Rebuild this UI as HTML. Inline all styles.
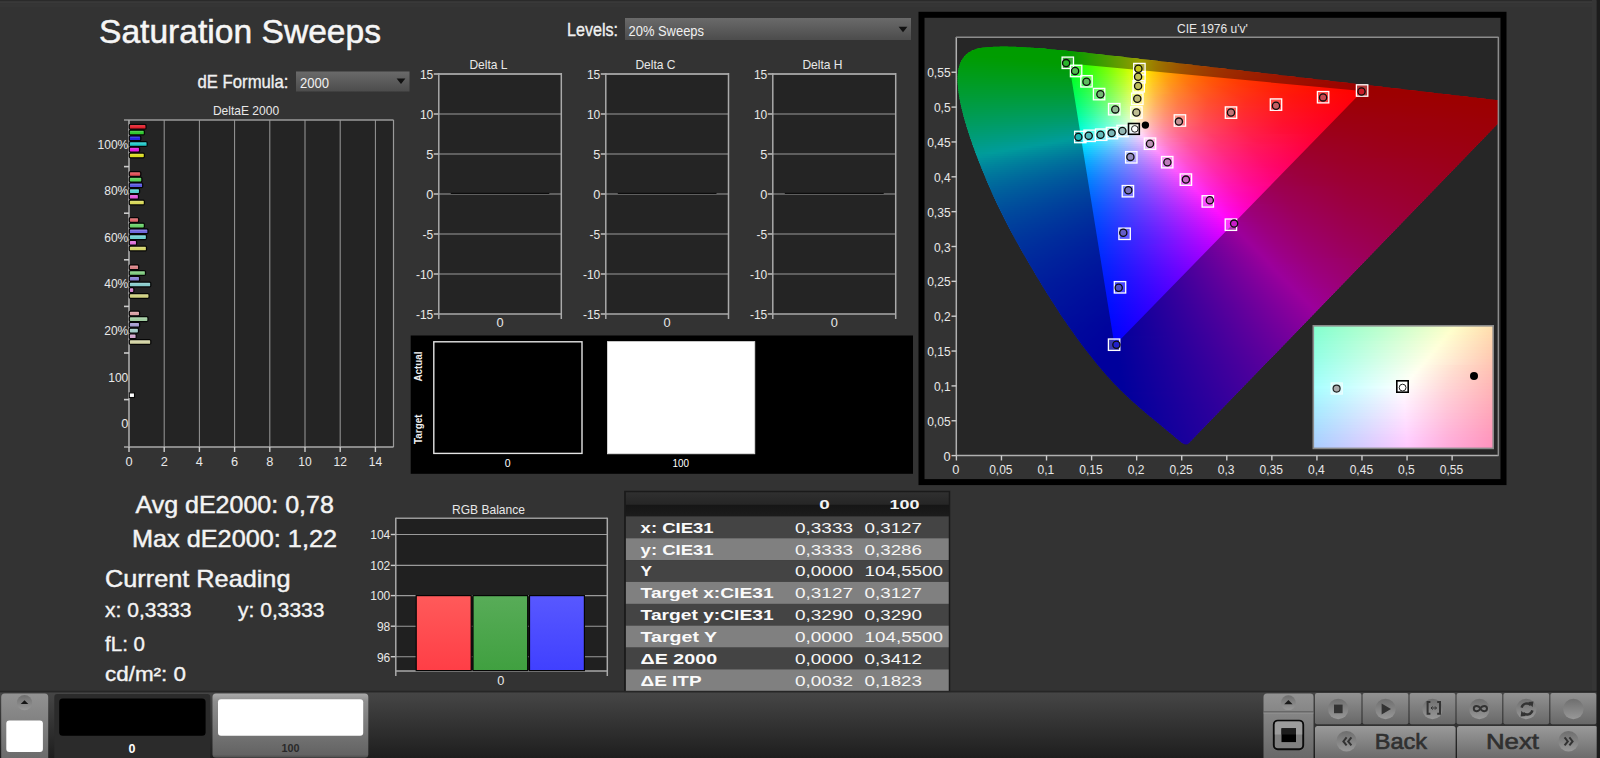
<!DOCTYPE html>
<html lang="en"><head><meta charset="utf-8"><title>Saturation Sweeps</title><style>html,body{margin:0;padding:0;background:#333;overflow:hidden}body{width:1600px;height:758px}</style></head><body>
<svg width="1600" height="758" viewBox="0 0 1600 758" font-family='"Liberation Sans", "DejaVu Sans", sans-serif' style="display:block"><defs><linearGradient id="dd" x1="0" y1="0" x2="0" y2="1"><stop offset="0" stop-color="#6a6a6a"/><stop offset="1" stop-color="#4c4c4c"/></linearGradient><linearGradient id="bb0" x1="0" y1="0" x2="0" y2="1"><stop offset="0" stop-color="#ff5a5a"/><stop offset="1" stop-color="#ff3e46"/></linearGradient><linearGradient id="bb1" x1="0" y1="0" x2="0" y2="1"><stop offset="0" stop-color="#58ac58"/><stop offset="1" stop-color="#40a040"/></linearGradient><linearGradient id="bb2" x1="0" y1="0" x2="0" y2="1"><stop offset="0" stop-color="#5858ff"/><stop offset="1" stop-color="#4040ff"/></linearGradient><linearGradient id="th" x1="0" y1="0" x2="0" y2="1"><stop offset="0" stop-color="#303030"/><stop offset=".5" stop-color="#262626"/><stop offset=".55" stop-color="#161616"/><stop offset="1" stop-color="#1c1c1c"/></linearGradient><linearGradient id="r0" gradientUnits="userSpaceOnUse" x1="0" x2="2000" y1="0" y2="0"><stop offset=".4930" stop-color="#00ff00"/><stop offset=".5115" stop-color="#00ff00"/></linearGradient><linearGradient id="r1" gradientUnits="userSpaceOnUse" x1="0" x2="2000" y1="0" y2="0"><stop offset=".4865" stop-color="#00ff00"/><stop offset=".5260" stop-color="#00ff00"/></linearGradient><linearGradient id="r2" gradientUnits="userSpaceOnUse" x1="0" x2="2000" y1="0" y2="0"><stop offset=".4840" stop-color="#00ff00"/><stop offset=".5335" stop-color="#00ff00"/><stop offset=".5360" stop-color="#0dff00"/></linearGradient><linearGradient id="r3" gradientUnits="userSpaceOnUse" x1="0" x2="2000" y1="0" y2="0"><stop offset=".4825" stop-color="#00ff00"/><stop offset=".5335" stop-color="#00ff00"/><stop offset=".5455" stop-color="#44ff00"/></linearGradient><linearGradient id="r4" gradientUnits="userSpaceOnUse" x1="0" x2="2000" y1="0" y2="0"><stop offset=".4810" stop-color="#00ff03"/><stop offset=".5340" stop-color="#01ff00"/><stop offset=".5445" stop-color="#3dff00"/><stop offset=".5545" stop-color="#7eff00"/></linearGradient><linearGradient id="r5" gradientUnits="userSpaceOnUse" x1="0" x2="2000" y1="0" y2="0"><stop offset=".4800" stop-color="#00ff07"/><stop offset=".5000" stop-color="#00ff00"/><stop offset=".5340" stop-color="#00ff00"/><stop offset=".5495" stop-color="#5cff00"/><stop offset=".5635" stop-color="#c2ff00"/></linearGradient><linearGradient id="r6" gradientUnits="userSpaceOnUse" x1="0" x2="2000" y1="0" y2="0"><stop offset=".4795" stop-color="#00ff0b"/><stop offset=".5105" stop-color="#00ff00"/><stop offset=".5340" stop-color="#00ff00"/><stop offset=".5430" stop-color="#33ff00"/><stop offset=".5530" stop-color="#74ff00"/><stop offset=".5620" stop-color="#b6ff00"/><stop offset=".5705" stop-color="#feff00"/><stop offset=".5725" stop-color="#ffef00"/></linearGradient><linearGradient id="r7" gradientUnits="userSpaceOnUse" x1="0" x2="2000" y1="0" y2="0"><stop offset=".4790" stop-color="#00ff0f"/><stop offset=".5210" stop-color="#00ff00"/><stop offset=".5345" stop-color="#01ff00"/><stop offset=".5445" stop-color="#3bff00"/><stop offset=".5535" stop-color="#77ff00"/><stop offset=".5625" stop-color="#baff00"/><stop offset=".5705" stop-color="#ffff00"/><stop offset=".5755" stop-color="#ffd700"/><stop offset=".5810" stop-color="#ffb500"/></linearGradient><linearGradient id="r8" gradientUnits="userSpaceOnUse" x1="0" x2="2000" y1="0" y2="0"><stop offset=".4785" stop-color="#00ff13"/><stop offset=".5345" stop-color="#00ff00"/><stop offset=".5445" stop-color="#3bff00"/><stop offset=".5535" stop-color="#77ff00"/><stop offset=".5620" stop-color="#b7ff00"/><stop offset=".5705" stop-color="#fffe00"/><stop offset=".5745" stop-color="#ffde00"/><stop offset=".5790" stop-color="#ffc000"/><stop offset=".5895" stop-color="#ff8d00"/></linearGradient><linearGradient id="r9" gradientUnits="userSpaceOnUse" x1="0" x2="2000" y1="0" y2="0"><stop offset=".4785" stop-color="#00ff17"/><stop offset=".5345" stop-color="#00ff04"/><stop offset=".5435" stop-color="#34ff00"/><stop offset=".5530" stop-color="#73ff00"/><stop offset=".5615" stop-color="#b3ff00"/><stop offset=".5705" stop-color="#fffe00"/><stop offset=".5760" stop-color="#ffd200"/><stop offset=".5825" stop-color="#ffac00"/><stop offset=".5900" stop-color="#ff8a00"/><stop offset=".5985" stop-color="#ff6e00"/></linearGradient><linearGradient id="r10" gradientUnits="userSpaceOnUse" x1="0" x2="2000" y1="0" y2="0"><stop offset=".4785" stop-color="#00ff1b"/><stop offset=".5350" stop-color="#01ff09"/><stop offset=".5445" stop-color="#3aff04"/><stop offset=".5535" stop-color="#76ff00"/><stop offset=".5620" stop-color="#b7ff00"/><stop offset=".5700" stop-color="#fdff00"/><stop offset=".5775" stop-color="#ffc700"/><stop offset=".5855" stop-color="#ff9c00"/><stop offset=".5955" stop-color="#ff7600"/><stop offset=".6070" stop-color="#ff5800"/></linearGradient><linearGradient id="r11" gradientUnits="userSpaceOnUse" x1="0" x2="2000" y1="0" y2="0"><stop offset=".4785" stop-color="#00ff1f"/><stop offset=".5350" stop-color="#00ff0e"/><stop offset=".5445" stop-color="#39ff0a"/><stop offset=".5535" stop-color="#76ff06"/><stop offset=".5620" stop-color="#b8ff01"/><stop offset=".5700" stop-color="#fdff00"/><stop offset=".5785" stop-color="#ffc000"/><stop offset=".5885" stop-color="#ff8e00"/><stop offset=".6005" stop-color="#ff6700"/><stop offset=".6155" stop-color="#ff4600"/></linearGradient><linearGradient id="r12" gradientUnits="userSpaceOnUse" x1="0" x2="2000" y1="0" y2="0"><stop offset=".4785" stop-color="#00ff23"/><stop offset=".5350" stop-color="#00ff13"/><stop offset=".5440" stop-color="#35ff10"/><stop offset=".5535" stop-color="#76ff0c"/><stop offset=".5620" stop-color="#b8ff07"/><stop offset=".5700" stop-color="#feff03"/><stop offset=".5745" stop-color="#ffda00"/><stop offset=".5795" stop-color="#ffb900"/><stop offset=".5850" stop-color="#ff9d00"/><stop offset=".5910" stop-color="#ff8400"/><stop offset=".6060" stop-color="#ff5800"/><stop offset=".6245" stop-color="#ff3700"/></linearGradient><linearGradient id="r13" gradientUnits="userSpaceOnUse" x1="0" x2="2000" y1="0" y2="0"><stop offset=".4785" stop-color="#00ff27"/><stop offset=".5355" stop-color="#01ff19"/><stop offset=".5450" stop-color="#3bff15"/><stop offset=".5540" stop-color="#79ff11"/><stop offset=".5620" stop-color="#b8ff0e"/><stop offset=".5700" stop-color="#ffff09"/><stop offset=".5745" stop-color="#ffd906"/><stop offset=".5800" stop-color="#ffb502"/><stop offset=".5865" stop-color="#ff9500"/><stop offset=".5935" stop-color="#ff7a00"/><stop offset=".6105" stop-color="#ff4e00"/><stop offset=".6330" stop-color="#ff2b00"/></linearGradient><linearGradient id="r14" gradientUnits="userSpaceOnUse" x1="0" x2="2000" y1="0" y2="0"><stop offset=".4785" stop-color="#00ff2b"/><stop offset=".5355" stop-color="#00ff1e"/><stop offset=".5450" stop-color="#3aff1b"/><stop offset=".5535" stop-color="#76ff18"/><stop offset=".5620" stop-color="#b8ff14"/><stop offset=".5695" stop-color="#fbff11"/><stop offset=".5700" stop-color="#fffe10"/><stop offset=".5760" stop-color="#ffcd0b"/><stop offset=".5815" stop-color="#ffac07"/><stop offset=".5885" stop-color="#ff8c03"/><stop offset=".5960" stop-color="#ff7100"/><stop offset=".6050" stop-color="#ff5900"/><stop offset=".6155" stop-color="#ff4400"/><stop offset=".6415" stop-color="#ff2100"/></linearGradient><linearGradient id="r15" gradientUnits="userSpaceOnUse" x1="0" x2="2000" y1="0" y2="0"><stop offset=".4785" stop-color="#00ff2f"/><stop offset=".5355" stop-color="#00ff24"/><stop offset=".5445" stop-color="#37ff21"/><stop offset=".5535" stop-color="#75ff1e"/><stop offset=".5620" stop-color="#b9ff1b"/><stop offset=".5695" stop-color="#fcff18"/><stop offset=".5760" stop-color="#ffcc11"/><stop offset=".5820" stop-color="#ffa90c"/><stop offset=".5895" stop-color="#ff8707"/><stop offset=".5985" stop-color="#ff6903"/><stop offset=".6085" stop-color="#ff5000"/><stop offset=".6205" stop-color="#ff3b00"/><stop offset=".6500" stop-color="#ff1900"/></linearGradient><linearGradient id="r16" gradientUnits="userSpaceOnUse" x1="0" x2="2000" y1="0" y2="0"><stop offset=".4785" stop-color="#00ff33"/><stop offset=".5360" stop-color="#01ff29"/><stop offset=".5450" stop-color="#39ff27"/><stop offset=".5535" stop-color="#75ff24"/><stop offset=".5605" stop-color="#acff22"/><stop offset=".5700" stop-color="#fffc1e"/><stop offset=".5760" stop-color="#ffcc16"/><stop offset=".5830" stop-color="#ffa210"/><stop offset=".5910" stop-color="#ff800a"/><stop offset=".6005" stop-color="#ff6306"/><stop offset=".6120" stop-color="#ff4901"/><stop offset=".6250" stop-color="#ff3300"/><stop offset=".6590" stop-color="#ff1100"/></linearGradient><linearGradient id="r17" gradientUnits="userSpaceOnUse" x1="0" x2="2000" y1="0" y2="0"><stop offset=".4785" stop-color="#00ff37"/><stop offset=".5360" stop-color="#00ff2f"/><stop offset=".5450" stop-color="#39ff2d"/><stop offset=".5530" stop-color="#71ff2b"/><stop offset=".5615" stop-color="#b5ff29"/><stop offset=".5695" stop-color="#feff26"/><stop offset=".5700" stop-color="#fffb25"/><stop offset=".5760" stop-color="#ffcb1c"/><stop offset=".5835" stop-color="#ff9f14"/><stop offset=".5925" stop-color="#ff7a0e"/><stop offset=".6030" stop-color="#ff5b08"/><stop offset=".6155" stop-color="#ff4103"/><stop offset=".6300" stop-color="#ff2c00"/><stop offset=".6675" stop-color="#ff0a00"/></linearGradient><linearGradient id="r18" gradientUnits="userSpaceOnUse" x1="0" x2="2000" y1="0" y2="0"><stop offset=".4785" stop-color="#00ff3b"/><stop offset=".5360" stop-color="#00ff35"/><stop offset=".5445" stop-color="#35ff33"/><stop offset=".5535" stop-color="#75ff31"/><stop offset=".5620" stop-color="#baff2f"/><stop offset=".5695" stop-color="#ffff2e"/><stop offset=".5760" stop-color="#ffca23"/><stop offset=".5840" stop-color="#ff9c19"/><stop offset=".5935" stop-color="#ff7611"/><stop offset=".6045" stop-color="#ff570b"/><stop offset=".6180" stop-color="#ff3c05"/><stop offset=".6340" stop-color="#ff2701"/><stop offset=".6760" stop-color="#ff0500"/></linearGradient><linearGradient id="r19" gradientUnits="userSpaceOnUse" x1="0" x2="2000" y1="0" y2="0"><stop offset=".4785" stop-color="#00ff40"/><stop offset=".5360" stop-color="#00ff3a"/><stop offset=".5440" stop-color="#31ff39"/><stop offset=".5530" stop-color="#71ff38"/><stop offset=".5610" stop-color="#b1ff37"/><stop offset=".5695" stop-color="#fffe35"/><stop offset=".5765" stop-color="#ffc528"/><stop offset=".5845" stop-color="#ff981e"/><stop offset=".5945" stop-color="#ff7115"/><stop offset=".6065" stop-color="#ff520d"/><stop offset=".6210" stop-color="#ff3707"/><stop offset=".6385" stop-color="#ff2102"/><stop offset=".6600" stop-color="#ff0e00"/><stop offset=".6850" stop-color="#ff0000"/></linearGradient><linearGradient id="r20" gradientUnits="userSpaceOnUse" x1="0" x2="2000" y1="0" y2="0"><stop offset=".4785" stop-color="#00ff44"/><stop offset=".5365" stop-color="#00ff40"/><stop offset=".5455" stop-color="#3aff40"/><stop offset=".5535" stop-color="#74ff3f"/><stop offset=".5610" stop-color="#b2ff3e"/><stop offset=".5695" stop-color="#fffd3c"/><stop offset=".5765" stop-color="#ffc42e"/><stop offset=".5855" stop-color="#ff9321"/><stop offset=".5960" stop-color="#ff6c18"/><stop offset=".6090" stop-color="#ff4b0f"/><stop offset=".6260" stop-color="#ff2f08"/><stop offset=".6465" stop-color="#ff1903"/><stop offset=".6800" stop-color="#ff0200"/><stop offset=".6935" stop-color="#ff0000"/></linearGradient><linearGradient id="r21" gradientUnits="userSpaceOnUse" x1="0" x2="2000" y1="0" y2="0"><stop offset=".4785" stop-color="#00ff48"/><stop offset=".5365" stop-color="#00ff46"/><stop offset=".5445" stop-color="#33ff46"/><stop offset=".5530" stop-color="#70ff46"/><stop offset=".5605" stop-color="#adff45"/><stop offset=".5695" stop-color="#fffc44"/><stop offset=".5730" stop-color="#ffdd3b"/><stop offset=".5770" stop-color="#ffc033"/><stop offset=".5860" stop-color="#ff8f26"/><stop offset=".5975" stop-color="#ff671a"/><stop offset=".6115" stop-color="#ff4611"/><stop offset=".6305" stop-color="#ff2909"/><stop offset=".6545" stop-color="#ff1103"/><stop offset=".6820" stop-color="#ff0000"/><stop offset=".7020" stop-color="#ff0000"/></linearGradient><linearGradient id="r22" gradientUnits="userSpaceOnUse" x1="0" x2="2000" y1="0" y2="0"><stop offset=".4785" stop-color="#00ff4d"/><stop offset=".5365" stop-color="#00ff4d"/><stop offset=".5440" stop-color="#2fff4c"/><stop offset=".5530" stop-color="#70ff4c"/><stop offset=".5615" stop-color="#b6ff4c"/><stop offset=".5690" stop-color="#feff4c"/><stop offset=".5695" stop-color="#fffb4b"/><stop offset=".5735" stop-color="#ffd841"/><stop offset=".5775" stop-color="#ffbc38"/><stop offset=".5870" stop-color="#ff8a29"/><stop offset=".5990" stop-color="#ff611d"/><stop offset=".6140" stop-color="#ff4013"/><stop offset=".6355" stop-color="#ff220a"/><stop offset=".6635" stop-color="#ff0a03"/><stop offset=".6815" stop-color="#ff0000"/><stop offset=".7110" stop-color="#ff0000"/></linearGradient><linearGradient id="r23" gradientUnits="userSpaceOnUse" x1="0" x2="2000" y1="0" y2="0"><stop offset=".4785" stop-color="#00ff51"/><stop offset=".5370" stop-color="#01ff53"/><stop offset=".5460" stop-color="#3cff53"/><stop offset=".5540" stop-color="#77ff54"/><stop offset=".5615" stop-color="#b7ff54"/><stop offset=".5690" stop-color="#ffff54"/><stop offset=".5730" stop-color="#ffdb49"/><stop offset=".5775" stop-color="#ffbb3e"/><stop offset=".5875" stop-color="#ff872e"/><stop offset=".6000" stop-color="#ff5e20"/><stop offset=".6160" stop-color="#ff3c15"/><stop offset=".6405" stop-color="#ff1c0b"/><stop offset=".6720" stop-color="#ff0503"/><stop offset=".6805" stop-color="#ff0002"/><stop offset=".7195" stop-color="#ff0000"/></linearGradient><linearGradient id="r24" gradientUnits="userSpaceOnUse" x1="0" x2="2000" y1="0" y2="0"><stop offset=".4785" stop-color="#00ff56"/><stop offset=".5370" stop-color="#00ff59"/><stop offset=".5455" stop-color="#38ff5a"/><stop offset=".5540" stop-color="#77ff5b"/><stop offset=".5615" stop-color="#b7ff5c"/><stop offset=".5690" stop-color="#fffe5c"/><stop offset=".5730" stop-color="#ffda50"/><stop offset=".5775" stop-color="#ffba44"/><stop offset=".5825" stop-color="#ff9d3a"/><stop offset=".5880" stop-color="#ff8432"/><stop offset=".6015" stop-color="#ff5923"/><stop offset=".6180" stop-color="#ff3817"/><stop offset=".6440" stop-color="#ff180c"/><stop offset=".6790" stop-color="#ff0004"/><stop offset=".7280" stop-color="#ff0000"/></linearGradient><linearGradient id="r25" gradientUnits="userSpaceOnUse" x1="0" x2="2000" y1="0" y2="0"><stop offset=".4785" stop-color="#00ff5a"/><stop offset=".5370" stop-color="#00ff5f"/><stop offset=".5445" stop-color="#30ff60"/><stop offset=".5535" stop-color="#73ff62"/><stop offset=".5610" stop-color="#b3ff63"/><stop offset=".5690" stop-color="#fffe64"/><stop offset=".5730" stop-color="#ffd957"/><stop offset=".5775" stop-color="#ffb84a"/><stop offset=".5825" stop-color="#ff9c40"/><stop offset=".5885" stop-color="#ff8136"/><stop offset=".6025" stop-color="#ff5625"/><stop offset=".6200" stop-color="#ff3419"/><stop offset=".6455" stop-color="#ff160e"/><stop offset=".6785" stop-color="#ff0005"/><stop offset=".7365" stop-color="#ff0000"/></linearGradient><linearGradient id="r26" gradientUnits="userSpaceOnUse" x1="0" x2="2000" y1="0" y2="0"><stop offset=".4785" stop-color="#00ff5f"/><stop offset=".5375" stop-color="#01ff66"/><stop offset=".5455" stop-color="#36ff68"/><stop offset=".5535" stop-color="#73ff69"/><stop offset=".5605" stop-color="#afff6b"/><stop offset=".5690" stop-color="#fffd6c"/><stop offset=".5730" stop-color="#ffd85e"/><stop offset=".5780" stop-color="#ffb44f"/><stop offset=".5835" stop-color="#ff9643"/><stop offset=".5895" stop-color="#ff7c39"/><stop offset=".6040" stop-color="#ff5128"/><stop offset=".6225" stop-color="#ff301a"/><stop offset=".6465" stop-color="#ff1510"/><stop offset=".6775" stop-color="#ff0007"/><stop offset=".7455" stop-color="#ff0000"/></linearGradient><linearGradient id="r27" gradientUnits="userSpaceOnUse" x1="0" x2="2000" y1="0" y2="0"><stop offset=".4785" stop-color="#00ff63"/><stop offset=".5375" stop-color="#00ff6d"/><stop offset=".5455" stop-color="#36ff6f"/><stop offset=".5535" stop-color="#73ff71"/><stop offset=".5610" stop-color="#b3ff73"/><stop offset=".5685" stop-color="#fdff76"/><stop offset=".5690" stop-color="#fffc74"/><stop offset=".5730" stop-color="#ffd765"/><stop offset=".5780" stop-color="#ffb356"/><stop offset=".5835" stop-color="#ff9549"/><stop offset=".5895" stop-color="#ff7b3e"/><stop offset=".6040" stop-color="#ff502b"/><stop offset=".6230" stop-color="#ff2e1d"/><stop offset=".6465" stop-color="#ff1412"/><stop offset=".6765" stop-color="#ff0009"/><stop offset=".7490" stop-color="#ff0000"/></linearGradient><linearGradient id="r28" gradientUnits="userSpaceOnUse" x1="0" x2="2000" y1="0" y2="0"><stop offset=".4785" stop-color="#00ff68"/><stop offset=".5375" stop-color="#00ff73"/><stop offset=".5445" stop-color="#2eff75"/><stop offset=".5530" stop-color="#6eff78"/><stop offset=".5610" stop-color="#b4ff7b"/><stop offset=".5685" stop-color="#feff7e"/><stop offset=".5690" stop-color="#fffb7c"/><stop offset=".5730" stop-color="#ffd66c"/><stop offset=".5780" stop-color="#ffb25c"/><stop offset=".5835" stop-color="#ff944e"/><stop offset=".5895" stop-color="#ff7a42"/><stop offset=".6040" stop-color="#ff4f2f"/><stop offset=".6230" stop-color="#ff2d20"/><stop offset=".6460" stop-color="#ff1414"/><stop offset=".6755" stop-color="#ff000b"/><stop offset=".7490" stop-color="#ff0000"/></linearGradient><linearGradient id="r29" gradientUnits="userSpaceOnUse" x1="0" x2="2000" y1="0" y2="0"><stop offset=".4785" stop-color="#00ff6d"/><stop offset=".5380" stop-color="#01ff7a"/><stop offset=".5460" stop-color="#38ff7d"/><stop offset=".5540" stop-color="#76ff80"/><stop offset=".5615" stop-color="#b9ff84"/><stop offset=".5685" stop-color="#ffff87"/><stop offset=".5725" stop-color="#ffd975"/><stop offset=".5775" stop-color="#ffb463"/><stop offset=".5830" stop-color="#ff9555"/><stop offset=".5890" stop-color="#ff7b48"/><stop offset=".6035" stop-color="#ff5033"/><stop offset=".6225" stop-color="#ff2d23"/><stop offset=".6455" stop-color="#ff1417"/><stop offset=".6745" stop-color="#ff000d"/><stop offset=".7490" stop-color="#ff0001"/></linearGradient><linearGradient id="r30" gradientUnits="userSpaceOnUse" x1="0" x2="2000" y1="0" y2="0"><stop offset=".4790" stop-color="#00ff71"/><stop offset=".5380" stop-color="#00ff81"/><stop offset=".5460" stop-color="#37ff84"/><stop offset=".5540" stop-color="#76ff88"/><stop offset=".5610" stop-color="#b4ff8c"/><stop offset=".5685" stop-color="#fffe90"/><stop offset=".5725" stop-color="#ffd87c"/><stop offset=".5775" stop-color="#ffb36a"/><stop offset=".5830" stop-color="#ff945a"/><stop offset=".5890" stop-color="#ff7a4d"/><stop offset=".6035" stop-color="#ff4f37"/><stop offset=".6225" stop-color="#ff2d26"/><stop offset=".6450" stop-color="#ff1419"/><stop offset=".6735" stop-color="#ff000f"/><stop offset=".7490" stop-color="#ff0002"/></linearGradient><linearGradient id="r31" gradientUnits="userSpaceOnUse" x1="0" x2="2000" y1="0" y2="0"><stop offset=".4790" stop-color="#00ff76"/><stop offset=".5380" stop-color="#00ff88"/><stop offset=".5455" stop-color="#33ff8c"/><stop offset=".5535" stop-color="#72ff90"/><stop offset=".5605" stop-color="#b0ff94"/><stop offset=".5685" stop-color="#fffd98"/><stop offset=".5725" stop-color="#ffd784"/><stop offset=".5770" stop-color="#ffb572"/><stop offset=".5825" stop-color="#ff9661"/><stop offset=".5885" stop-color="#ff7b53"/><stop offset=".6030" stop-color="#ff4f3b"/><stop offset=".6220" stop-color="#ff2c29"/><stop offset=".6445" stop-color="#ff131c"/><stop offset=".6725" stop-color="#ff0011"/><stop offset=".7490" stop-color="#ff0003"/></linearGradient><linearGradient id="r32" gradientUnits="userSpaceOnUse" x1="0" x2="2000" y1="0" y2="0"><stop offset=".4795" stop-color="#00ff7b"/><stop offset=".5385" stop-color="#01ff90"/><stop offset=".5460" stop-color="#36ff94"/><stop offset=".5535" stop-color="#71ff98"/><stop offset=".5600" stop-color="#abff9c"/><stop offset=".5680" stop-color="#fdffa3"/><stop offset=".5685" stop-color="#fffca1"/><stop offset=".5725" stop-color="#ffd68b"/><stop offset=".5770" stop-color="#ffb479"/><stop offset=".5825" stop-color="#ff9567"/><stop offset=".5885" stop-color="#ff7a58"/><stop offset=".6030" stop-color="#ff4e3f"/><stop offset=".6220" stop-color="#ff2c2c"/><stop offset=".6440" stop-color="#ff131e"/><stop offset=".6715" stop-color="#ff0013"/><stop offset=".7490" stop-color="#ff0004"/></linearGradient><linearGradient id="r33" gradientUnits="userSpaceOnUse" x1="0" x2="2000" y1="0" y2="0"><stop offset=".4795" stop-color="#00ff80"/><stop offset=".5385" stop-color="#00ff97"/><stop offset=".5460" stop-color="#35ff9b"/><stop offset=".5535" stop-color="#71ffa0"/><stop offset=".5610" stop-color="#b5ffa6"/><stop offset=".5680" stop-color="#feffac"/><stop offset=".5685" stop-color="#fffbaa"/><stop offset=".5725" stop-color="#ffd593"/><stop offset=".5770" stop-color="#ffb37f"/><stop offset=".5825" stop-color="#ff936d"/><stop offset=".5885" stop-color="#ff795d"/><stop offset=".6030" stop-color="#ff4d43"/><stop offset=".6220" stop-color="#ff2b2f"/><stop offset=".6435" stop-color="#ff1321"/><stop offset=".6705" stop-color="#ff0015"/><stop offset=".7490" stop-color="#ff0005"/></linearGradient><linearGradient id="r34" gradientUnits="userSpaceOnUse" x1="0" x2="2000" y1="0" y2="0"><stop offset=".4800" stop-color="#00ff85"/><stop offset=".5385" stop-color="#00ff9e"/><stop offset=".5460" stop-color="#34ffa3"/><stop offset=".5540" stop-color="#75ffa9"/><stop offset=".5610" stop-color="#b5ffaf"/><stop offset=".5680" stop-color="#ffffb6"/><stop offset=".5720" stop-color="#ffd89d"/><stop offset=".5765" stop-color="#ffb588"/><stop offset=".5820" stop-color="#ff9574"/><stop offset=".5880" stop-color="#ff7a63"/><stop offset=".6025" stop-color="#ff4d48"/><stop offset=".6215" stop-color="#ff2b32"/><stop offset=".6430" stop-color="#ff1323"/><stop offset=".6695" stop-color="#ff0018"/><stop offset=".7490" stop-color="#ff0006"/></linearGradient><linearGradient id="r35" gradientUnits="userSpaceOnUse" x1="0" x2="2000" y1="0" y2="0"><stop offset=".4800" stop-color="#00ff8a"/><stop offset=".5390" stop-color="#01ffa6"/><stop offset=".5465" stop-color="#37ffab"/><stop offset=".5540" stop-color="#75ffb2"/><stop offset=".5610" stop-color="#b6ffb8"/><stop offset=".5680" stop-color="#fffebf"/><stop offset=".5720" stop-color="#ffd7a5"/><stop offset=".5765" stop-color="#ffb48f"/><stop offset=".5820" stop-color="#ff947a"/><stop offset=".5880" stop-color="#ff7968"/><stop offset=".6025" stop-color="#ff4d4b"/><stop offset=".6215" stop-color="#ff2a35"/><stop offset=".6425" stop-color="#ff1326"/><stop offset=".6685" stop-color="#ff001a"/><stop offset=".7490" stop-color="#ff0007"/></linearGradient><linearGradient id="r36" gradientUnits="userSpaceOnUse" x1="0" x2="2000" y1="0" y2="0"><stop offset=".4805" stop-color="#00ff8f"/><stop offset=".5390" stop-color="#00ffae"/><stop offset=".5465" stop-color="#37ffb4"/><stop offset=".5540" stop-color="#75ffba"/><stop offset=".5605" stop-color="#b1ffc1"/><stop offset=".5680" stop-color="#fffdc8"/><stop offset=".5720" stop-color="#ffd5ad"/><stop offset=".5765" stop-color="#ffb396"/><stop offset=".5820" stop-color="#ff9380"/><stop offset=".5880" stop-color="#ff786d"/><stop offset=".6025" stop-color="#ff4c4f"/><stop offset=".6215" stop-color="#ff2938"/><stop offset=".6420" stop-color="#ff1228"/><stop offset=".6675" stop-color="#ff001c"/><stop offset=".7490" stop-color="#ff0009"/></linearGradient><linearGradient id="r37" gradientUnits="userSpaceOnUse" x1="0" x2="2000" y1="0" y2="0"><stop offset=".4805" stop-color="#00ff95"/><stop offset=".5125" stop-color="#00ffa3"/><stop offset=".5390" stop-color="#00ffb5"/><stop offset=".5460" stop-color="#32ffbb"/><stop offset=".5535" stop-color="#70ffc3"/><stop offset=".5600" stop-color="#acffca"/><stop offset=".5680" stop-color="#fffcd2"/><stop offset=".5720" stop-color="#ffd4b5"/><stop offset=".5765" stop-color="#ffb29d"/><stop offset=".5820" stop-color="#ff9286"/><stop offset=".5880" stop-color="#ff7773"/><stop offset=".6025" stop-color="#ff4b53"/><stop offset=".6215" stop-color="#ff283b"/><stop offset=".6415" stop-color="#ff122b"/><stop offset=".6665" stop-color="#ff001e"/><stop offset=".7490" stop-color="#ff000a"/></linearGradient><linearGradient id="r38" gradientUnits="userSpaceOnUse" x1="0" x2="2000" y1="0" y2="0"><stop offset=".4810" stop-color="#00ff9a"/><stop offset=".5130" stop-color="#00ffaa"/><stop offset=".5395" stop-color="#01ffbe"/><stop offset=".5470" stop-color="#39ffc5"/><stop offset=".5540" stop-color="#74ffcc"/><stop offset=".5610" stop-color="#b7ffd5"/><stop offset=".5675" stop-color="#fdffde"/><stop offset=".5680" stop-color="#fffbdb"/><stop offset=".5720" stop-color="#ffd3bd"/><stop offset=".5765" stop-color="#ffb1a4"/><stop offset=".5820" stop-color="#ff908c"/><stop offset=".5880" stop-color="#ff7678"/><stop offset=".6025" stop-color="#ff4a57"/><stop offset=".6215" stop-color="#ff283e"/><stop offset=".6415" stop-color="#ff112d"/><stop offset=".6660" stop-color="#ff0020"/><stop offset=".7490" stop-color="#ff000b"/></linearGradient><linearGradient id="r39" gradientUnits="userSpaceOnUse" x1="0" x2="2000" y1="0" y2="0"><stop offset=".4815" stop-color="#00ff9f"/><stop offset=".5130" stop-color="#00ffb1"/><stop offset=".5395" stop-color="#00ffc6"/><stop offset=".5465" stop-color="#34ffcd"/><stop offset=".5535" stop-color="#6fffd5"/><stop offset=".5605" stop-color="#b2ffde"/><stop offset=".5675" stop-color="#feffe8"/><stop offset=".5680" stop-color="#fffae4"/><stop offset=".5720" stop-color="#ffd2c6"/><stop offset=".5765" stop-color="#ffb0ab"/><stop offset=".5815" stop-color="#ff9294"/><stop offset=".5875" stop-color="#ff767f"/><stop offset=".6020" stop-color="#ff4a5c"/><stop offset=".6210" stop-color="#ff2841"/><stop offset=".6410" stop-color="#ff1130"/><stop offset=".6650" stop-color="#ff0023"/><stop offset=".7490" stop-color="#ff000c"/></linearGradient><linearGradient id="r40" gradientUnits="userSpaceOnUse" x1="0" x2="2000" y1="0" y2="0"><stop offset=".4815" stop-color="#00ffa5"/><stop offset=".5135" stop-color="#00ffb8"/><stop offset=".5395" stop-color="#00ffce"/><stop offset=".5465" stop-color="#34ffd5"/><stop offset=".5540" stop-color="#73ffdf"/><stop offset=".5610" stop-color="#b7ffe9"/><stop offset=".5675" stop-color="#fffff3"/><stop offset=".5715" stop-color="#ffd5d1"/><stop offset=".5760" stop-color="#ffb2b5"/><stop offset=".5810" stop-color="#ff939c"/><stop offset=".5870" stop-color="#ff7786"/><stop offset=".5940" stop-color="#ff5f72"/><stop offset=".6015" stop-color="#ff4a61"/><stop offset=".6205" stop-color="#ff2745"/><stop offset=".6400" stop-color="#ff1133"/><stop offset=".6640" stop-color="#ff0025"/><stop offset=".7010" stop-color="#ff0018"/><stop offset=".7490" stop-color="#ff000d"/></linearGradient><linearGradient id="r41" gradientUnits="userSpaceOnUse" x1="0" x2="2000" y1="0" y2="0"><stop offset=".4820" stop-color="#00ffaa"/><stop offset=".5140" stop-color="#00ffbf"/><stop offset=".5400" stop-color="#01ffd7"/><stop offset=".5475" stop-color="#3bffe0"/><stop offset=".5545" stop-color="#78ffe9"/><stop offset=".5605" stop-color="#b3fff2"/><stop offset=".5675" stop-color="#fffdfd"/><stop offset=".5715" stop-color="#ffd4da"/><stop offset=".5760" stop-color="#ffb1bc"/><stop offset=".5810" stop-color="#ff92a3"/><stop offset=".5870" stop-color="#ff768b"/><stop offset=".5940" stop-color="#ff5d76"/><stop offset=".6015" stop-color="#ff4965"/><stop offset=".6200" stop-color="#ff2749"/><stop offset=".6395" stop-color="#ff1136"/><stop offset=".6630" stop-color="#ff0028"/><stop offset=".7000" stop-color="#ff0019"/><stop offset=".7480" stop-color="#ff000e"/></linearGradient><linearGradient id="r42" gradientUnits="userSpaceOnUse" x1="0" x2="2000" y1="0" y2="0"><stop offset=".4825" stop-color="#00ffb0"/><stop offset=".5140" stop-color="#00ffc5"/><stop offset=".5400" stop-color="#00ffdf"/><stop offset=".5520" stop-color="#61ffef"/><stop offset=".5620" stop-color="#c3ffff"/><stop offset=".5685" stop-color="#fff1fd"/><stop offset=".5725" stop-color="#ffcadb"/><stop offset=".5770" stop-color="#ffa9be"/><stop offset=".5820" stop-color="#ff8ca4"/><stop offset=".5880" stop-color="#ff718d"/><stop offset=".6025" stop-color="#ff4667"/><stop offset=".6215" stop-color="#ff244a"/><stop offset=".6400" stop-color="#ff1038"/><stop offset=".6620" stop-color="#ff002a"/><stop offset=".6990" stop-color="#ff001b"/><stop offset=".7470" stop-color="#ff0010"/></linearGradient><linearGradient id="r43" gradientUnits="userSpaceOnUse" x1="0" x2="2000" y1="0" y2="0"><stop offset=".4825" stop-color="#00ffb6"/><stop offset=".5140" stop-color="#00ffcc"/><stop offset=".5400" stop-color="#00ffe8"/><stop offset=".5480" stop-color="#3efff3"/><stop offset=".5560" stop-color="#86ffff"/><stop offset=".5695" stop-color="#ffe5fd"/><stop offset=".5735" stop-color="#ffc1dc"/><stop offset=".5780" stop-color="#ffa1bf"/><stop offset=".5835" stop-color="#ff83a4"/><stop offset=".5895" stop-color="#ff6a8d"/><stop offset=".6040" stop-color="#ff4268"/><stop offset=".6230" stop-color="#ff224b"/><stop offset=".6405" stop-color="#ff0f3a"/><stop offset=".6610" stop-color="#ff002d"/><stop offset=".6980" stop-color="#ff001d"/><stop offset=".7460" stop-color="#ff0011"/></linearGradient><linearGradient id="r44" gradientUnits="userSpaceOnUse" x1="0" x2="2000" y1="0" y2="0"><stop offset=".4830" stop-color="#00ffbc"/><stop offset=".5145" stop-color="#00ffd4"/><stop offset=".5400" stop-color="#00fff0"/><stop offset=".5500" stop-color="#4effff"/><stop offset=".5705" stop-color="#ffdafd"/><stop offset=".5745" stop-color="#ffb8dd"/><stop offset=".5790" stop-color="#ff9ac0"/><stop offset=".5845" stop-color="#ff7ea6"/><stop offset=".5905" stop-color="#ff668f"/><stop offset=".6055" stop-color="#ff3d69"/><stop offset=".6245" stop-color="#ff1f4c"/><stop offset=".6600" stop-color="#ff002f"/><stop offset=".6970" stop-color="#ff001f"/><stop offset=".7450" stop-color="#ff0012"/></linearGradient><linearGradient id="r45" gradientUnits="userSpaceOnUse" x1="0" x2="2000" y1="0" y2="0"><stop offset=".4830" stop-color="#00ffc1"/><stop offset=".5145" stop-color="#00ffdb"/><stop offset=".5405" stop-color="#00fffa"/><stop offset=".5440" stop-color="#1bffff"/><stop offset=".5565" stop-color="#7febff"/><stop offset=".5715" stop-color="#ffcffd"/><stop offset=".5755" stop-color="#ffafde"/><stop offset=".5805" stop-color="#ff90bf"/><stop offset=".5860" stop-color="#ff76a5"/><stop offset=".5920" stop-color="#ff6090"/><stop offset=".6065" stop-color="#ff3a6b"/><stop offset=".6255" stop-color="#ff1d4e"/><stop offset=".6590" stop-color="#ff0032"/><stop offset=".6960" stop-color="#ff0021"/><stop offset=".7440" stop-color="#ff0014"/></linearGradient><linearGradient id="r46" gradientUnits="userSpaceOnUse" x1="0" x2="2000" y1="0" y2="0"><stop offset=".4835" stop-color="#00ffc7"/><stop offset=".5100" stop-color="#00ffdd"/><stop offset=".5375" stop-color="#00fffe"/><stop offset=".5405" stop-color="#00fbff"/><stop offset=".5545" stop-color="#6be5ff"/><stop offset=".5725" stop-color="#ffc5fd"/><stop offset=".5765" stop-color="#ffa7de"/><stop offset=".5815" stop-color="#ff8ac0"/><stop offset=".5930" stop-color="#ff5b91"/><stop offset=".6080" stop-color="#ff376c"/><stop offset=".6270" stop-color="#ff1a4f"/><stop offset=".6580" stop-color="#ff0035"/><stop offset=".6950" stop-color="#ff0023"/><stop offset=".7435" stop-color="#ff0015"/></linearGradient><linearGradient id="r47" gradientUnits="userSpaceOnUse" x1="0" x2="2000" y1="0" y2="0"><stop offset=".4840" stop-color="#00ffce"/><stop offset=".5095" stop-color="#00ffe4"/><stop offset=".5315" stop-color="#00fffe"/><stop offset=".5405" stop-color="#00f3ff"/><stop offset=".5545" stop-color="#67ddff"/><stop offset=".5735" stop-color="#ffbcfd"/><stop offset=".5775" stop-color="#ff9fdf"/><stop offset=".5825" stop-color="#ff83c2"/><stop offset=".5880" stop-color="#ff6ca9"/><stop offset=".5945" stop-color="#ff5691"/><stop offset=".6095" stop-color="#ff336d"/><stop offset=".6285" stop-color="#ff1850"/><stop offset=".6570" stop-color="#ff0037"/><stop offset=".6940" stop-color="#ff0025"/><stop offset=".7425" stop-color="#ff0016"/></linearGradient><linearGradient id="r48" gradientUnits="userSpaceOnUse" x1="0" x2="2000" y1="0" y2="0"><stop offset=".4845" stop-color="#00ffd4"/><stop offset=".5260" stop-color="#00ffff"/><stop offset=".5410" stop-color="#00eaff"/><stop offset=".5565" stop-color="#72d2ff"/><stop offset=".5745" stop-color="#ffb3fd"/><stop offset=".5785" stop-color="#ff98e0"/><stop offset=".5835" stop-color="#ff7dc3"/><stop offset=".5955" stop-color="#ff5293"/><stop offset=".6105" stop-color="#ff306f"/><stop offset=".6300" stop-color="#ff1652"/><stop offset=".6560" stop-color="#ff003a"/><stop offset=".6930" stop-color="#ff0027"/><stop offset=".7415" stop-color="#ff0018"/></linearGradient><linearGradient id="r49" gradientUnits="userSpaceOnUse" x1="0" x2="2000" y1="0" y2="0"><stop offset=".4845" stop-color="#00ffda"/><stop offset=".5200" stop-color="#00ffff"/><stop offset=".5410" stop-color="#00e2ff"/><stop offset=".5565" stop-color="#6ecbff"/><stop offset=".5755" stop-color="#ffaafd"/><stop offset=".5795" stop-color="#ff91e0"/><stop offset=".5840" stop-color="#ff7ac7"/><stop offset=".5945" stop-color="#ff539b"/><stop offset=".6075" stop-color="#ff3578"/><stop offset=".6240" stop-color="#ff1c5c"/><stop offset=".6550" stop-color="#ff003d"/><stop offset=".6920" stop-color="#ff0029"/><stop offset=".7405" stop-color="#ff0019"/></linearGradient><linearGradient id="r50" gradientUnits="userSpaceOnUse" x1="0" x2="2000" y1="0" y2="0"><stop offset=".4850" stop-color="#00ffe1"/><stop offset=".5140" stop-color="#00ffff"/><stop offset=".5410" stop-color="#00daff"/><stop offset=".5560" stop-color="#66c4ff"/><stop offset=".5765" stop-color="#ffa2fd"/><stop offset=".5850" stop-color="#ff74c8"/><stop offset=".5955" stop-color="#ff4f9d"/><stop offset=".6085" stop-color="#ff327a"/><stop offset=".6250" stop-color="#ff1a5e"/><stop offset=".6540" stop-color="#ff0040"/><stop offset=".6910" stop-color="#ff002b"/><stop offset=".7395" stop-color="#ff001b"/></linearGradient><linearGradient id="r51" gradientUnits="userSpaceOnUse" x1="0" x2="2000" y1="0" y2="0"><stop offset=".4855" stop-color="#00ffe7"/><stop offset=".5080" stop-color="#00ffff"/><stop offset=".5415" stop-color="#01d3ff"/><stop offset=".5585" stop-color="#74baff"/><stop offset=".5775" stop-color="#ff9afd"/><stop offset=".5860" stop-color="#ff6fc9"/><stop offset=".5965" stop-color="#ff4c9e"/><stop offset=".6095" stop-color="#ff2f7c"/><stop offset=".6255" stop-color="#ff1860"/><stop offset=".6530" stop-color="#ff0043"/><stop offset=".6895" stop-color="#ff002d"/><stop offset=".7385" stop-color="#ff001c"/></linearGradient><linearGradient id="r52" gradientUnits="userSpaceOnUse" x1="0" x2="2000" y1="0" y2="0"><stop offset=".4855" stop-color="#00ffed"/><stop offset=".5020" stop-color="#00ffff"/><stop offset=".5415" stop-color="#00ccff"/><stop offset=".5585" stop-color="#70b3ff"/><stop offset=".5785" stop-color="#ff93fd"/><stop offset=".5870" stop-color="#ff6aca"/><stop offset=".5975" stop-color="#ff48a0"/><stop offset=".6105" stop-color="#ff2c7d"/><stop offset=".6265" stop-color="#ff1662"/><stop offset=".6520" stop-color="#ff0046"/><stop offset=".6885" stop-color="#ff002f"/><stop offset=".7375" stop-color="#ff001e"/></linearGradient><linearGradient id="r53" gradientUnits="userSpaceOnUse" x1="0" x2="2000" y1="0" y2="0"><stop offset=".4860" stop-color="#00fff4"/><stop offset=".4960" stop-color="#00ffff"/><stop offset=".5415" stop-color="#00c6ff"/><stop offset=".5580" stop-color="#69aeff"/><stop offset=".5795" stop-color="#ff8cfd"/><stop offset=".5880" stop-color="#ff64cb"/><stop offset=".5985" stop-color="#ff44a1"/><stop offset=".6115" stop-color="#ff2a7f"/><stop offset=".6275" stop-color="#ff1463"/><stop offset=".6515" stop-color="#ff0049"/><stop offset=".6880" stop-color="#ff0031"/><stop offset=".7365" stop-color="#ff001f"/></linearGradient><linearGradient id="r54" gradientUnits="userSpaceOnUse" x1="0" x2="2000" y1="0" y2="0"><stop offset=".4865" stop-color="#00fffb"/><stop offset=".5000" stop-color="#00f4ff"/><stop offset=".5420" stop-color="#01bfff"/><stop offset=".5600" stop-color="#73a5ff"/><stop offset=".5805" stop-color="#ff85fd"/><stop offset=".5890" stop-color="#ff60cc"/><stop offset=".5995" stop-color="#ff41a2"/><stop offset=".6125" stop-color="#ff2780"/><stop offset=".6285" stop-color="#ff1265"/><stop offset=".6505" stop-color="#ff004c"/><stop offset=".6870" stop-color="#ff0033"/><stop offset=".7355" stop-color="#ff0021"/></linearGradient><linearGradient id="r55" gradientUnits="userSpaceOnUse" x1="0" x2="2000" y1="0" y2="0"><stop offset=".4870" stop-color="#00fcff"/><stop offset=".5420" stop-color="#00b9ff"/><stop offset=".5605" stop-color="#739fff"/><stop offset=".5815" stop-color="#ff7efd"/><stop offset=".5900" stop-color="#ff5bcd"/><stop offset=".6005" stop-color="#ff3da4"/><stop offset=".6135" stop-color="#ff2582"/><stop offset=".6290" stop-color="#ff1167"/><stop offset=".6495" stop-color="#ff004f"/><stop offset=".6860" stop-color="#ff0035"/><stop offset=".7345" stop-color="#ff0022"/></linearGradient><linearGradient id="r56" gradientUnits="userSpaceOnUse" x1="0" x2="2000" y1="0" y2="0"><stop offset=".4870" stop-color="#00f5ff"/><stop offset=".5420" stop-color="#00b3ff"/><stop offset=".5600" stop-color="#6c9bff"/><stop offset=".5825" stop-color="#ff78fd"/><stop offset=".5910" stop-color="#ff56cd"/><stop offset=".6015" stop-color="#ff3aa5"/><stop offset=".6145" stop-color="#ff2283"/><stop offset=".6300" stop-color="#ff0f68"/><stop offset=".6480" stop-color="#ff0053"/><stop offset=".6720" stop-color="#ff003f"/><stop offset=".7335" stop-color="#ff0024"/></linearGradient><linearGradient id="r57" gradientUnits="userSpaceOnUse" x1="0" x2="2000" y1="0" y2="0"><stop offset=".4875" stop-color="#00efff"/><stop offset=".5425" stop-color="#01adff"/><stop offset=".5620" stop-color="#7593ff"/><stop offset=".5835" stop-color="#ff72fd"/><stop offset=".5920" stop-color="#ff52ce"/><stop offset=".6025" stop-color="#ff37a6"/><stop offset=".6155" stop-color="#ff2085"/><stop offset=".6310" stop-color="#ff0d6a"/><stop offset=".6475" stop-color="#ff0056"/><stop offset=".6720" stop-color="#ff0041"/><stop offset=".7325" stop-color="#ff0025"/></linearGradient><linearGradient id="r58" gradientUnits="userSpaceOnUse" x1="0" x2="2000" y1="0" y2="0"><stop offset=".4880" stop-color="#00e8ff"/><stop offset=".5425" stop-color="#00a8ff"/><stop offset=".5620" stop-color="#728eff"/><stop offset=".5845" stop-color="#ff6cfe"/><stop offset=".5930" stop-color="#ff4ecf"/><stop offset=".6035" stop-color="#ff34a8"/><stop offset=".6160" stop-color="#ff1e87"/><stop offset=".6315" stop-color="#ff0c6c"/><stop offset=".6465" stop-color="#ff0059"/><stop offset=".6720" stop-color="#ff0043"/><stop offset=".7315" stop-color="#ff0027"/></linearGradient><linearGradient id="r59" gradientUnits="userSpaceOnUse" x1="0" x2="2000" y1="0" y2="0"><stop offset=".4885" stop-color="#00e2ff"/><stop offset=".5425" stop-color="#00a3ff"/><stop offset=".5620" stop-color="#6e89ff"/><stop offset=".5855" stop-color="#ff67fe"/><stop offset=".5940" stop-color="#ff4ad0"/><stop offset=".6045" stop-color="#ff31a9"/><stop offset=".6170" stop-color="#ff1c89"/><stop offset=".6325" stop-color="#ff0a6d"/><stop offset=".6455" stop-color="#ff005d"/><stop offset=".6725" stop-color="#ff0045"/><stop offset=".7305" stop-color="#ff0029"/></linearGradient><linearGradient id="r60" gradientUnits="userSpaceOnUse" x1="0" x2="2000" y1="0" y2="0"><stop offset=".4890" stop-color="#00dcff"/><stop offset=".5430" stop-color="#019eff"/><stop offset=".5640" stop-color="#7782ff"/><stop offset=".5865" stop-color="#ff62fe"/><stop offset=".5950" stop-color="#ff46d1"/><stop offset=".6055" stop-color="#ff2eaa"/><stop offset=".6180" stop-color="#ff1a8a"/><stop offset=".6330" stop-color="#ff096f"/><stop offset=".6445" stop-color="#ff0060"/><stop offset=".6725" stop-color="#ff0047"/><stop offset=".7295" stop-color="#ff002a"/></linearGradient><linearGradient id="r61" gradientUnits="userSpaceOnUse" x1="0" x2="2000" y1="0" y2="0"><stop offset=".4890" stop-color="#00d7ff"/><stop offset=".5430" stop-color="#009aff"/><stop offset=".5640" stop-color="#747eff"/><stop offset=".5875" stop-color="#ff5cfe"/><stop offset=".5960" stop-color="#ff42d1"/><stop offset=".6065" stop-color="#ff2bab"/><stop offset=".6190" stop-color="#ff188b"/><stop offset=".6340" stop-color="#ff0871"/><stop offset=".6435" stop-color="#ff0064"/><stop offset=".6730" stop-color="#ff0048"/><stop offset=".7285" stop-color="#ff002c"/></linearGradient><linearGradient id="r62" gradientUnits="userSpaceOnUse" x1="0" x2="2000" y1="0" y2="0"><stop offset=".4895" stop-color="#00d2ff"/><stop offset=".5430" stop-color="#0095ff"/><stop offset=".5635" stop-color="#6e7bff"/><stop offset=".5885" stop-color="#ff58fe"/><stop offset=".5970" stop-color="#ff3ed2"/><stop offset=".6075" stop-color="#ff28ac"/><stop offset=".6200" stop-color="#ff158d"/><stop offset=".6345" stop-color="#ff0673"/><stop offset=".6425" stop-color="#ff0068"/><stop offset=".6730" stop-color="#ff004a"/><stop offset=".7280" stop-color="#ff002d"/></linearGradient><linearGradient id="r63" gradientUnits="userSpaceOnUse" x1="0" x2="2000" y1="0" y2="0"><stop offset=".4900" stop-color="#00ccff"/><stop offset=".5435" stop-color="#0190ff"/><stop offset=".5655" stop-color="#7674ff"/><stop offset=".5895" stop-color="#ff53fe"/><stop offset=".5980" stop-color="#ff3ad3"/><stop offset=".6085" stop-color="#ff25ad"/><stop offset=".6210" stop-color="#ff138e"/><stop offset=".6355" stop-color="#ff0574"/><stop offset=".6415" stop-color="#ff006b"/><stop offset=".6735" stop-color="#ff004c"/><stop offset=".7270" stop-color="#ff002f"/></linearGradient><linearGradient id="r64" gradientUnits="userSpaceOnUse" x1="0" x2="2000" y1="0" y2="0"><stop offset=".4905" stop-color="#00c7ff"/><stop offset=".5435" stop-color="#008cff"/><stop offset=".5660" stop-color="#7570ff"/><stop offset=".5905" stop-color="#ff4efe"/><stop offset=".5990" stop-color="#ff37d3"/><stop offset=".6095" stop-color="#ff22ae"/><stop offset=".6215" stop-color="#ff1290"/><stop offset=".6360" stop-color="#ff0476"/><stop offset=".6530" stop-color="#ff0060"/><stop offset=".6735" stop-color="#ff004e"/><stop offset=".7260" stop-color="#ff0031"/></linearGradient><linearGradient id="r65" gradientUnits="userSpaceOnUse" x1="0" x2="2000" y1="0" y2="0"><stop offset=".4910" stop-color="#00c2ff"/><stop offset=".5435" stop-color="#0088ff"/><stop offset=".5655" stop-color="#706dff"/><stop offset=".5915" stop-color="#ff4afe"/><stop offset=".6000" stop-color="#ff34d4"/><stop offset=".6105" stop-color="#ff20af"/><stop offset=".6225" stop-color="#ff1091"/><stop offset=".6370" stop-color="#ff0277"/><stop offset=".6540" stop-color="#ff0061"/><stop offset=".6740" stop-color="#ff004f"/><stop offset=".7250" stop-color="#ff0033"/></linearGradient><linearGradient id="r66" gradientUnits="userSpaceOnUse" x1="0" x2="2000" y1="0" y2="0"><stop offset=".4915" stop-color="#00bdff"/><stop offset=".5440" stop-color="#0184ff"/><stop offset=".5675" stop-color="#7767ff"/><stop offset=".5925" stop-color="#ff46fe"/><stop offset=".6010" stop-color="#ff30d5"/><stop offset=".6115" stop-color="#ff1db0"/><stop offset=".6235" stop-color="#ff0e92"/><stop offset=".6375" stop-color="#ff0179"/><stop offset=".6540" stop-color="#ff0064"/><stop offset=".6735" stop-color="#ff0051"/><stop offset=".7240" stop-color="#ff0034"/></linearGradient><linearGradient id="r67" gradientUnits="userSpaceOnUse" x1="0" x2="2000" y1="0" y2="0"><stop offset=".4915" stop-color="#00b9ff"/><stop offset=".5440" stop-color="#0080ff"/><stop offset=".5680" stop-color="#7763ff"/><stop offset=".5935" stop-color="#ff41fe"/><stop offset=".6020" stop-color="#ff2dd5"/><stop offset=".6120" stop-color="#ff1cb3"/><stop offset=".6240" stop-color="#ff0c95"/><stop offset=".6380" stop-color="#ff007b"/><stop offset=".6545" stop-color="#ff0065"/><stop offset=".6735" stop-color="#ff0053"/><stop offset=".7230" stop-color="#ff0036"/></linearGradient><linearGradient id="r68" gradientUnits="userSpaceOnUse" x1="0" x2="2000" y1="0" y2="0"><stop offset=".4920" stop-color="#00b4ff"/><stop offset=".5440" stop-color="#007dff"/><stop offset=".5675" stop-color="#7161ff"/><stop offset=".5945" stop-color="#ff3dfe"/><stop offset=".6030" stop-color="#ff2ad6"/><stop offset=".6135" stop-color="#ff18b2"/><stop offset=".6255" stop-color="#ff0a95"/><stop offset=".6390" stop-color="#ff007c"/><stop offset=".6550" stop-color="#ff0067"/><stop offset=".6740" stop-color="#ff0055"/><stop offset=".7220" stop-color="#ff0038"/></linearGradient><linearGradient id="r69" gradientUnits="userSpaceOnUse" x1="0" x2="2000" y1="0" y2="0"><stop offset=".4925" stop-color="#00b0ff"/><stop offset=".5445" stop-color="#0179ff"/><stop offset=".5690" stop-color="#765cff"/><stop offset=".5955" stop-color="#ff3afe"/><stop offset=".6040" stop-color="#ff27d6"/><stop offset=".6140" stop-color="#ff17b5"/><stop offset=".6260" stop-color="#ff0997"/><stop offset=".6395" stop-color="#ff007e"/><stop offset=".6555" stop-color="#ff0069"/><stop offset=".6740" stop-color="#ff0057"/><stop offset=".7210" stop-color="#ff003a"/></linearGradient><linearGradient id="r70" gradientUnits="userSpaceOnUse" x1="0" x2="2000" y1="0" y2="0"><stop offset=".4930" stop-color="#00abff"/><stop offset=".5445" stop-color="#0076ff"/><stop offset=".5695" stop-color="#7658ff"/><stop offset=".5965" stop-color="#ff36fe"/><stop offset=".6050" stop-color="#ff24d7"/><stop offset=".6150" stop-color="#ff14b5"/><stop offset=".6345" stop-color="#ff0089"/><stop offset=".6400" stop-color="#ff0080"/><stop offset=".6740" stop-color="#ff0059"/><stop offset=".7200" stop-color="#ff003c"/></linearGradient><linearGradient id="r71" gradientUnits="userSpaceOnUse" x1="0" x2="2000" y1="0" y2="0"><stop offset=".4935" stop-color="#00a7ff"/><stop offset=".5445" stop-color="#0073ff"/><stop offset=".5695" stop-color="#7356ff"/><stop offset=".5975" stop-color="#ff32fe"/><stop offset=".6060" stop-color="#ff21d8"/><stop offset=".6160" stop-color="#ff12b6"/><stop offset=".6335" stop-color="#ff008e"/><stop offset=".6405" stop-color="#ff0082"/><stop offset=".6740" stop-color="#ff005b"/><stop offset=".7190" stop-color="#ff003d"/></linearGradient><linearGradient id="r72" gradientUnits="userSpaceOnUse" x1="0" x2="2000" y1="0" y2="0"><stop offset=".4940" stop-color="#00a3ff"/><stop offset=".5450" stop-color="#016fff"/><stop offset=".5710" stop-color="#7851ff"/><stop offset=".5985" stop-color="#ff2ffe"/><stop offset=".6070" stop-color="#ff1ed8"/><stop offset=".6165" stop-color="#ff11b9"/><stop offset=".6325" stop-color="#ff0093"/><stop offset=".6410" stop-color="#ff0084"/><stop offset=".6740" stop-color="#ff005d"/><stop offset=".7180" stop-color="#ff003f"/></linearGradient><linearGradient id="r73" gradientUnits="userSpaceOnUse" x1="0" x2="2000" y1="0" y2="0"><stop offset=".4945" stop-color="#009fff"/><stop offset=".5450" stop-color="#006cff"/><stop offset=".5715" stop-color="#774eff"/><stop offset=".5995" stop-color="#ff2bfe"/><stop offset=".6080" stop-color="#ff1cd9"/><stop offset=".6175" stop-color="#ff0eb9"/><stop offset=".6315" stop-color="#ff0098"/><stop offset=".6420" stop-color="#ff0085"/><stop offset=".6740" stop-color="#ff005e"/><stop offset=".7170" stop-color="#ff0041"/></linearGradient><linearGradient id="r74" gradientUnits="userSpaceOnUse" x1="0" x2="2000" y1="0" y2="0"><stop offset=".4950" stop-color="#009bff"/><stop offset=".5450" stop-color="#0069ff"/><stop offset=".5710" stop-color="#724cff"/><stop offset=".6005" stop-color="#ff28fe"/><stop offset=".6090" stop-color="#ff19d9"/><stop offset=".6185" stop-color="#ff0cba"/><stop offset=".6305" stop-color="#ff009d"/><stop offset=".6425" stop-color="#ff0087"/><stop offset=".6740" stop-color="#ff0060"/><stop offset=".7160" stop-color="#ff0043"/></linearGradient><linearGradient id="r75" gradientUnits="userSpaceOnUse" x1="0" x2="2000" y1="0" y2="0"><stop offset=".4950" stop-color="#0098ff"/><stop offset=".5455" stop-color="#0166ff"/><stop offset=".5725" stop-color="#7748ff"/><stop offset=".6015" stop-color="#ff25fe"/><stop offset=".6100" stop-color="#ff16da"/><stop offset=".6195" stop-color="#ff0abb"/><stop offset=".6295" stop-color="#ff00a2"/><stop offset=".6430" stop-color="#ff0089"/><stop offset=".6740" stop-color="#ff0062"/><stop offset=".7150" stop-color="#ff0045"/></linearGradient><linearGradient id="r76" gradientUnits="userSpaceOnUse" x1="0" x2="2000" y1="0" y2="0"><stop offset=".4955" stop-color="#0094ff"/><stop offset=".5455" stop-color="#0063ff"/><stop offset=".5730" stop-color="#7645ff"/><stop offset=".6025" stop-color="#ff22fe"/><stop offset=".6105" stop-color="#ff15dc"/><stop offset=".6200" stop-color="#ff09bd"/><stop offset=".6290" stop-color="#ff00a6"/><stop offset=".6435" stop-color="#ff008a"/><stop offset=".6740" stop-color="#ff0064"/><stop offset=".7140" stop-color="#ff0047"/></linearGradient><linearGradient id="r77" gradientUnits="userSpaceOnUse" x1="0" x2="2000" y1="0" y2="0"><stop offset=".4960" stop-color="#0091ff"/><stop offset=".5455" stop-color="#0061ff"/><stop offset=".5730" stop-color="#7443ff"/><stop offset=".6035" stop-color="#ff1ffe"/><stop offset=".6115" stop-color="#ff12dc"/><stop offset=".6210" stop-color="#ff07be"/><stop offset=".6280" stop-color="#ff00ac"/><stop offset=".6440" stop-color="#ff008c"/><stop offset=".6740" stop-color="#ff0066"/><stop offset=".7135" stop-color="#ff0049"/></linearGradient><linearGradient id="r78" gradientUnits="userSpaceOnUse" x1="0" x2="2000" y1="0" y2="0"><stop offset=".4965" stop-color="#008dff"/><stop offset=".5460" stop-color="#015dff"/><stop offset=".5745" stop-color="#783fff"/><stop offset=".6045" stop-color="#ff1cfe"/><stop offset=".6125" stop-color="#ff10dd"/><stop offset=".6220" stop-color="#ff05bf"/><stop offset=".6270" stop-color="#ff00b1"/><stop offset=".6445" stop-color="#ff008e"/><stop offset=".6740" stop-color="#ff0068"/><stop offset=".7125" stop-color="#ff004b"/></linearGradient><linearGradient id="r79" gradientUnits="userSpaceOnUse" x1="0" x2="2000" y1="0" y2="0"><stop offset=".4970" stop-color="#008aff"/><stop offset=".5460" stop-color="#005bff"/><stop offset=".5750" stop-color="#783cff"/><stop offset=".6055" stop-color="#ff19fe"/><stop offset=".6135" stop-color="#ff0ddd"/><stop offset=".6230" stop-color="#ff03bf"/><stop offset=".6450" stop-color="#ff0090"/><stop offset=".6740" stop-color="#ff006a"/><stop offset=".7115" stop-color="#ff004d"/></linearGradient><linearGradient id="r80" gradientUnits="userSpaceOnUse" x1="0" x2="2000" y1="0" y2="0"><stop offset=".4975" stop-color="#0086ff"/><stop offset=".5460" stop-color="#0059ff"/><stop offset=".5750" stop-color="#753aff"/><stop offset=".6065" stop-color="#ff16fe"/><stop offset=".6145" stop-color="#ff0bde"/><stop offset=".6235" stop-color="#ff01c1"/><stop offset=".6455" stop-color="#ff0092"/><stop offset=".6740" stop-color="#ff006c"/><stop offset=".7105" stop-color="#ff004f"/></linearGradient><linearGradient id="r81" gradientUnits="userSpaceOnUse" x1="0" x2="2000" y1="0" y2="0"><stop offset=".4980" stop-color="#0083ff"/><stop offset=".5465" stop-color="#0156ff"/><stop offset=".5760" stop-color="#7737ff"/><stop offset=".6075" stop-color="#ff14fe"/><stop offset=".6155" stop-color="#ff09de"/><stop offset=".6245" stop-color="#ff00c2"/><stop offset=".6460" stop-color="#ff0093"/><stop offset=".6740" stop-color="#ff006e"/><stop offset=".7095" stop-color="#ff0051"/></linearGradient><linearGradient id="r82" gradientUnits="userSpaceOnUse" x1="0" x2="2000" y1="0" y2="0"><stop offset=".4985" stop-color="#0080ff"/><stop offset=".5465" stop-color="#0054ff"/><stop offset=".5765" stop-color="#7735ff"/><stop offset=".6085" stop-color="#ff11fe"/><stop offset=".6165" stop-color="#ff07de"/><stop offset=".6250" stop-color="#ff00c4"/><stop offset=".6465" stop-color="#ff0095"/><stop offset=".6740" stop-color="#ff0070"/><stop offset=".7085" stop-color="#ff0054"/></linearGradient><linearGradient id="r83" gradientUnits="userSpaceOnUse" x1="0" x2="2000" y1="0" y2="0"><stop offset=".4990" stop-color="#007dff"/><stop offset=".5465" stop-color="#0051ff"/><stop offset=".5770" stop-color="#7632ff"/><stop offset=".6095" stop-color="#ff0efe"/><stop offset=".6215" stop-color="#ff00d2"/><stop offset=".6260" stop-color="#ff00c5"/><stop offset=".6470" stop-color="#ff0097"/><stop offset=".6735" stop-color="#ff0073"/><stop offset=".7075" stop-color="#ff0056"/></linearGradient><linearGradient id="r84" gradientUnits="userSpaceOnUse" x1="0" x2="2000" y1="0" y2="0"><stop offset=".4995" stop-color="#007aff"/><stop offset=".5470" stop-color="#014fff"/><stop offset=".5780" stop-color="#7830ff"/><stop offset=".6105" stop-color="#ff0cfe"/><stop offset=".6210" stop-color="#ff00d7"/><stop offset=".6270" stop-color="#ff00c5"/><stop offset=".6475" stop-color="#ff0099"/><stop offset=".6735" stop-color="#ff0075"/><stop offset=".7065" stop-color="#ff0058"/></linearGradient><linearGradient id="r85" gradientUnits="userSpaceOnUse" x1="0" x2="2000" y1="0" y2="0"><stop offset=".5000" stop-color="#0077ff"/><stop offset=".5470" stop-color="#004dff"/><stop offset=".5785" stop-color="#782dff"/><stop offset=".6115" stop-color="#ff0afe"/><stop offset=".6200" stop-color="#ff00de"/><stop offset=".6275" stop-color="#ff00c7"/><stop offset=".6480" stop-color="#ff009a"/><stop offset=".6735" stop-color="#ff0077"/><stop offset=".7055" stop-color="#ff005a"/></linearGradient><linearGradient id="r86" gradientUnits="userSpaceOnUse" x1="0" x2="2000" y1="0" y2="0"><stop offset=".5005" stop-color="#0074ff"/><stop offset=".5470" stop-color="#004bff"/><stop offset=".5785" stop-color="#762cff"/><stop offset=".6125" stop-color="#ff07fe"/><stop offset=".6190" stop-color="#ff00e5"/><stop offset=".6285" stop-color="#ff00c8"/><stop offset=".6485" stop-color="#ff009c"/><stop offset=".6735" stop-color="#ff0079"/><stop offset=".7045" stop-color="#ff005d"/></linearGradient><linearGradient id="r87" gradientUnits="userSpaceOnUse" x1="0" x2="2000" y1="0" y2="0"><stop offset=".5010" stop-color="#0072ff"/><stop offset=".5475" stop-color="#0148ff"/><stop offset=".5800" stop-color="#7929ff"/><stop offset=".6135" stop-color="#ff05fe"/><stop offset=".6180" stop-color="#ff00ed"/><stop offset=".6295" stop-color="#ff00c8"/><stop offset=".6490" stop-color="#ff009e"/><stop offset=".6735" stop-color="#ff007b"/><stop offset=".7035" stop-color="#ff005f"/></linearGradient><linearGradient id="r88" gradientUnits="userSpaceOnUse" x1="0" x2="2000" y1="0" y2="0"><stop offset=".5015" stop-color="#006fff"/><stop offset=".5475" stop-color="#0046ff"/><stop offset=".5805" stop-color="#7926ff"/><stop offset=".6145" stop-color="#ff03fe"/><stop offset=".6300" stop-color="#ff00ca"/><stop offset=".6495" stop-color="#ff009f"/><stop offset=".6730" stop-color="#ff007d"/><stop offset=".7025" stop-color="#ff0061"/></linearGradient><linearGradient id="r89" gradientUnits="userSpaceOnUse" x1="0" x2="2000" y1="0" y2="0"><stop offset=".5020" stop-color="#006cff"/><stop offset=".5475" stop-color="#0044ff"/><stop offset=".5805" stop-color="#7725ff"/><stop offset=".6155" stop-color="#ff01fe"/><stop offset=".6310" stop-color="#ff00cb"/><stop offset=".6500" stop-color="#ff00a1"/><stop offset=".6730" stop-color="#ff007f"/><stop offset=".7015" stop-color="#ff0064"/></linearGradient><linearGradient id="r90" gradientUnits="userSpaceOnUse" x1="0" x2="2000" y1="0" y2="0"><stop offset=".5025" stop-color="#006aff"/><stop offset=".5480" stop-color="#0142ff"/><stop offset=".5815" stop-color="#7822ff"/><stop offset=".6165" stop-color="#ff00fe"/><stop offset=".6315" stop-color="#ff00cd"/><stop offset=".6500" stop-color="#ff00a4"/><stop offset=".6725" stop-color="#ff0082"/><stop offset=".7005" stop-color="#ff0066"/></linearGradient><linearGradient id="r91" gradientUnits="userSpaceOnUse" x1="0" x2="2000" y1="0" y2="0"><stop offset=".5030" stop-color="#0067ff"/><stop offset=".5480" stop-color="#0040ff"/><stop offset=".5820" stop-color="#7821ff"/><stop offset=".6140" stop-color="#f200ff"/><stop offset=".6175" stop-color="#ff00fe"/><stop offset=".6325" stop-color="#ff00cd"/><stop offset=".6505" stop-color="#ff00a5"/><stop offset=".6725" stop-color="#ff0084"/><stop offset=".6995" stop-color="#ff0069"/></linearGradient><linearGradient id="r92" gradientUnits="userSpaceOnUse" x1="0" x2="2000" y1="0" y2="0"><stop offset=".5035" stop-color="#0065ff"/><stop offset=".5480" stop-color="#003fff"/><stop offset=".5825" stop-color="#781fff"/><stop offset=".6130" stop-color="#ea00ff"/><stop offset=".6185" stop-color="#ff00fe"/><stop offset=".6330" stop-color="#ff00cf"/><stop offset=".6510" stop-color="#ff00a7"/><stop offset=".6725" stop-color="#ff0086"/><stop offset=".6985" stop-color="#ff006b"/></linearGradient><linearGradient id="r93" gradientUnits="userSpaceOnUse" x1="0" x2="2000" y1="0" y2="0"><stop offset=".5040" stop-color="#0062ff"/><stop offset=".5485" stop-color="#013dff"/><stop offset=".5810" stop-color="#701fff"/><stop offset=".6120" stop-color="#e300ff"/><stop offset=".6195" stop-color="#ff00fe"/><stop offset=".6340" stop-color="#ff00cf"/><stop offset=".6515" stop-color="#ff00a9"/><stop offset=".6725" stop-color="#ff0088"/><stop offset=".6980" stop-color="#ff006d"/></linearGradient><linearGradient id="r94" gradientUnits="userSpaceOnUse" x1="0" x2="2000" y1="0" y2="0"><stop offset=".5045" stop-color="#0060ff"/><stop offset=".5485" stop-color="#003bff"/><stop offset=".5805" stop-color="#6d1eff"/><stop offset=".6110" stop-color="#dc00ff"/><stop offset=".6205" stop-color="#ff00fe"/><stop offset=".6350" stop-color="#ff00d0"/><stop offset=".6520" stop-color="#ff00aa"/><stop offset=".6725" stop-color="#ff008a"/><stop offset=".6970" stop-color="#ff0070"/></linearGradient><linearGradient id="r95" gradientUnits="userSpaceOnUse" x1="0" x2="2000" y1="0" y2="0"><stop offset=".5055" stop-color="#005dff"/><stop offset=".5485" stop-color="#0039ff"/><stop offset=".5795" stop-color="#671eff"/><stop offset=".6100" stop-color="#d500ff"/><stop offset=".6215" stop-color="#ff00fe"/><stop offset=".6355" stop-color="#ff00d2"/><stop offset=".6525" stop-color="#ff00ac"/><stop offset=".6725" stop-color="#ff008c"/><stop offset=".6960" stop-color="#ff0073"/></linearGradient><linearGradient id="r96" gradientUnits="userSpaceOnUse" x1="0" x2="2000" y1="0" y2="0"><stop offset=".5060" stop-color="#005bff"/><stop offset=".5490" stop-color="#0137ff"/><stop offset=".5795" stop-color="#661cff"/><stop offset=".6090" stop-color="#ce00ff"/><stop offset=".6225" stop-color="#ff00fe"/><stop offset=".6360" stop-color="#ff00d3"/><stop offset=".6525" stop-color="#ff00ae"/><stop offset=".6720" stop-color="#ff008f"/><stop offset=".6950" stop-color="#ff0075"/></linearGradient><linearGradient id="r97" gradientUnits="userSpaceOnUse" x1="0" x2="2000" y1="0" y2="0"><stop offset=".5065" stop-color="#0058ff"/><stop offset=".5490" stop-color="#0136ff"/><stop offset=".5790" stop-color="#621bff"/><stop offset=".6080" stop-color="#c700ff"/><stop offset=".6235" stop-color="#ff00fe"/><stop offset=".6370" stop-color="#ff00d4"/><stop offset=".6530" stop-color="#ff00b0"/><stop offset=".6720" stop-color="#ff0091"/><stop offset=".6940" stop-color="#ff0078"/></linearGradient><linearGradient id="r98" gradientUnits="userSpaceOnUse" x1="0" x2="2000" y1="0" y2="0"><stop offset=".5070" stop-color="#0056ff"/><stop offset=".5490" stop-color="#0034ff"/><stop offset=".5785" stop-color="#5f1bff"/><stop offset=".6070" stop-color="#c100ff"/><stop offset=".6245" stop-color="#ff00fe"/><stop offset=".6380" stop-color="#ff00d4"/><stop offset=".6535" stop-color="#ff00b2"/><stop offset=".6715" stop-color="#ff0094"/><stop offset=".6930" stop-color="#ff007b"/></linearGradient><linearGradient id="r99" gradientUnits="userSpaceOnUse" x1="0" x2="2000" y1="0" y2="0"><stop offset=".5075" stop-color="#0054ff"/><stop offset=".5495" stop-color="#0133ff"/><stop offset=".6060" stop-color="#ba00ff"/><stop offset=".6255" stop-color="#ff00fe"/><stop offset=".6385" stop-color="#ff00d6"/><stop offset=".6535" stop-color="#ff00b4"/><stop offset=".6710" stop-color="#ff0097"/><stop offset=".6920" stop-color="#ff007e"/></linearGradient><linearGradient id="r100" gradientUnits="userSpaceOnUse" x1="0" x2="2000" y1="0" y2="0"><stop offset=".5080" stop-color="#0052ff"/><stop offset=".5495" stop-color="#0131ff"/><stop offset=".6050" stop-color="#b400ff"/><stop offset=".6265" stop-color="#ff00fe"/><stop offset=".6390" stop-color="#ff00d8"/><stop offset=".6540" stop-color="#ff00b6"/><stop offset=".6710" stop-color="#ff0099"/><stop offset=".6910" stop-color="#ff0080"/></linearGradient><linearGradient id="r101" gradientUnits="userSpaceOnUse" x1="0" x2="2000" y1="0" y2="0"><stop offset=".5085" stop-color="#0050ff"/><stop offset=".5495" stop-color="#0030ff"/><stop offset=".6045" stop-color="#b000ff"/><stop offset=".6275" stop-color="#ff00fe"/><stop offset=".6400" stop-color="#ff00d8"/><stop offset=".6540" stop-color="#ff00b8"/><stop offset=".6705" stop-color="#ff009c"/><stop offset=".6900" stop-color="#ff0083"/></linearGradient><linearGradient id="r102" gradientUnits="userSpaceOnUse" x1="0" x2="2000" y1="0" y2="0"><stop offset=".5090" stop-color="#004eff"/><stop offset=".5495" stop-color="#002eff"/><stop offset=".6035" stop-color="#aa00ff"/><stop offset=".6285" stop-color="#ff00fe"/><stop offset=".6405" stop-color="#ff00da"/><stop offset=".6545" stop-color="#ff00ba"/><stop offset=".6705" stop-color="#ff009e"/><stop offset=".6890" stop-color="#ff0086"/></linearGradient><linearGradient id="r103" gradientUnits="userSpaceOnUse" x1="0" x2="2000" y1="0" y2="0"><stop offset=".5100" stop-color="#004cff"/><stop offset=".5500" stop-color="#012dff"/><stop offset=".6025" stop-color="#a400ff"/><stop offset=".6295" stop-color="#ff00fe"/><stop offset=".6415" stop-color="#ff00da"/><stop offset=".6550" stop-color="#ff00bb"/><stop offset=".6705" stop-color="#ff00a0"/><stop offset=".6880" stop-color="#ff0089"/></linearGradient><linearGradient id="r104" gradientUnits="userSpaceOnUse" x1="0" x2="2000" y1="0" y2="0"><stop offset=".5105" stop-color="#004aff"/><stop offset=".5500" stop-color="#002bff"/><stop offset=".6015" stop-color="#9f00ff"/><stop offset=".6305" stop-color="#ff00fe"/><stop offset=".6420" stop-color="#ff00dc"/><stop offset=".6550" stop-color="#ff00be"/><stop offset=".6700" stop-color="#ff00a3"/><stop offset=".6870" stop-color="#ff008c"/></linearGradient><linearGradient id="r105" gradientUnits="userSpaceOnUse" x1="0" x2="2000" y1="0" y2="0"><stop offset=".5110" stop-color="#0048ff"/><stop offset=".5500" stop-color="#002aff"/><stop offset=".6005" stop-color="#9900ff"/><stop offset=".6315" stop-color="#ff00fe"/><stop offset=".6425" stop-color="#ff00dd"/><stop offset=".6555" stop-color="#ff00bf"/><stop offset=".6700" stop-color="#ff00a5"/><stop offset=".6860" stop-color="#ff008f"/></linearGradient><linearGradient id="r106" gradientUnits="userSpaceOnUse" x1="0" x2="2000" y1="0" y2="0"><stop offset=".5115" stop-color="#0046ff"/><stop offset=".5505" stop-color="#0128ff"/><stop offset=".5995" stop-color="#9400ff"/><stop offset=".6325" stop-color="#ff00fe"/><stop offset=".6435" stop-color="#ff00de"/><stop offset=".6555" stop-color="#ff00c2"/><stop offset=".6850" stop-color="#ff0093"/></linearGradient><linearGradient id="r107" gradientUnits="userSpaceOnUse" x1="0" x2="2000" y1="0" y2="0"><stop offset=".5120" stop-color="#0044ff"/><stop offset=".5505" stop-color="#0027ff"/><stop offset=".5985" stop-color="#8f00ff"/><stop offset=".6335" stop-color="#ff00fe"/><stop offset=".6440" stop-color="#ff00df"/><stop offset=".6560" stop-color="#ff00c3"/><stop offset=".6840" stop-color="#ff0096"/></linearGradient><linearGradient id="r108" gradientUnits="userSpaceOnUse" x1="0" x2="2000" y1="0" y2="0"><stop offset=".5125" stop-color="#0042ff"/><stop offset=".5505" stop-color="#0026ff"/><stop offset=".5975" stop-color="#8a00ff"/><stop offset=".6345" stop-color="#ff00fe"/><stop offset=".6445" stop-color="#ff00e1"/><stop offset=".6560" stop-color="#ff00c6"/><stop offset=".6835" stop-color="#ff0098"/></linearGradient><linearGradient id="r109" gradientUnits="userSpaceOnUse" x1="0" x2="2000" y1="0" y2="0"><stop offset=".5130" stop-color="#0041ff"/><stop offset=".5510" stop-color="#0124ff"/><stop offset=".5965" stop-color="#8500ff"/><stop offset=".6350" stop-color="#fe00ff"/><stop offset=".6565" stop-color="#ff00c7"/><stop offset=".6825" stop-color="#ff009c"/></linearGradient><linearGradient id="r110" gradientUnits="userSpaceOnUse" x1="0" x2="2000" y1="0" y2="0"><stop offset=".5140" stop-color="#003fff"/><stop offset=".5510" stop-color="#0023ff"/><stop offset=".5955" stop-color="#8000ff"/><stop offset=".6360" stop-color="#fe00ff"/><stop offset=".6570" stop-color="#ff00c9"/><stop offset=".6815" stop-color="#ff009f"/></linearGradient><linearGradient id="r111" gradientUnits="userSpaceOnUse" x1="0" x2="2000" y1="0" y2="0"><stop offset=".5145" stop-color="#003dff"/><stop offset=".5510" stop-color="#0022ff"/><stop offset=".5945" stop-color="#7b00ff"/><stop offset=".6370" stop-color="#fe00ff"/><stop offset=".6570" stop-color="#ff00cb"/><stop offset=".6805" stop-color="#ff00a2"/></linearGradient><linearGradient id="r112" gradientUnits="userSpaceOnUse" x1="0" x2="2000" y1="0" y2="0"><stop offset=".5150" stop-color="#003bff"/><stop offset=".5515" stop-color="#0121ff"/><stop offset=".5935" stop-color="#7600ff"/><stop offset=".6380" stop-color="#fe00ff"/><stop offset=".6575" stop-color="#ff00cd"/><stop offset=".6795" stop-color="#ff00a6"/></linearGradient><linearGradient id="r113" gradientUnits="userSpaceOnUse" x1="0" x2="2000" y1="0" y2="0"><stop offset=".5155" stop-color="#003aff"/><stop offset=".5515" stop-color="#0020ff"/><stop offset=".5925" stop-color="#7200ff"/><stop offset=".6390" stop-color="#fe00ff"/><stop offset=".6575" stop-color="#ff00cf"/><stop offset=".6785" stop-color="#ff00a9"/></linearGradient><linearGradient id="r114" gradientUnits="userSpaceOnUse" x1="0" x2="2000" y1="0" y2="0"><stop offset=".5160" stop-color="#0038ff"/><stop offset=".5515" stop-color="#001fff"/><stop offset=".5915" stop-color="#6e00ff"/><stop offset=".6400" stop-color="#fe00ff"/><stop offset=".6575" stop-color="#ff00d2"/><stop offset=".6775" stop-color="#ff00ad"/></linearGradient><linearGradient id="r115" gradientUnits="userSpaceOnUse" x1="0" x2="2000" y1="0" y2="0"><stop offset=".5170" stop-color="#0036ff"/><stop offset=".5520" stop-color="#011dff"/><stop offset=".5905" stop-color="#6900ff"/><stop offset=".6410" stop-color="#fe00ff"/><stop offset=".6580" stop-color="#ff00d3"/><stop offset=".6765" stop-color="#ff00b1"/></linearGradient><linearGradient id="r116" gradientUnits="userSpaceOnUse" x1="0" x2="2000" y1="0" y2="0"><stop offset=".5175" stop-color="#0034ff"/><stop offset=".5520" stop-color="#001cff"/><stop offset=".5900" stop-color="#6600ff"/><stop offset=".6420" stop-color="#fe00ff"/><stop offset=".6580" stop-color="#ff00d6"/><stop offset=".6755" stop-color="#ff00b5"/></linearGradient><linearGradient id="r117" gradientUnits="userSpaceOnUse" x1="0" x2="2000" y1="0" y2="0"><stop offset=".5180" stop-color="#0033ff"/><stop offset=".5520" stop-color="#001bff"/><stop offset=".5890" stop-color="#6200ff"/><stop offset=".6430" stop-color="#fe00ff"/><stop offset=".6580" stop-color="#ff00d9"/><stop offset=".6745" stop-color="#ff00b8"/></linearGradient><linearGradient id="r118" gradientUnits="userSpaceOnUse" x1="0" x2="2000" y1="0" y2="0"><stop offset=".5185" stop-color="#0031ff"/><stop offset=".5525" stop-color="#011aff"/><stop offset=".5880" stop-color="#5e00ff"/><stop offset=".6440" stop-color="#fe00ff"/><stop offset=".6585" stop-color="#ff00da"/><stop offset=".6735" stop-color="#ff00bc"/></linearGradient><linearGradient id="r119" gradientUnits="userSpaceOnUse" x1="0" x2="2000" y1="0" y2="0"><stop offset=".5190" stop-color="#0030ff"/><stop offset=".5525" stop-color="#0019ff"/><stop offset=".5870" stop-color="#5a00ff"/><stop offset=".6450" stop-color="#fe00ff"/><stop offset=".6585" stop-color="#ff00dd"/><stop offset=".6725" stop-color="#ff00c0"/></linearGradient><linearGradient id="r120" gradientUnits="userSpaceOnUse" x1="0" x2="2000" y1="0" y2="0"><stop offset=".5200" stop-color="#002eff"/><stop offset=".5525" stop-color="#0018ff"/><stop offset=".5860" stop-color="#5600ff"/><stop offset=".6460" stop-color="#fe00ff"/><stop offset=".6590" stop-color="#ff00de"/><stop offset=".6715" stop-color="#ff00c4"/></linearGradient><linearGradient id="r121" gradientUnits="userSpaceOnUse" x1="0" x2="2000" y1="0" y2="0"><stop offset=".5205" stop-color="#002dff"/><stop offset=".5530" stop-color="#0117ff"/><stop offset=".5850" stop-color="#5200ff"/><stop offset=".6470" stop-color="#fe00ff"/><stop offset=".6705" stop-color="#ff00c8"/></linearGradient><linearGradient id="r122" gradientUnits="userSpaceOnUse" x1="0" x2="2000" y1="0" y2="0"><stop offset=".5210" stop-color="#002bff"/><stop offset=".5530" stop-color="#0016ff"/><stop offset=".5840" stop-color="#4f00ff"/><stop offset=".6480" stop-color="#fe00ff"/><stop offset=".6695" stop-color="#ff00cd"/></linearGradient><linearGradient id="r123" gradientUnits="userSpaceOnUse" x1="0" x2="2000" y1="0" y2="0"><stop offset=".5215" stop-color="#002aff"/><stop offset=".5530" stop-color="#0015ff"/><stop offset=".5830" stop-color="#4b00ff"/><stop offset=".6490" stop-color="#fe00ff"/><stop offset=".6690" stop-color="#ff00d0"/></linearGradient><linearGradient id="r124" gradientUnits="userSpaceOnUse" x1="0" x2="2000" y1="0" y2="0"><stop offset=".5225" stop-color="#0028ff"/><stop offset=".5535" stop-color="#0114ff"/><stop offset=".5820" stop-color="#4700ff"/><stop offset=".6500" stop-color="#fe00ff"/><stop offset=".6680" stop-color="#ff00d4"/></linearGradient><linearGradient id="r125" gradientUnits="userSpaceOnUse" x1="0" x2="2000" y1="0" y2="0"><stop offset=".5230" stop-color="#0027ff"/><stop offset=".5535" stop-color="#0013ff"/><stop offset=".5810" stop-color="#4400ff"/><stop offset=".6510" stop-color="#fe00ff"/><stop offset=".6670" stop-color="#ff00d9"/></linearGradient><linearGradient id="r126" gradientUnits="userSpaceOnUse" x1="0" x2="2000" y1="0" y2="0"><stop offset=".5235" stop-color="#0026ff"/><stop offset=".5535" stop-color="#0012ff"/><stop offset=".5800" stop-color="#4000ff"/><stop offset=".6520" stop-color="#fe00ff"/><stop offset=".6660" stop-color="#ff00dd"/></linearGradient><linearGradient id="r127" gradientUnits="userSpaceOnUse" x1="0" x2="2000" y1="0" y2="0"><stop offset=".5240" stop-color="#0024ff"/><stop offset=".5540" stop-color="#0111ff"/><stop offset=".5790" stop-color="#3d00ff"/><stop offset=".6165" stop-color="#9c00ff"/><stop offset=".6530" stop-color="#fe00ff"/><stop offset=".6650" stop-color="#ff00e2"/></linearGradient><linearGradient id="r128" gradientUnits="userSpaceOnUse" x1="0" x2="2000" y1="0" y2="0"><stop offset=".5250" stop-color="#0023ff"/><stop offset=".5540" stop-color="#0010ff"/><stop offset=".5780" stop-color="#3a00ff"/><stop offset=".6165" stop-color="#9a00ff"/><stop offset=".6540" stop-color="#fe00ff"/><stop offset=".6640" stop-color="#ff00e7"/></linearGradient><linearGradient id="r129" gradientUnits="userSpaceOnUse" x1="0" x2="2000" y1="0" y2="0"><stop offset=".5255" stop-color="#0022ff"/><stop offset=".5540" stop-color="#000fff"/><stop offset=".5770" stop-color="#3600ff"/><stop offset=".6165" stop-color="#9800ff"/><stop offset=".6550" stop-color="#fe00ff"/><stop offset=".6630" stop-color="#ff00eb"/></linearGradient><linearGradient id="r130" gradientUnits="userSpaceOnUse" x1="0" x2="2000" y1="0" y2="0"><stop offset=".5260" stop-color="#0020ff"/><stop offset=".5545" stop-color="#010eff"/><stop offset=".5760" stop-color="#3300ff"/><stop offset=".6165" stop-color="#9700ff"/><stop offset=".6560" stop-color="#fe00ff"/><stop offset=".6620" stop-color="#ff00f0"/></linearGradient><linearGradient id="r131" gradientUnits="userSpaceOnUse" x1="0" x2="2000" y1="0" y2="0"><stop offset=".5270" stop-color="#001fff"/><stop offset=".5545" stop-color="#000eff"/><stop offset=".5750" stop-color="#3000ff"/><stop offset=".6165" stop-color="#9500ff"/><stop offset=".6570" stop-color="#fe00ff"/><stop offset=".6610" stop-color="#ff00f5"/></linearGradient><linearGradient id="r132" gradientUnits="userSpaceOnUse" x1="0" x2="2000" y1="0" y2="0"><stop offset=".5275" stop-color="#001eff"/><stop offset=".5545" stop-color="#000dff"/><stop offset=".5745" stop-color="#2e00ff"/><stop offset=".6170" stop-color="#9400ff"/><stop offset=".6580" stop-color="#fe00ff"/><stop offset=".6600" stop-color="#ff00fb"/></linearGradient><linearGradient id="r133" gradientUnits="userSpaceOnUse" x1="0" x2="2000" y1="0" y2="0"><stop offset=".5280" stop-color="#001dff"/><stop offset=".5550" stop-color="#010cff"/><stop offset=".5735" stop-color="#2b00ff"/><stop offset=".6170" stop-color="#9300ff"/><stop offset=".6590" stop-color="#fe00ff"/></linearGradient><linearGradient id="r134" gradientUnits="userSpaceOnUse" x1="0" x2="2000" y1="0" y2="0"><stop offset=".5290" stop-color="#001bff"/><stop offset=".5550" stop-color="#000bff"/><stop offset=".5725" stop-color="#2800ff"/><stop offset=".6160" stop-color="#8f00ff"/><stop offset=".6580" stop-color="#f900ff"/></linearGradient><linearGradient id="r135" gradientUnits="userSpaceOnUse" x1="0" x2="2000" y1="0" y2="0"><stop offset=".5295" stop-color="#001aff"/><stop offset=".5550" stop-color="#000aff"/><stop offset=".5715" stop-color="#2500ff"/><stop offset=".6150" stop-color="#8b00ff"/><stop offset=".6570" stop-color="#f400ff"/></linearGradient><linearGradient id="r136" gradientUnits="userSpaceOnUse" x1="0" x2="2000" y1="0" y2="0"><stop offset=".5300" stop-color="#0019ff"/><stop offset=".5555" stop-color="#0109ff"/><stop offset=".5705" stop-color="#2200ff"/><stop offset=".6140" stop-color="#8700ff"/><stop offset=".6560" stop-color="#ef00ff"/></linearGradient><linearGradient id="r137" gradientUnits="userSpaceOnUse" x1="0" x2="2000" y1="0" y2="0"><stop offset=".5310" stop-color="#0018ff"/><stop offset=".5555" stop-color="#0009ff"/><stop offset=".5695" stop-color="#1f00ff"/><stop offset=".6130" stop-color="#8300ff"/><stop offset=".6550" stop-color="#ea00ff"/></linearGradient><linearGradient id="r138" gradientUnits="userSpaceOnUse" x1="0" x2="2000" y1="0" y2="0"><stop offset=".5315" stop-color="#0016ff"/><stop offset=".5555" stop-color="#0008ff"/><stop offset=".5685" stop-color="#1c00ff"/><stop offset=".6120" stop-color="#7f00ff"/><stop offset=".6540" stop-color="#e500ff"/></linearGradient><linearGradient id="r139" gradientUnits="userSpaceOnUse" x1="0" x2="2000" y1="0" y2="0"><stop offset=".5320" stop-color="#0015ff"/><stop offset=".5560" stop-color="#0107ff"/><stop offset=".5675" stop-color="#1a00ff"/><stop offset=".6110" stop-color="#7b00ff"/><stop offset=".6535" stop-color="#e100ff"/></linearGradient><linearGradient id="r140" gradientUnits="userSpaceOnUse" x1="0" x2="2000" y1="0" y2="0"><stop offset=".5330" stop-color="#0014ff"/><stop offset=".5560" stop-color="#0006ff"/><stop offset=".5665" stop-color="#1700ff"/><stop offset=".6100" stop-color="#7800ff"/><stop offset=".6525" stop-color="#dd00ff"/></linearGradient><linearGradient id="r141" gradientUnits="userSpaceOnUse" x1="0" x2="2000" y1="0" y2="0"><stop offset=".5335" stop-color="#0013ff"/><stop offset=".5560" stop-color="#0006ff"/><stop offset=".5655" stop-color="#1400ff"/><stop offset=".6090" stop-color="#7400ff"/><stop offset=".6515" stop-color="#d800ff"/></linearGradient><linearGradient id="r142" gradientUnits="userSpaceOnUse" x1="0" x2="2000" y1="0" y2="0"><stop offset=".5340" stop-color="#0012ff"/><stop offset=".5565" stop-color="#0105ff"/><stop offset=".5645" stop-color="#1200ff"/><stop offset=".6080" stop-color="#7100ff"/><stop offset=".6505" stop-color="#d400ff"/></linearGradient><linearGradient id="r143" gradientUnits="userSpaceOnUse" x1="0" x2="2000" y1="0" y2="0"><stop offset=".5350" stop-color="#0011ff"/><stop offset=".5565" stop-color="#0104ff"/><stop offset=".5635" stop-color="#0f00ff"/><stop offset=".6070" stop-color="#6d00ff"/><stop offset=".6495" stop-color="#cf00ff"/></linearGradient><linearGradient id="r144" gradientUnits="userSpaceOnUse" x1="0" x2="2000" y1="0" y2="0"><stop offset=".5355" stop-color="#0010ff"/><stop offset=".5565" stop-color="#0004ff"/><stop offset=".5625" stop-color="#0d00ff"/><stop offset=".6035" stop-color="#6400ff"/><stop offset=".6485" stop-color="#cb00ff"/></linearGradient><linearGradient id="r145" gradientUnits="userSpaceOnUse" x1="0" x2="2000" y1="0" y2="0"><stop offset=".5365" stop-color="#000fff"/><stop offset=".5570" stop-color="#0103ff"/><stop offset=".6030" stop-color="#6200ff"/><stop offset=".6475" stop-color="#c700ff"/></linearGradient><linearGradient id="r146" gradientUnits="userSpaceOnUse" x1="0" x2="2000" y1="0" y2="0"><stop offset=".5370" stop-color="#000eff"/><stop offset=".5570" stop-color="#0102ff"/><stop offset=".6025" stop-color="#6000ff"/><stop offset=".6465" stop-color="#c200ff"/></linearGradient><linearGradient id="r147" gradientUnits="userSpaceOnUse" x1="0" x2="2000" y1="0" y2="0"><stop offset=".5380" stop-color="#000cff"/><stop offset=".5570" stop-color="#0001ff"/><stop offset=".6455" stop-color="#be00ff"/></linearGradient><linearGradient id="r148" gradientUnits="userSpaceOnUse" x1="0" x2="2000" y1="0" y2="0"><stop offset=".5385" stop-color="#000bff"/><stop offset=".5570" stop-color="#0001ff"/><stop offset=".6445" stop-color="#ba00ff"/></linearGradient><linearGradient id="r149" gradientUnits="userSpaceOnUse" x1="0" x2="2000" y1="0" y2="0"><stop offset=".5395" stop-color="#000aff"/><stop offset=".5575" stop-color="#0100ff"/><stop offset=".6435" stop-color="#b600ff"/></linearGradient><linearGradient id="r150" gradientUnits="userSpaceOnUse" x1="0" x2="2000" y1="0" y2="0"><stop offset=".5400" stop-color="#0009ff"/><stop offset=".5575" stop-color="#0000ff"/><stop offset=".6425" stop-color="#b200ff"/></linearGradient><linearGradient id="r151" gradientUnits="userSpaceOnUse" x1="0" x2="2000" y1="0" y2="0"><stop offset=".5410" stop-color="#0008ff"/><stop offset=".5575" stop-color="#0000ff"/><stop offset=".6415" stop-color="#ae00ff"/></linearGradient><linearGradient id="r152" gradientUnits="userSpaceOnUse" x1="0" x2="2000" y1="0" y2="0"><stop offset=".5415" stop-color="#0007ff"/><stop offset=".5580" stop-color="#0100ff"/><stop offset=".6405" stop-color="#aa00ff"/></linearGradient><linearGradient id="r153" gradientUnits="userSpaceOnUse" x1="0" x2="2000" y1="0" y2="0"><stop offset=".5425" stop-color="#0006ff"/><stop offset=".5580" stop-color="#0000ff"/><stop offset=".6395" stop-color="#a700ff"/></linearGradient><linearGradient id="r154" gradientUnits="userSpaceOnUse" x1="0" x2="2000" y1="0" y2="0"><stop offset=".5430" stop-color="#0005ff"/><stop offset=".5580" stop-color="#0000ff"/><stop offset=".6390" stop-color="#a400ff"/></linearGradient><linearGradient id="r155" gradientUnits="userSpaceOnUse" x1="0" x2="2000" y1="0" y2="0"><stop offset=".5440" stop-color="#0004ff"/><stop offset=".5585" stop-color="#0100ff"/><stop offset=".6380" stop-color="#a000ff"/></linearGradient><linearGradient id="r156" gradientUnits="userSpaceOnUse" x1="0" x2="2000" y1="0" y2="0"><stop offset=".5450" stop-color="#0003ff"/><stop offset=".5585" stop-color="#0000ff"/><stop offset=".6370" stop-color="#9d00ff"/></linearGradient><linearGradient id="r157" gradientUnits="userSpaceOnUse" x1="0" x2="2000" y1="0" y2="0"><stop offset=".5455" stop-color="#0002ff"/><stop offset=".5585" stop-color="#0000ff"/><stop offset=".6360" stop-color="#9900ff"/></linearGradient><linearGradient id="r158" gradientUnits="userSpaceOnUse" x1="0" x2="2000" y1="0" y2="0"><stop offset=".5465" stop-color="#0001ff"/><stop offset=".5590" stop-color="#0100ff"/><stop offset=".6350" stop-color="#9600ff"/></linearGradient><linearGradient id="r159" gradientUnits="userSpaceOnUse" x1="0" x2="2000" y1="0" y2="0"><stop offset=".5470" stop-color="#0000ff"/><stop offset=".5590" stop-color="#0000ff"/><stop offset=".6340" stop-color="#9200ff"/></linearGradient><linearGradient id="r160" gradientUnits="userSpaceOnUse" x1="0" x2="2000" y1="0" y2="0"><stop offset=".5480" stop-color="#0000ff"/><stop offset=".5590" stop-color="#0000ff"/><stop offset=".6330" stop-color="#8f00ff"/></linearGradient><linearGradient id="r161" gradientUnits="userSpaceOnUse" x1="0" x2="2000" y1="0" y2="0"><stop offset=".5490" stop-color="#0000ff"/><stop offset=".5595" stop-color="#0100ff"/><stop offset=".6320" stop-color="#8c00ff"/></linearGradient><linearGradient id="r162" gradientUnits="userSpaceOnUse" x1="0" x2="2000" y1="0" y2="0"><stop offset=".5495" stop-color="#0000ff"/><stop offset=".5595" stop-color="#0000ff"/><stop offset=".6310" stop-color="#8800ff"/></linearGradient><linearGradient id="r163" gradientUnits="userSpaceOnUse" x1="0" x2="2000" y1="0" y2="0"><stop offset=".5505" stop-color="#0000ff"/><stop offset=".5595" stop-color="#0000ff"/><stop offset=".6300" stop-color="#8500ff"/></linearGradient><linearGradient id="r164" gradientUnits="userSpaceOnUse" x1="0" x2="2000" y1="0" y2="0"><stop offset=".5515" stop-color="#0000ff"/><stop offset=".5600" stop-color="#0100ff"/><stop offset=".6290" stop-color="#8200ff"/></linearGradient><linearGradient id="r165" gradientUnits="userSpaceOnUse" x1="0" x2="2000" y1="0" y2="0"><stop offset=".5525" stop-color="#0000ff"/><stop offset=".5600" stop-color="#0000ff"/><stop offset=".6280" stop-color="#7f00ff"/></linearGradient><linearGradient id="r166" gradientUnits="userSpaceOnUse" x1="0" x2="2000" y1="0" y2="0"><stop offset=".5530" stop-color="#0000ff"/><stop offset=".5600" stop-color="#0000ff"/><stop offset=".6270" stop-color="#7c00ff"/></linearGradient><linearGradient id="r167" gradientUnits="userSpaceOnUse" x1="0" x2="2000" y1="0" y2="0"><stop offset=".5540" stop-color="#0000ff"/><stop offset=".5605" stop-color="#0100ff"/><stop offset=".6260" stop-color="#7900ff"/></linearGradient><linearGradient id="r168" gradientUnits="userSpaceOnUse" x1="0" x2="2000" y1="0" y2="0"><stop offset=".5550" stop-color="#0000ff"/><stop offset=".5605" stop-color="#0000ff"/><stop offset=".6250" stop-color="#7600ff"/></linearGradient><linearGradient id="r169" gradientUnits="userSpaceOnUse" x1="0" x2="2000" y1="0" y2="0"><stop offset=".5560" stop-color="#0000ff"/><stop offset=".5605" stop-color="#0000ff"/><stop offset=".6240" stop-color="#7300ff"/></linearGradient><linearGradient id="r170" gradientUnits="userSpaceOnUse" x1="0" x2="2000" y1="0" y2="0"><stop offset=".5570" stop-color="#0000ff"/><stop offset=".5610" stop-color="#0100ff"/><stop offset=".6235" stop-color="#7100ff"/></linearGradient><linearGradient id="r171" gradientUnits="userSpaceOnUse" x1="0" x2="2000" y1="0" y2="0"><stop offset=".5580" stop-color="#0000ff"/><stop offset=".5610" stop-color="#0000ff"/><stop offset=".6225" stop-color="#6e00ff"/></linearGradient><linearGradient id="r172" gradientUnits="userSpaceOnUse" x1="0" x2="2000" y1="0" y2="0"><stop offset=".5590" stop-color="#0000ff"/><stop offset=".5650" stop-color="#0700ff"/><stop offset=".6215" stop-color="#6b00ff"/></linearGradient><linearGradient id="r173" gradientUnits="userSpaceOnUse" x1="0" x2="2000" y1="0" y2="0"><stop offset=".5600" stop-color="#0000ff"/><stop offset=".6205" stop-color="#6800ff"/></linearGradient><linearGradient id="r174" gradientUnits="userSpaceOnUse" x1="0" x2="2000" y1="0" y2="0"><stop offset=".5610" stop-color="#0000ff"/><stop offset=".6195" stop-color="#6600ff"/></linearGradient><linearGradient id="r175" gradientUnits="userSpaceOnUse" x1="0" x2="2000" y1="0" y2="0"><stop offset=".5620" stop-color="#0100ff"/><stop offset=".6185" stop-color="#6300ff"/></linearGradient><linearGradient id="r176" gradientUnits="userSpaceOnUse" x1="0" x2="2000" y1="0" y2="0"><stop offset=".5635" stop-color="#0300ff"/><stop offset=".6175" stop-color="#6000ff"/></linearGradient><linearGradient id="r177" gradientUnits="userSpaceOnUse" x1="0" x2="2000" y1="0" y2="0"><stop offset=".5645" stop-color="#0500ff"/><stop offset=".6165" stop-color="#5e00ff"/></linearGradient><linearGradient id="r178" gradientUnits="userSpaceOnUse" x1="0" x2="2000" y1="0" y2="0"><stop offset=".5655" stop-color="#0600ff"/><stop offset=".6155" stop-color="#5b00ff"/></linearGradient><linearGradient id="r179" gradientUnits="userSpaceOnUse" x1="0" x2="2000" y1="0" y2="0"><stop offset=".5665" stop-color="#0700ff"/><stop offset=".6145" stop-color="#5800ff"/></linearGradient><linearGradient id="r180" gradientUnits="userSpaceOnUse" x1="0" x2="2000" y1="0" y2="0"><stop offset=".5675" stop-color="#0900ff"/><stop offset=".6135" stop-color="#5600ff"/></linearGradient><linearGradient id="r181" gradientUnits="userSpaceOnUse" x1="0" x2="2000" y1="0" y2="0"><stop offset=".5690" stop-color="#0b00ff"/><stop offset=".6125" stop-color="#5300ff"/></linearGradient><linearGradient id="r182" gradientUnits="userSpaceOnUse" x1="0" x2="2000" y1="0" y2="0"><stop offset=".5700" stop-color="#0c00ff"/><stop offset=".6115" stop-color="#5100ff"/></linearGradient><linearGradient id="r183" gradientUnits="userSpaceOnUse" x1="0" x2="2000" y1="0" y2="0"><stop offset=".5710" stop-color="#0d00ff"/><stop offset=".6105" stop-color="#4f00ff"/></linearGradient><linearGradient id="r184" gradientUnits="userSpaceOnUse" x1="0" x2="2000" y1="0" y2="0"><stop offset=".5725" stop-color="#0f00ff"/><stop offset=".6095" stop-color="#4c00ff"/></linearGradient><linearGradient id="r185" gradientUnits="userSpaceOnUse" x1="0" x2="2000" y1="0" y2="0"><stop offset=".5735" stop-color="#1100ff"/><stop offset=".6090" stop-color="#4b00ff"/></linearGradient><linearGradient id="r186" gradientUnits="userSpaceOnUse" x1="0" x2="2000" y1="0" y2="0"><stop offset=".5750" stop-color="#1300ff"/><stop offset=".6080" stop-color="#4800ff"/></linearGradient><linearGradient id="r187" gradientUnits="userSpaceOnUse" x1="0" x2="2000" y1="0" y2="0"><stop offset=".5760" stop-color="#1400ff"/><stop offset=".6070" stop-color="#4600ff"/></linearGradient><linearGradient id="r188" gradientUnits="userSpaceOnUse" x1="0" x2="2000" y1="0" y2="0"><stop offset=".5775" stop-color="#1600ff"/><stop offset=".6060" stop-color="#4400ff"/></linearGradient><linearGradient id="r189" gradientUnits="userSpaceOnUse" x1="0" x2="2000" y1="0" y2="0"><stop offset=".5785" stop-color="#1700ff"/><stop offset=".6050" stop-color="#4100ff"/></linearGradient><linearGradient id="r190" gradientUnits="userSpaceOnUse" x1="0" x2="2000" y1="0" y2="0"><stop offset=".5795" stop-color="#1800ff"/><stop offset=".6040" stop-color="#3f00ff"/></linearGradient><linearGradient id="r191" gradientUnits="userSpaceOnUse" x1="0" x2="2000" y1="0" y2="0"><stop offset=".5810" stop-color="#1a00ff"/><stop offset=".6030" stop-color="#3d00ff"/></linearGradient><linearGradient id="r192" gradientUnits="userSpaceOnUse" x1="0" x2="2000" y1="0" y2="0"><stop offset=".5820" stop-color="#1b00ff"/><stop offset=".6020" stop-color="#3b00ff"/></linearGradient><linearGradient id="r193" gradientUnits="userSpaceOnUse" x1="0" x2="2000" y1="0" y2="0"><stop offset=".5835" stop-color="#1d00ff"/><stop offset=".6010" stop-color="#3900ff"/></linearGradient><linearGradient id="r194" gradientUnits="userSpaceOnUse" x1="0" x2="2000" y1="0" y2="0"><stop offset=".5845" stop-color="#1e00ff"/><stop offset=".6000" stop-color="#3600ff"/></linearGradient><linearGradient id="r195" gradientUnits="userSpaceOnUse" x1="0" x2="2000" y1="0" y2="0"><stop offset=".5855" stop-color="#2000ff"/><stop offset=".5990" stop-color="#3400ff"/></linearGradient><linearGradient id="r196" gradientUnits="userSpaceOnUse" x1="0" x2="2000" y1="0" y2="0"><stop offset=".5870" stop-color="#2100ff"/><stop offset=".5980" stop-color="#3200ff"/></linearGradient><linearGradient id="r197" gradientUnits="userSpaceOnUse" x1="0" x2="2000" y1="0" y2="0"><stop offset=".5880" stop-color="#2300ff"/><stop offset=".5970" stop-color="#3000ff"/></linearGradient><linearGradient id="r198" gradientUnits="userSpaceOnUse" x1="0" x2="2000" y1="0" y2="0"><stop offset=".5895" stop-color="#2400ff"/><stop offset=".5960" stop-color="#2e00ff"/></linearGradient><clipPath id="lc"><path d="M1187.9,444.0 1187.8,444.0 1187.8,444.0 1187.8,444.1 1187.8,444.1 1187.8,444.1 1187.8,444.1 1187.8,444.1 1187.7,444.1 1187.7,444.1 1187.7,444.1 1187.7,444.1 1187.7,444.2 1187.6,444.2 1187.6,444.2 1187.6,444.2 1187.6,444.2 1187.6,444.2 1187.5,444.3 1187.5,444.3 1187.5,444.3 1187.4,444.3 1187.4,444.3 1187.4,444.3 1187.4,444.3 1187.3,444.4 1187.3,444.4 1187.3,444.4 1187.2,444.4 1187.2,444.4 1187.2,444.4 1187.1,444.4 1187.1,444.4 1187.0,444.5 1187.0,444.5 1187.0,444.5 1186.9,444.5 1186.9,444.5 1186.8,444.5 1186.8,444.5 1186.7,444.5 1186.7,444.5 1186.6,444.5 1186.6,444.5 1186.5,444.5 1186.5,444.5 1186.4,444.5 1186.4,444.5 1186.3,444.5 1186.3,444.5 1186.2,444.5 1186.1,444.5 1186.1,444.5 1186.0,444.5 1186.0,444.5 1185.9,444.5 1185.8,444.5 1185.8,444.5 1185.7,444.5 1185.6,444.5 1185.5,444.5 1185.5,444.5 1185.4,444.5 1185.3,444.5 1185.2,444.4 1185.1,444.4 1185.0,444.4 1184.9,444.4 1184.8,444.3 1184.6,444.3 1184.5,444.2 1184.4,444.2 1184.2,444.1 1184.0,444.0 1183.9,443.9 1183.7,443.8 1183.5,443.7 1183.3,443.6 1183.1,443.5 1182.9,443.3 1182.6,443.2 1182.4,443.0 1182.1,442.8 1181.9,442.6 1181.6,442.4 1181.3,442.2 1181.0,442.0 1180.7,441.7 1180.3,441.5 1180.0,441.2 1179.6,440.9 1179.2,440.7 1178.9,440.3 1178.5,440.0 1178.1,439.7 1177.6,439.3 1177.2,439.0 1176.7,438.6 1176.3,438.2 1175.8,437.8 1175.3,437.4 1174.8,437.0 1174.3,436.5 1173.7,436.1 1173.2,435.6 1172.6,435.1 1172.0,434.6 1171.4,434.1 1170.8,433.6 1170.2,433.1 1169.5,432.5 1168.8,432.0 1168.1,431.4 1167.4,430.8 1166.7,430.2 1166.0,429.6 1165.2,428.9 1164.4,428.3 1163.6,427.6 1162.8,426.9 1162.0,426.3 1161.1,425.5 1160.2,424.8 1159.3,424.1 1158.4,423.3 1157.4,422.5 1156.4,421.7 1155.4,420.9 1154.4,420.0 1153.4,419.1 1152.3,418.2 1151.2,417.3 1150.0,416.4 1148.9,415.4 1147.7,414.4 1146.5,413.4 1145.2,412.4 1144.0,411.3 1142.7,410.2 1141.4,409.1 1140.0,407.9 1138.7,406.7 1137.3,405.5 1135.9,404.3 1134.4,403.0 1132.9,401.7 1131.4,400.3 1129.9,398.9 1128.4,397.5 1126.8,396.0 1125.2,394.5 1123.6,392.9 1121.9,391.3 1120.2,389.7 1118.5,387.9 1116.7,386.1 1114.8,384.2 1112.9,382.2 1111.0,380.1 1108.9,377.8 1106.8,375.5 1104.6,372.9 1102.3,370.3 1100.0,367.6 1097.6,364.7 1095.2,361.7 1092.7,358.6 1090.1,355.3 1087.5,352.0 1084.8,348.5 1082.1,345.0 1079.4,341.3 1076.6,337.5 1073.8,333.6 1071.0,329.6 1068.1,325.5 1065.2,321.2 1062.2,316.9 1059.3,312.4 1056.3,307.8 1053.2,303.1 1050.2,298.3 1047.1,293.4 1044.0,288.4 1040.9,283.3 1037.8,278.2 1034.7,273.0 1031.6,267.8 1028.5,262.5 1025.4,257.2 1022.4,251.9 1019.3,246.6 1016.3,241.2 1013.4,235.8 1010.5,230.4 1007.6,225.0 1004.9,219.7 1002.2,214.3 999.6,209.0 997.0,203.7 994.6,198.5 992.2,193.3 989.9,188.1 987.7,183.0 985.6,178.0 983.6,173.1 981.6,168.2 979.7,163.4 977.9,158.8 976.1,154.2 974.5,149.7 972.9,145.4 971.4,141.1 970.0,137.0 968.7,133.0 967.4,129.1 966.3,125.4 965.2,121.7 964.2,118.2 963.3,114.9 962.5,111.6 961.7,108.4 961.0,105.4 960.4,102.5 959.8,99.7 959.4,97.0 958.9,94.4 958.6,91.9 958.3,89.5 958.0,87.2 957.9,85.0 957.7,82.9 957.7,80.8 957.7,78.9 957.7,77.0 957.8,75.2 957.9,73.4 958.1,71.7 958.4,70.1 958.7,68.6 959.1,67.1 959.5,65.7 959.9,64.3 960.4,63.0 960.9,61.8 961.5,60.6 962.2,59.5 962.9,58.4 963.6,57.4 964.3,56.5 965.1,55.6 966.0,54.8 966.8,54.0 967.7,53.2 968.7,52.6 969.6,51.9 970.6,51.4 971.7,50.8 972.7,50.3 973.8,49.9 974.9,49.5 976.0,49.1 977.2,48.8 978.3,48.5 979.5,48.2 980.7,48.0 981.9,47.8 983.2,47.6 984.4,47.5 985.7,47.3 987.0,47.2 988.3,47.1 989.6,47.0 990.9,46.9 992.3,46.9 993.6,46.8 995.0,46.8 996.3,46.7 997.7,46.7 999.1,46.7 1000.4,46.6 1001.8,46.6 1003.2,46.6 1004.6,46.6 1005.9,46.6 1007.3,46.6 1008.7,46.7 1010.0,46.7 1011.4,46.7 1012.8,46.7 1014.2,46.8 1015.6,46.8 1017.0,46.9 1018.4,46.9 1019.8,47.0 1021.2,47.1 1022.7,47.1 1024.1,47.2 1025.6,47.3 1027.1,47.4 1028.5,47.5 1030.0,47.6 1031.6,47.7 1033.1,47.8 1034.6,47.9 1036.2,48.0 1037.7,48.1 1039.3,48.2 1040.9,48.4 1042.5,48.5 1044.1,48.6 1045.7,48.8 1047.4,48.9 1049.0,49.1 1050.7,49.2 1052.4,49.4 1054.1,49.5 1055.8,49.7 1057.6,49.9 1059.4,50.0 1061.1,50.2 1062.9,50.4 1064.8,50.6 1066.6,50.8 1068.4,50.9 1070.3,51.1 1072.2,51.3 1074.1,51.5 1076.1,51.7 1078.0,51.9 1080.0,52.2 1082.0,52.4 1084.1,52.6 1086.1,52.8 1088.2,53.0 1090.3,53.3 1092.4,53.5 1094.5,53.7 1096.7,54.0 1098.9,54.2 1101.1,54.5 1103.3,54.7 1105.6,55.0 1107.9,55.2 1110.2,55.5 1112.5,55.7 1114.9,56.0 1117.3,56.3 1119.7,56.5 1122.1,56.8 1124.6,57.1 1127.1,57.4 1129.6,57.7 1132.1,58.0 1134.7,58.3 1137.3,58.6 1139.9,58.9 1142.5,59.2 1145.2,59.5 1147.9,59.8 1150.6,60.1 1153.4,60.4 1156.2,60.7 1159.0,61.1 1161.8,61.4 1164.7,61.7 1167.6,62.0 1170.5,62.4 1173.4,62.7 1176.4,63.1 1179.4,63.4 1182.4,63.8 1185.5,64.1 1188.6,64.5 1191.7,64.8 1194.8,65.2 1198.0,65.6 1201.2,65.9 1204.4,66.3 1207.6,66.7 1210.9,67.1 1214.2,67.4 1217.5,67.8 1220.8,68.2 1224.1,68.6 1227.5,69.0 1230.9,69.4 1234.3,69.8 1237.7,70.1 1241.1,70.5 1244.5,70.9 1248.0,71.3 1251.4,71.7 1254.9,72.1 1258.3,72.5 1261.8,72.9 1265.3,73.3 1268.8,73.7 1272.3,74.1 1275.8,74.6 1279.3,75.0 1282.7,75.4 1286.2,75.8 1289.7,76.2 1293.2,76.6 1296.7,77.0 1300.1,77.4 1303.6,77.8 1307.0,78.2 1310.5,78.6 1313.9,79.0 1317.3,79.4 1320.7,79.8 1324.1,80.1 1327.4,80.5 1330.8,80.9 1334.1,81.3 1337.4,81.7 1340.7,82.1 1343.9,82.4 1347.2,82.8 1350.4,83.2 1353.5,83.5 1356.7,83.9 1359.8,84.3 1362.9,84.6 1365.9,85.0 1368.9,85.3 1371.9,85.6 1374.8,86.0 1377.7,86.3 1380.6,86.6 1383.4,87.0 1386.2,87.3 1388.9,87.6 1391.6,87.9 1394.2,88.2 1396.8,88.5 1399.4,88.8 1401.9,89.1 1404.4,89.4 1406.8,89.7 1409.2,90.0 1411.6,90.2 1413.9,90.5 1416.1,90.8 1418.4,91.0 1420.5,91.3 1422.7,91.5 1424.8,91.8 1426.8,92.0 1428.9,92.3 1430.8,92.5 1432.8,92.7 1434.7,92.9 1436.6,93.1 1438.4,93.4 1440.2,93.6 1441.9,93.8 1443.7,94.0 1445.4,94.2 1447.1,94.3 1448.7,94.5 1450.3,94.7 1451.9,94.9 1453.5,95.1 1455.0,95.3 1456.5,95.4 1458.0,95.6 1459.5,95.8 1461.0,96.0 1462.4,96.1 1463.8,96.3 1465.2,96.4 1466.6,96.6 1467.9,96.8 1469.2,96.9 1470.5,97.1 1471.8,97.2 1473.1,97.4 1474.3,97.5 1475.5,97.6 1476.7,97.8 1477.8,97.9 1479.0,98.0 1480.1,98.2 1481.2,98.3 1482.2,98.4 1483.3,98.5 1484.3,98.7 1485.2,98.8 1486.2,98.9 1487.1,99.0 1488.1,99.1 1488.9,99.2 1489.8,99.3 1490.7,99.4 1491.5,99.5 1492.3,99.6 1493.1,99.7 1493.8,99.7 1494.6,99.8 1495.3,99.9 1496.0,100.0 1496.7,100.1 1497.4,100.2 1498.0,100.2 1498.6,100.3 1499.3,100.4 1499.9,100.4 1500.5,100.5 1501.0,100.6 1501.6,100.6 1502.1,100.7 1502.6,100.8 1503.1,100.8 1503.6,100.9 1504.1,100.9 1504.5,101.0 1505.0,101.0 1505.4,101.1 1505.8,101.1 1506.2,101.2 1506.6,101.2 1506.9,101.3 1507.3,101.3 1507.6,101.3 1507.9,101.4 1508.2,101.4 1508.5,101.4 1508.8,101.5 1509.1,101.5 1509.4,101.5 1509.6,101.6 1509.9,101.6 1510.1,101.6 1510.3,101.7 1510.5,101.7 1510.8,101.7 1511.0,101.7 1511.2,101.8 1511.4,101.8 1511.6,101.8 1511.8,101.8 1512.0,101.8 1512.2,101.9 1512.4,101.9 1512.6,101.9 1512.7,101.9 1512.9,102.0 1513.1,102.0 1513.3,102.0 1513.5,102.0 1513.7,102.0 1513.8,102.1 1514.0,102.1 1514.2,102.1 1514.4,102.1 1514.5,102.1 1514.7,102.2 1514.9,102.2 1515.0,102.2 1515.2,102.2 1515.3,102.2 1515.5,102.3 1515.6,102.3 1515.8,102.3 1515.9,102.3 1516.1,102.3 1516.2,102.3 1516.4,102.4 1516.5,102.4 1516.6,102.4 1516.7,102.4 1516.9,102.4 1517.0,102.4 1517.1,102.4 1517.2,102.5 1517.3,102.5 1517.4,102.5 1517.5,102.5 1517.6,102.5 1517.7,102.5 1517.8,102.5 1517.8,102.5 1517.9,102.5 1518.0,102.5 1518.0,102.5 1518.1,102.6 1518.1,102.6 1518.2,102.6 1518.2,102.6 1518.2,102.6 1518.3,102.6 1518.3,102.6 1518.3,102.6 1518.3,102.6 1518.3,102.6 1518.3,102.6 1518.3,102.6Z"/></clipPath><clipPath id="pc"><rect x="957.0" y="38.0" width="541.0" height="417.0"/></clipPath><linearGradient id="i0" gradientUnits="userSpaceOnUse" x1="0" x2="2000" y1="0" y2="0"><stop offset=".6565" stop-color="#83ffcf"/><stop offset=".6925" stop-color="#bfffcc"/><stop offset=".7270" stop-color="#ffffc9"/><stop offset=".7470" stop-color="#ffdcad"/></linearGradient><linearGradient id="i1" gradientUnits="userSpaceOnUse" x1="0" x2="2000" y1="0" y2="0"><stop offset=".6565" stop-color="#85ffd1"/><stop offset=".6920" stop-color="#c0ffce"/><stop offset=".7255" stop-color="#feffcc"/><stop offset=".7470" stop-color="#ffdaad"/></linearGradient><linearGradient id="i2" gradientUnits="userSpaceOnUse" x1="0" x2="2000" y1="0" y2="0"><stop offset=".6565" stop-color="#86ffd3"/><stop offset=".6915" stop-color="#c1ffd1"/><stop offset=".7245" stop-color="#ffffce"/><stop offset=".7470" stop-color="#ffd8ad"/></linearGradient><linearGradient id="i3" gradientUnits="userSpaceOnUse" x1="0" x2="2000" y1="0" y2="0"><stop offset=".6565" stop-color="#88ffd5"/><stop offset=".6905" stop-color="#c1ffd3"/><stop offset=".7230" stop-color="#feffd1"/><stop offset=".7470" stop-color="#ffd6ae"/></linearGradient><linearGradient id="i4" gradientUnits="userSpaceOnUse" x1="0" x2="2000" y1="0" y2="0"><stop offset=".6565" stop-color="#89ffd8"/><stop offset=".6900" stop-color="#c3ffd6"/><stop offset=".7220" stop-color="#ffffd3"/><stop offset=".7470" stop-color="#ffd4ae"/></linearGradient><linearGradient id="i5" gradientUnits="userSpaceOnUse" x1="0" x2="2000" y1="0" y2="0"><stop offset=".6565" stop-color="#8bffda"/><stop offset=".7205" stop-color="#ffffd6"/><stop offset=".7470" stop-color="#ffd2af"/></linearGradient><linearGradient id="i6" gradientUnits="userSpaceOnUse" x1="0" x2="2000" y1="0" y2="0"><stop offset=".6565" stop-color="#8dffdc"/><stop offset=".7195" stop-color="#ffffd9"/><stop offset=".7470" stop-color="#ffd0af"/></linearGradient><linearGradient id="i7" gradientUnits="userSpaceOnUse" x1="0" x2="2000" y1="0" y2="0"><stop offset=".6565" stop-color="#8effde"/><stop offset=".7180" stop-color="#ffffdb"/><stop offset=".7470" stop-color="#ffceaf"/></linearGradient><linearGradient id="i8" gradientUnits="userSpaceOnUse" x1="0" x2="2000" y1="0" y2="0"><stop offset=".6565" stop-color="#90ffe1"/><stop offset=".7170" stop-color="#ffffde"/><stop offset=".7470" stop-color="#ffccb0"/></linearGradient><linearGradient id="i9" gradientUnits="userSpaceOnUse" x1="0" x2="2000" y1="0" y2="0"><stop offset=".6565" stop-color="#92ffe3"/><stop offset=".7155" stop-color="#ffffe1"/><stop offset=".7470" stop-color="#ffcab0"/></linearGradient><linearGradient id="i10" gradientUnits="userSpaceOnUse" x1="0" x2="2000" y1="0" y2="0"><stop offset=".6565" stop-color="#93ffe5"/><stop offset=".7145" stop-color="#ffffe3"/><stop offset=".7470" stop-color="#ffc8b1"/></linearGradient><linearGradient id="i11" gradientUnits="userSpaceOnUse" x1="0" x2="2000" y1="0" y2="0"><stop offset=".6565" stop-color="#95ffe8"/><stop offset=".7130" stop-color="#ffffe6"/><stop offset=".7470" stop-color="#ffc6b1"/></linearGradient><linearGradient id="i12" gradientUnits="userSpaceOnUse" x1="0" x2="2000" y1="0" y2="0"><stop offset=".6565" stop-color="#97ffea"/><stop offset=".7120" stop-color="#ffffe8"/><stop offset=".7470" stop-color="#ffc4b2"/></linearGradient><linearGradient id="i13" gradientUnits="userSpaceOnUse" x1="0" x2="2000" y1="0" y2="0"><stop offset=".6565" stop-color="#99ffed"/><stop offset=".7105" stop-color="#ffffeb"/><stop offset=".7280" stop-color="#ffdecd"/><stop offset=".7470" stop-color="#ffc2b2"/></linearGradient><linearGradient id="i14" gradientUnits="userSpaceOnUse" x1="0" x2="2000" y1="0" y2="0"><stop offset=".6565" stop-color="#9bffef"/><stop offset=".7090" stop-color="#ffffee"/><stop offset=".7275" stop-color="#ffddce"/><stop offset=".7470" stop-color="#ffc0b2"/></linearGradient><linearGradient id="i15" gradientUnits="userSpaceOnUse" x1="0" x2="2000" y1="0" y2="0"><stop offset=".6565" stop-color="#9cfff2"/><stop offset=".7080" stop-color="#fffff1"/><stop offset=".7265" stop-color="#ffdcd0"/><stop offset=".7470" stop-color="#ffbeb3"/></linearGradient><linearGradient id="i16" gradientUnits="userSpaceOnUse" x1="0" x2="2000" y1="0" y2="0"><stop offset=".6565" stop-color="#9efff4"/><stop offset=".7065" stop-color="#fffff4"/><stop offset=".7260" stop-color="#ffdbd1"/><stop offset=".7470" stop-color="#ffbcb3"/></linearGradient><linearGradient id="i17" gradientUnits="userSpaceOnUse" x1="0" x2="2000" y1="0" y2="0"><stop offset=".6565" stop-color="#a0fff7"/><stop offset=".7055" stop-color="#fffff6"/><stop offset=".7250" stop-color="#ffdad3"/><stop offset=".7470" stop-color="#ffbab4"/></linearGradient><linearGradient id="i18" gradientUnits="userSpaceOnUse" x1="0" x2="2000" y1="0" y2="0"><stop offset=".6565" stop-color="#a2fffa"/><stop offset=".7040" stop-color="#fffff9"/><stop offset=".7245" stop-color="#ffd9d4"/><stop offset=".7470" stop-color="#ffb8b4"/></linearGradient><linearGradient id="i19" gradientUnits="userSpaceOnUse" x1="0" x2="2000" y1="0" y2="0"><stop offset=".6565" stop-color="#a4fffc"/><stop offset=".7030" stop-color="#fffffc"/><stop offset=".7235" stop-color="#ffd8d6"/><stop offset=".7470" stop-color="#ffb6b4"/></linearGradient><linearGradient id="i20" gradientUnits="userSpaceOnUse" x1="0" x2="2000" y1="0" y2="0"><stop offset=".6565" stop-color="#a6ffff"/><stop offset=".7015" stop-color="#ffffff"/><stop offset=".7230" stop-color="#ffd7d7"/><stop offset=".7470" stop-color="#ffb4b5"/></linearGradient><linearGradient id="i21" gradientUnits="userSpaceOnUse" x1="0" x2="2000" y1="0" y2="0"><stop offset=".6565" stop-color="#a6fcff"/><stop offset=".7020" stop-color="#fffbff"/><stop offset=".7230" stop-color="#ffd5d8"/><stop offset=".7470" stop-color="#ffb2b5"/></linearGradient><linearGradient id="i22" gradientUnits="userSpaceOnUse" x1="0" x2="2000" y1="0" y2="0"><stop offset=".6565" stop-color="#a6faff"/><stop offset=".7020" stop-color="#fff9ff"/><stop offset=".7230" stop-color="#ffd2d8"/><stop offset=".7470" stop-color="#ffb1b5"/></linearGradient><linearGradient id="i23" gradientUnits="userSpaceOnUse" x1="0" x2="2000" y1="0" y2="0"><stop offset=".6565" stop-color="#a6f7ff"/><stop offset=".7020" stop-color="#fff6ff"/><stop offset=".7230" stop-color="#ffd0d8"/><stop offset=".7470" stop-color="#ffafb6"/></linearGradient><linearGradient id="i24" gradientUnits="userSpaceOnUse" x1="0" x2="2000" y1="0" y2="0"><stop offset=".6565" stop-color="#a7f4ff"/><stop offset=".7020" stop-color="#fff3ff"/><stop offset=".7235" stop-color="#ffcdd8"/><stop offset=".7470" stop-color="#ffadb6"/></linearGradient><linearGradient id="i25" gradientUnits="userSpaceOnUse" x1="0" x2="2000" y1="0" y2="0"><stop offset=".6565" stop-color="#a7f2ff"/><stop offset=".7020" stop-color="#fff0ff"/><stop offset=".7235" stop-color="#ffcbd8"/><stop offset=".7470" stop-color="#ffabb7"/></linearGradient><linearGradient id="i26" gradientUnits="userSpaceOnUse" x1="0" x2="2000" y1="0" y2="0"><stop offset=".6565" stop-color="#a7efff"/><stop offset=".7025" stop-color="#ffedff"/><stop offset=".7235" stop-color="#ffc9d8"/><stop offset=".7470" stop-color="#ffa9b7"/></linearGradient><linearGradient id="i27" gradientUnits="userSpaceOnUse" x1="0" x2="2000" y1="0" y2="0"><stop offset=".6565" stop-color="#a7ecff"/><stop offset=".7025" stop-color="#ffebff"/><stop offset=".7235" stop-color="#ffc7d9"/><stop offset=".7470" stop-color="#ffa7b7"/></linearGradient><linearGradient id="i28" gradientUnits="userSpaceOnUse" x1="0" x2="2000" y1="0" y2="0"><stop offset=".6565" stop-color="#a7eaff"/><stop offset=".7025" stop-color="#ffe8ff"/><stop offset=".7235" stop-color="#ffc5d9"/><stop offset=".7470" stop-color="#ffa6b8"/></linearGradient><linearGradient id="i29" gradientUnits="userSpaceOnUse" x1="0" x2="2000" y1="0" y2="0"><stop offset=".6565" stop-color="#a8e7ff"/><stop offset=".7025" stop-color="#ffe5ff"/><stop offset=".7235" stop-color="#ffc2d9"/><stop offset=".7470" stop-color="#ffa4b8"/></linearGradient><linearGradient id="i30" gradientUnits="userSpaceOnUse" x1="0" x2="2000" y1="0" y2="0"><stop offset=".6565" stop-color="#a8e5ff"/><stop offset=".7025" stop-color="#ffe3ff"/><stop offset=".7240" stop-color="#ffc0d9"/><stop offset=".7470" stop-color="#ffa2b8"/></linearGradient><linearGradient id="i31" gradientUnits="userSpaceOnUse" x1="0" x2="2000" y1="0" y2="0"><stop offset=".6565" stop-color="#a8e2ff"/><stop offset=".7030" stop-color="#ffe0ff"/><stop offset=".7235" stop-color="#ffbeda"/><stop offset=".7470" stop-color="#ffa0b9"/></linearGradient><linearGradient id="i32" gradientUnits="userSpaceOnUse" x1="0" x2="2000" y1="0" y2="0"><stop offset=".6565" stop-color="#a8e0ff"/><stop offset=".7030" stop-color="#ffddff"/><stop offset=".7235" stop-color="#ffbcda"/><stop offset=".7470" stop-color="#ff9fb9"/></linearGradient><linearGradient id="i33" gradientUnits="userSpaceOnUse" x1="0" x2="2000" y1="0" y2="0"><stop offset=".6565" stop-color="#a8ddff"/><stop offset=".7030" stop-color="#ffdbff"/><stop offset=".7235" stop-color="#ffbada"/><stop offset=".7470" stop-color="#ff9db9"/></linearGradient><linearGradient id="i34" gradientUnits="userSpaceOnUse" x1="0" x2="2000" y1="0" y2="0"><stop offset=".6565" stop-color="#a8dbff"/><stop offset=".7030" stop-color="#ffd8ff"/><stop offset=".7240" stop-color="#ffb7da"/><stop offset=".7470" stop-color="#ff9bba"/></linearGradient><linearGradient id="i35" gradientUnits="userSpaceOnUse" x1="0" x2="2000" y1="0" y2="0"><stop offset=".6565" stop-color="#a9d9ff"/><stop offset=".7030" stop-color="#ffd6ff"/><stop offset=".7240" stop-color="#ffb5da"/><stop offset=".7470" stop-color="#ff99ba"/></linearGradient><linearGradient id="i36" gradientUnits="userSpaceOnUse" x1="0" x2="2000" y1="0" y2="0"><stop offset=".6565" stop-color="#a9d6ff"/><stop offset=".7035" stop-color="#ffd3ff"/><stop offset=".7240" stop-color="#ffb3da"/><stop offset=".7470" stop-color="#ff98bb"/></linearGradient><linearGradient id="i37" gradientUnits="userSpaceOnUse" x1="0" x2="2000" y1="0" y2="0"><stop offset=".6565" stop-color="#a9d4ff"/><stop offset=".7035" stop-color="#ffd0ff"/><stop offset=".7240" stop-color="#ffb1db"/><stop offset=".7470" stop-color="#ff96bb"/></linearGradient><linearGradient id="i38" gradientUnits="userSpaceOnUse" x1="0" x2="2000" y1="0" y2="0"><stop offset=".6565" stop-color="#a9d2ff"/><stop offset=".7035" stop-color="#ffceff"/><stop offset=".7240" stop-color="#ffafdb"/><stop offset=".7470" stop-color="#ff94bb"/></linearGradient><linearGradient id="i39" gradientUnits="userSpaceOnUse" x1="0" x2="2000" y1="0" y2="0"><stop offset=".6565" stop-color="#a9cfff"/><stop offset=".7035" stop-color="#ffcbff"/><stop offset=".7240" stop-color="#ffaddb"/><stop offset=".7470" stop-color="#ff93bc"/></linearGradient><linearGradient id="i40" gradientUnits="userSpaceOnUse" x1="0" x2="2000" y1="0" y2="0"><stop offset=".6565" stop-color="#a9cdff"/><stop offset=".7035" stop-color="#ffc9ff"/><stop offset=".7245" stop-color="#ffabdb"/><stop offset=".7470" stop-color="#ff91bc"/></linearGradient><linearGradient id="bar" x1="0" y1="0" x2="0" y2="1"><stop offset="0" stop-color="#464646"/><stop offset="1" stop-color="#1e1e1e"/></linearGradient><linearGradient id="bt" x1="0" y1="0" x2="0" y2="1"><stop offset="0" stop-color="#929292"/><stop offset="1" stop-color="#686868"/></linearGradient><linearGradient id="bt2" x1="0" y1="0" x2="0" y2="1"><stop offset="0" stop-color="#9a9a9a"/><stop offset="1" stop-color="#666"/></linearGradient><linearGradient id="ci" x1="0" y1="0" x2="0" y2="1"><stop offset="0" stop-color="#6e6e6e"/><stop offset="1" stop-color="#989898"/></linearGradient><linearGradient id="sel" x1="0" y1="0" x2="0" y2="1"><stop offset="0" stop-color="#aaa"/><stop offset=".12" stop-color="#8e8e8e"/><stop offset=".95" stop-color="#636363"/><stop offset="1" stop-color="#4c4c4c"/></linearGradient></defs>
<rect x="0" y="0" width="1600" height="758" fill="#333333"/>
<rect x="0" y="0" width="1600" height="1.2" fill="#2a2a2a"/>
<rect x="0" y="1.2" width="1600" height="2.3" fill="#393939"/>
<rect x="0" y="3.5" width="1600" height="3.5" fill="#353535"/>
<rect x="1592" y="0" width="4.7" height="691" fill="#363636"/>
<text x="99" y="42.5" font-size="32.6" fill="#f6f6f6" textLength="282" lengthAdjust="spacingAndGlyphs" stroke="#f6f6f6" stroke-width="0.5">Saturation Sweeps</text>
<text x="197.5" y="87.5" font-size="18.5" fill="#f0f0f0" textLength="91" lengthAdjust="spacingAndGlyphs" stroke="#f0f0f0" stroke-width="0.35">dE Formula:</text>
<rect x="296" y="71.5" width="113.5" height="20" fill="url(#dd)"/>
<text x="300" y="88" font-size="14.5" fill="#f0f0f0" textLength="29" lengthAdjust="spacingAndGlyphs">2000</text>
<path d="M396.6,78.6 h8.8 l-4.4,5.4z" fill="#111"/>
<text x="567" y="36.2" font-size="18.4" fill="#f0f0f0" textLength="51" lengthAdjust="spacingAndGlyphs" stroke="#f0f0f0" stroke-width="0.35">Levels:</text>
<rect x="625" y="18" width="286" height="22" fill="url(#dd)"/>
<text x="628.5" y="35.7" font-size="14.5" fill="#f0f0f0" textLength="75.5" lengthAdjust="spacingAndGlyphs">20% Sweeps</text>
<path d="M898.6,26.8 h8.8 l-4.4,5.4z" fill="#111"/>
<text x="246" y="115" font-size="12.8" text-anchor="middle" fill="#e8e8e8" textLength="66.2" lengthAdjust="spacingAndGlyphs">DeltaE 2000</text>
<rect x="129" y="120" width="264.5" height="327" fill="#242424"/>
<line x1="164.2" y1="120" x2="164.2" y2="447" stroke="#9a9a9a" stroke-width="1"/>
<line x1="199.4" y1="120" x2="199.4" y2="447" stroke="#9a9a9a" stroke-width="1"/>
<line x1="234.6" y1="120" x2="234.6" y2="447" stroke="#9a9a9a" stroke-width="1"/>
<line x1="269.8" y1="120" x2="269.8" y2="447" stroke="#9a9a9a" stroke-width="1"/>
<line x1="305" y1="120" x2="305" y2="447" stroke="#9a9a9a" stroke-width="1"/>
<line x1="340.2" y1="120" x2="340.2" y2="447" stroke="#9a9a9a" stroke-width="1"/>
<line x1="375.4" y1="120" x2="375.4" y2="447" stroke="#9a9a9a" stroke-width="1"/>
<line x1="124" y1="120" x2="393.5" y2="120" stroke="#9a9a9a" stroke-width="1.6"/>
<line x1="393.5" y1="120" x2="393.5" y2="447" stroke="#9a9a9a" stroke-width="1.2"/>
<line x1="129" y1="120" x2="129" y2="447" stroke="#aaa" stroke-width="1.6"/>
<line x1="124" y1="447" x2="393.5" y2="447" stroke="#aaa" stroke-width="1.6"/>
<line x1="129" y1="447" x2="129" y2="452" stroke="#ccc" stroke-width="1.4"/>
<text x="129" y="465.5" font-size="12.8" text-anchor="middle" fill="#e8e8e8">0</text>
<line x1="164.2" y1="447" x2="164.2" y2="452" stroke="#ccc" stroke-width="1.4"/>
<text x="164.2" y="465.5" font-size="12.8" text-anchor="middle" fill="#e8e8e8">2</text>
<line x1="199.4" y1="447" x2="199.4" y2="452" stroke="#ccc" stroke-width="1.4"/>
<text x="199.4" y="465.5" font-size="12.8" text-anchor="middle" fill="#e8e8e8">4</text>
<line x1="234.6" y1="447" x2="234.6" y2="452" stroke="#ccc" stroke-width="1.4"/>
<text x="234.6" y="465.5" font-size="12.8" text-anchor="middle" fill="#e8e8e8">6</text>
<line x1="269.8" y1="447" x2="269.8" y2="452" stroke="#ccc" stroke-width="1.4"/>
<text x="269.8" y="465.5" font-size="12.8" text-anchor="middle" fill="#e8e8e8">8</text>
<line x1="305" y1="447" x2="305" y2="452" stroke="#ccc" stroke-width="1.4"/>
<text x="305" y="465.5" font-size="12.8" text-anchor="middle" fill="#e8e8e8" textLength="13.4" lengthAdjust="spacingAndGlyphs">10</text>
<line x1="340.2" y1="447" x2="340.2" y2="452" stroke="#ccc" stroke-width="1.4"/>
<text x="340.2" y="465.5" font-size="12.8" text-anchor="middle" fill="#e8e8e8" textLength="13.4" lengthAdjust="spacingAndGlyphs">12</text>
<line x1="375.4" y1="447" x2="375.4" y2="452" stroke="#ccc" stroke-width="1.4"/>
<text x="375.4" y="465.5" font-size="12.8" text-anchor="middle" fill="#e8e8e8" textLength="13.4" lengthAdjust="spacingAndGlyphs">14</text>
<line x1="124" y1="166.6" x2="129" y2="166.6" stroke="#ccc" stroke-width="1.6"/>
<line x1="124" y1="213.2" x2="129" y2="213.2" stroke="#ccc" stroke-width="1.6"/>
<line x1="124" y1="259.8" x2="129" y2="259.8" stroke="#ccc" stroke-width="1.6"/>
<line x1="124" y1="306.4" x2="129" y2="306.4" stroke="#ccc" stroke-width="1.6"/>
<line x1="124" y1="353" x2="129" y2="353" stroke="#ccc" stroke-width="1.6"/>
<line x1="124" y1="399.6" x2="129" y2="399.6" stroke="#ccc" stroke-width="1.6"/>
<text x="128.3" y="148.5" font-size="12.8" text-anchor="end" fill="#e8e8e8" textLength="30.8" lengthAdjust="spacingAndGlyphs">100%</text>
<text x="128.3" y="195.1" font-size="12.8" text-anchor="end" fill="#e8e8e8" textLength="24.1" lengthAdjust="spacingAndGlyphs">80%</text>
<text x="128.3" y="241.7" font-size="12.8" text-anchor="end" fill="#e8e8e8" textLength="24.1" lengthAdjust="spacingAndGlyphs">60%</text>
<text x="128.3" y="288.3" font-size="12.8" text-anchor="end" fill="#e8e8e8" textLength="24.1" lengthAdjust="spacingAndGlyphs">40%</text>
<text x="128.3" y="334.9" font-size="12.8" text-anchor="end" fill="#e8e8e8" textLength="24.1" lengthAdjust="spacingAndGlyphs">20%</text>
<text x="128.3" y="381.5" font-size="12.8" text-anchor="end" fill="#e8e8e8" textLength="20.1" lengthAdjust="spacingAndGlyphs">100</text>
<text x="128.3" y="428.1" font-size="12.8" text-anchor="end" fill="#e8e8e8">0</text>
<rect x="129.3" y="124.4" width="16.8" height="4.8" rx="1.2" fill="#e2202c" stroke="#060606" stroke-width="1.25"/>
<rect x="130.2" y="125.3" width="14.8" height="1.2" fill="#fff" opacity=".16"/>
<rect x="129.3" y="130.1" width="15.1" height="4.8" rx="1.2" fill="#2fc92f" stroke="#060606" stroke-width="1.25"/>
<rect x="130.2" y="131" width="13.1" height="1.2" fill="#fff" opacity=".16"/>
<rect x="129.3" y="135.8" width="11.5" height="4.8" rx="1.2" fill="#2424e0" stroke="#060606" stroke-width="1.25"/>
<rect x="130.2" y="136.7" width="9.5" height="1.2" fill="#fff" opacity=".16"/>
<rect x="129.3" y="141.6" width="17.9" height="4.8" rx="1.2" fill="#23c8c8" stroke="#060606" stroke-width="1.25"/>
<rect x="130.2" y="142.5" width="15.9" height="1.2" fill="#fff" opacity=".16"/>
<rect x="129.3" y="147.2" width="10.3" height="4.8" rx="1.2" fill="#e020e0" stroke="#060606" stroke-width="1.25"/>
<rect x="130.2" y="148.1" width="8.3" height="1.2" fill="#fff" opacity=".16"/>
<rect x="129.3" y="153" width="15.1" height="4.8" rx="1.2" fill="#dcdc20" stroke="#060606" stroke-width="1.25"/>
<rect x="130.2" y="153.9" width="13.1" height="1.2" fill="#fff" opacity=".16"/>
<rect x="129.3" y="171.5" width="11.5" height="4.8" rx="1.2" fill="#e05058" stroke="#060606" stroke-width="1.25"/>
<rect x="130.2" y="172.4" width="9.5" height="1.2" fill="#fff" opacity=".16"/>
<rect x="129.3" y="177.2" width="12.6" height="4.8" rx="1.2" fill="#58d058" stroke="#060606" stroke-width="1.25"/>
<rect x="130.2" y="178.1" width="10.6" height="1.2" fill="#fff" opacity=".16"/>
<rect x="129.3" y="182.9" width="13.4" height="4.8" rx="1.2" fill="#5858e0" stroke="#060606" stroke-width="1.25"/>
<rect x="130.2" y="183.8" width="11.4" height="1.2" fill="#fff" opacity=".16"/>
<rect x="129.3" y="188.7" width="10.3" height="4.8" rx="1.2" fill="#58d0d0" stroke="#060606" stroke-width="1.25"/>
<rect x="130.2" y="189.6" width="8.3" height="1.2" fill="#fff" opacity=".16"/>
<rect x="129.3" y="194.3" width="9.2" height="4.8" rx="1.2" fill="#e058d8" stroke="#060606" stroke-width="1.25"/>
<rect x="130.2" y="195.2" width="7.2" height="1.2" fill="#fff" opacity=".16"/>
<rect x="129.3" y="200.1" width="15.1" height="4.8" rx="1.2" fill="#d8d858" stroke="#060606" stroke-width="1.25"/>
<rect x="130.2" y="201" width="13.1" height="1.2" fill="#fff" opacity=".16"/>
<rect x="129.3" y="217.5" width="9.4" height="4.8" rx="1.2" fill="#dc686c" stroke="#060606" stroke-width="1.25"/>
<rect x="130.2" y="218.4" width="7.4" height="1.2" fill="#fff" opacity=".16"/>
<rect x="129.3" y="223.2" width="15.1" height="4.8" rx="1.2" fill="#68d068" stroke="#060606" stroke-width="1.25"/>
<rect x="130.2" y="224.1" width="13.1" height="1.2" fill="#fff" opacity=".16"/>
<rect x="129.3" y="228.9" width="18.7" height="4.8" rx="1.2" fill="#7068dc" stroke="#060606" stroke-width="1.25"/>
<rect x="130.2" y="229.8" width="16.7" height="1.2" fill="#fff" opacity=".16"/>
<rect x="129.3" y="234.7" width="17.2" height="4.8" rx="1.2" fill="#70d0d0" stroke="#060606" stroke-width="1.25"/>
<rect x="130.2" y="235.6" width="15.2" height="1.2" fill="#fff" opacity=".16"/>
<rect x="129.3" y="240.3" width="7.3" height="4.8" rx="1.2" fill="#dc70d8" stroke="#060606" stroke-width="1.25"/>
<rect x="130.2" y="241.2" width="5.3" height="1.2" fill="#fff" opacity=".16"/>
<rect x="129.3" y="246.1" width="17.2" height="4.8" rx="1.2" fill="#d4d468" stroke="#060606" stroke-width="1.25"/>
<rect x="130.2" y="247" width="15.2" height="1.2" fill="#fff" opacity=".16"/>
<rect x="129.3" y="264.9" width="9.4" height="4.8" rx="1.2" fill="#d88084" stroke="#060606" stroke-width="1.25"/>
<rect x="130.2" y="265.8" width="7.4" height="1.2" fill="#fff" opacity=".16"/>
<rect x="129.3" y="270.6" width="16.2" height="4.8" rx="1.2" fill="#80cc80" stroke="#060606" stroke-width="1.25"/>
<rect x="130.2" y="271.5" width="14.2" height="1.2" fill="#fff" opacity=".16"/>
<rect x="129.3" y="276.3" width="10.3" height="4.8" rx="1.2" fill="#8880d4" stroke="#060606" stroke-width="1.25"/>
<rect x="130.2" y="277.2" width="8.3" height="1.2" fill="#fff" opacity=".16"/>
<rect x="129.3" y="282.1" width="21.5" height="4.8" rx="1.2" fill="#88cccc" stroke="#060606" stroke-width="1.25"/>
<rect x="130.2" y="283" width="19.5" height="1.2" fill="#fff" opacity=".16"/>
<rect x="129.3" y="287.7" width="4.6" height="4.8" rx="1.2" fill="#d488d0" stroke="#060606" stroke-width="1.25"/>
<rect x="130.2" y="288.6" width="2.6" height="1.2" fill="#fff" opacity=".16"/>
<rect x="129.3" y="293.5" width="19.8" height="4.8" rx="1.2" fill="#d0d080" stroke="#060606" stroke-width="1.25"/>
<rect x="130.2" y="294.4" width="17.8" height="1.2" fill="#fff" opacity=".16"/>
<rect x="129.3" y="311" width="10.3" height="4.8" rx="1.2" fill="#d8a0a4" stroke="#060606" stroke-width="1.25"/>
<rect x="130.2" y="311.9" width="8.3" height="1.2" fill="#fff" opacity=".16"/>
<rect x="129.3" y="316.7" width="18.7" height="4.8" rx="1.2" fill="#a0cca0" stroke="#060606" stroke-width="1.25"/>
<rect x="130.2" y="317.6" width="16.7" height="1.2" fill="#fff" opacity=".16"/>
<rect x="129.3" y="322.4" width="10.3" height="4.8" rx="1.2" fill="#a49cd0" stroke="#060606" stroke-width="1.25"/>
<rect x="130.2" y="323.3" width="8.3" height="1.2" fill="#fff" opacity=".16"/>
<rect x="129.3" y="328.2" width="9.2" height="4.8" rx="1.2" fill="#a4ccc8" stroke="#060606" stroke-width="1.25"/>
<rect x="130.2" y="329.1" width="7.2" height="1.2" fill="#fff" opacity=".16"/>
<rect x="129.3" y="333.8" width="6.9" height="4.8" rx="1.2" fill="#d0a4cc" stroke="#060606" stroke-width="1.25"/>
<rect x="130.2" y="334.7" width="4.9" height="1.2" fill="#fff" opacity=".16"/>
<rect x="129.3" y="339.6" width="21.5" height="4.8" rx="1.2" fill="#d4d4a4" stroke="#060606" stroke-width="1.25"/>
<rect x="130.2" y="340.5" width="19.5" height="1.2" fill="#fff" opacity=".16"/>
<rect x="129.3" y="392.9" width="5.2" height="4.6" fill="#fff" stroke="#0a0a0a" stroke-width="1.1"/>
<text x="488.5" y="69.3" font-size="12.8" text-anchor="middle" fill="#e8e8e8" textLength="38.1" lengthAdjust="spacingAndGlyphs">Delta L</text>
<rect x="438.8" y="74" width="122.5" height="240" fill="#242424"/>
<line x1="433.8" y1="74" x2="438.8" y2="74" stroke="#ccc" stroke-width="1.4"/>
<text x="433.3" y="79" font-size="12.8" text-anchor="end" fill="#e8e8e8" textLength="13.4" lengthAdjust="spacingAndGlyphs">15</text>
<line x1="438.8" y1="114" x2="561.3" y2="114" stroke="#9a9a9a" stroke-width="1.1"/>
<line x1="433.8" y1="114" x2="438.8" y2="114" stroke="#ccc" stroke-width="1.4"/>
<text x="433.3" y="119" font-size="12.8" text-anchor="end" fill="#e8e8e8" textLength="13.4" lengthAdjust="spacingAndGlyphs">10</text>
<line x1="438.8" y1="154" x2="561.3" y2="154" stroke="#9a9a9a" stroke-width="1.1"/>
<line x1="433.8" y1="154" x2="438.8" y2="154" stroke="#ccc" stroke-width="1.4"/>
<text x="433.3" y="159" font-size="12.8" text-anchor="end" fill="#e8e8e8">5</text>
<line x1="438.8" y1="194" x2="561.3" y2="194" stroke="#9a9a9a" stroke-width="1.1"/>
<line x1="433.8" y1="194" x2="438.8" y2="194" stroke="#ccc" stroke-width="1.4"/>
<text x="433.3" y="199" font-size="12.8" text-anchor="end" fill="#e8e8e8">0</text>
<line x1="438.8" y1="234" x2="561.3" y2="234" stroke="#9a9a9a" stroke-width="1.1"/>
<line x1="433.8" y1="234" x2="438.8" y2="234" stroke="#ccc" stroke-width="1.4"/>
<text x="433.3" y="239" font-size="12.8" text-anchor="end" fill="#e8e8e8" textLength="10.7" lengthAdjust="spacingAndGlyphs">-5</text>
<line x1="438.8" y1="274" x2="561.3" y2="274" stroke="#9a9a9a" stroke-width="1.1"/>
<line x1="433.8" y1="274" x2="438.8" y2="274" stroke="#ccc" stroke-width="1.4"/>
<text x="433.3" y="279" font-size="12.8" text-anchor="end" fill="#e8e8e8" textLength="17.4" lengthAdjust="spacingAndGlyphs">-10</text>
<line x1="433.8" y1="314" x2="438.8" y2="314" stroke="#ccc" stroke-width="1.4"/>
<text x="433.3" y="319" font-size="12.8" text-anchor="end" fill="#e8e8e8" textLength="17.4" lengthAdjust="spacingAndGlyphs">-15</text>
<line x1="438.8" y1="74" x2="561.3" y2="74" stroke="#9a9a9a" stroke-width="2"/>
<line x1="438.8" y1="73" x2="438.8" y2="319" stroke="#aaa" stroke-width="1.5"/>
<line x1="561.3" y1="73" x2="561.3" y2="319" stroke="#aaa" stroke-width="1.5"/>
<line x1="438.8" y1="314" x2="561.3" y2="314" stroke="#aaa" stroke-width="1.5"/>
<line x1="450.8" y1="193.3" x2="549.3" y2="193.3" stroke="#0c0c0c" stroke-width="1.2"/>
<text x="500.05" y="327" font-size="12.8" text-anchor="middle" fill="#e8e8e8">0</text>
<text x="655.5" y="69.3" font-size="12.8" text-anchor="middle" fill="#e8e8e8" textLength="40.1" lengthAdjust="spacingAndGlyphs">Delta C</text>
<rect x="605.8" y="74" width="122.7" height="240" fill="#242424"/>
<line x1="600.8" y1="74" x2="605.8" y2="74" stroke="#ccc" stroke-width="1.4"/>
<text x="600.3" y="79" font-size="12.8" text-anchor="end" fill="#e8e8e8" textLength="13.4" lengthAdjust="spacingAndGlyphs">15</text>
<line x1="605.8" y1="114" x2="728.5" y2="114" stroke="#9a9a9a" stroke-width="1.1"/>
<line x1="600.8" y1="114" x2="605.8" y2="114" stroke="#ccc" stroke-width="1.4"/>
<text x="600.3" y="119" font-size="12.8" text-anchor="end" fill="#e8e8e8" textLength="13.4" lengthAdjust="spacingAndGlyphs">10</text>
<line x1="605.8" y1="154" x2="728.5" y2="154" stroke="#9a9a9a" stroke-width="1.1"/>
<line x1="600.8" y1="154" x2="605.8" y2="154" stroke="#ccc" stroke-width="1.4"/>
<text x="600.3" y="159" font-size="12.8" text-anchor="end" fill="#e8e8e8">5</text>
<line x1="605.8" y1="194" x2="728.5" y2="194" stroke="#9a9a9a" stroke-width="1.1"/>
<line x1="600.8" y1="194" x2="605.8" y2="194" stroke="#ccc" stroke-width="1.4"/>
<text x="600.3" y="199" font-size="12.8" text-anchor="end" fill="#e8e8e8">0</text>
<line x1="605.8" y1="234" x2="728.5" y2="234" stroke="#9a9a9a" stroke-width="1.1"/>
<line x1="600.8" y1="234" x2="605.8" y2="234" stroke="#ccc" stroke-width="1.4"/>
<text x="600.3" y="239" font-size="12.8" text-anchor="end" fill="#e8e8e8" textLength="10.7" lengthAdjust="spacingAndGlyphs">-5</text>
<line x1="605.8" y1="274" x2="728.5" y2="274" stroke="#9a9a9a" stroke-width="1.1"/>
<line x1="600.8" y1="274" x2="605.8" y2="274" stroke="#ccc" stroke-width="1.4"/>
<text x="600.3" y="279" font-size="12.8" text-anchor="end" fill="#e8e8e8" textLength="17.4" lengthAdjust="spacingAndGlyphs">-10</text>
<line x1="600.8" y1="314" x2="605.8" y2="314" stroke="#ccc" stroke-width="1.4"/>
<text x="600.3" y="319" font-size="12.8" text-anchor="end" fill="#e8e8e8" textLength="17.4" lengthAdjust="spacingAndGlyphs">-15</text>
<line x1="605.8" y1="74" x2="728.5" y2="74" stroke="#9a9a9a" stroke-width="2"/>
<line x1="605.8" y1="73" x2="605.8" y2="319" stroke="#aaa" stroke-width="1.5"/>
<line x1="728.5" y1="73" x2="728.5" y2="319" stroke="#aaa" stroke-width="1.5"/>
<line x1="605.8" y1="314" x2="728.5" y2="314" stroke="#aaa" stroke-width="1.5"/>
<line x1="617.8" y1="193.3" x2="716.5" y2="193.3" stroke="#0c0c0c" stroke-width="1.2"/>
<text x="667.15" y="327" font-size="12.8" text-anchor="middle" fill="#e8e8e8">0</text>
<text x="822.5" y="69.3" font-size="12.8" text-anchor="middle" fill="#e8e8e8" textLength="40.1" lengthAdjust="spacingAndGlyphs">Delta H</text>
<rect x="772.8" y="74" width="122.9" height="240" fill="#242424"/>
<line x1="767.8" y1="74" x2="772.8" y2="74" stroke="#ccc" stroke-width="1.4"/>
<text x="767.3" y="79" font-size="12.8" text-anchor="end" fill="#e8e8e8" textLength="13.4" lengthAdjust="spacingAndGlyphs">15</text>
<line x1="772.8" y1="114" x2="895.7" y2="114" stroke="#9a9a9a" stroke-width="1.1"/>
<line x1="767.8" y1="114" x2="772.8" y2="114" stroke="#ccc" stroke-width="1.4"/>
<text x="767.3" y="119" font-size="12.8" text-anchor="end" fill="#e8e8e8" textLength="13.4" lengthAdjust="spacingAndGlyphs">10</text>
<line x1="772.8" y1="154" x2="895.7" y2="154" stroke="#9a9a9a" stroke-width="1.1"/>
<line x1="767.8" y1="154" x2="772.8" y2="154" stroke="#ccc" stroke-width="1.4"/>
<text x="767.3" y="159" font-size="12.8" text-anchor="end" fill="#e8e8e8">5</text>
<line x1="772.8" y1="194" x2="895.7" y2="194" stroke="#9a9a9a" stroke-width="1.1"/>
<line x1="767.8" y1="194" x2="772.8" y2="194" stroke="#ccc" stroke-width="1.4"/>
<text x="767.3" y="199" font-size="12.8" text-anchor="end" fill="#e8e8e8">0</text>
<line x1="772.8" y1="234" x2="895.7" y2="234" stroke="#9a9a9a" stroke-width="1.1"/>
<line x1="767.8" y1="234" x2="772.8" y2="234" stroke="#ccc" stroke-width="1.4"/>
<text x="767.3" y="239" font-size="12.8" text-anchor="end" fill="#e8e8e8" textLength="10.7" lengthAdjust="spacingAndGlyphs">-5</text>
<line x1="772.8" y1="274" x2="895.7" y2="274" stroke="#9a9a9a" stroke-width="1.1"/>
<line x1="767.8" y1="274" x2="772.8" y2="274" stroke="#ccc" stroke-width="1.4"/>
<text x="767.3" y="279" font-size="12.8" text-anchor="end" fill="#e8e8e8" textLength="17.4" lengthAdjust="spacingAndGlyphs">-10</text>
<line x1="767.8" y1="314" x2="772.8" y2="314" stroke="#ccc" stroke-width="1.4"/>
<text x="767.3" y="319" font-size="12.8" text-anchor="end" fill="#e8e8e8" textLength="17.4" lengthAdjust="spacingAndGlyphs">-15</text>
<line x1="772.8" y1="74" x2="895.7" y2="74" stroke="#9a9a9a" stroke-width="2"/>
<line x1="772.8" y1="73" x2="772.8" y2="319" stroke="#aaa" stroke-width="1.5"/>
<line x1="895.7" y1="73" x2="895.7" y2="319" stroke="#aaa" stroke-width="1.5"/>
<line x1="772.8" y1="314" x2="895.7" y2="314" stroke="#aaa" stroke-width="1.5"/>
<line x1="784.8" y1="193.3" x2="883.7" y2="193.3" stroke="#0c0c0c" stroke-width="1.2"/>
<text x="834.25" y="327" font-size="12.8" text-anchor="middle" fill="#e8e8e8">0</text>
<rect x="410.7" y="335.5" width="502.3" height="138.3" fill="#000"/>
<rect x="433.8" y="341.8" width="148.2" height="111.6" fill="#000" stroke="#e4e4e4" stroke-width="1.4"/>
<rect x="607.4" y="341.6" width="147.4" height="112.2" fill="#fff" stroke="#ddd" stroke-width=".8"/>
<text x="507.6" y="467.3" font-size="10.5" text-anchor="middle" fill="#fff">0</text>
<text x="680.8" y="467.3" font-size="10.5" text-anchor="middle" fill="#fff" textLength="16.5" lengthAdjust="spacingAndGlyphs">100</text>
<text transform="translate(422.3,381.5) rotate(-90)" font-size="10.8" font-weight="bold" fill="#f0f0f0" textLength="30" lengthAdjust="spacingAndGlyphs">Actual</text>
<text transform="translate(422.3,444) rotate(-90)" font-size="10.8" font-weight="bold" fill="#f0f0f0" textLength="29.5" lengthAdjust="spacingAndGlyphs">Target</text>
<text x="135.4" y="512.5" font-size="24" fill="#f4f4f4" textLength="198.5" lengthAdjust="spacingAndGlyphs" stroke="#f4f4f4" stroke-width="0.45">Avg dE2000: 0,78</text>
<text x="132" y="547.2" font-size="24" fill="#f4f4f4" textLength="205" lengthAdjust="spacingAndGlyphs" stroke="#f4f4f4" stroke-width="0.45">Max dE2000: 1,22</text>
<text x="105" y="587.2" font-size="24" fill="#f4f4f4" textLength="185.5" lengthAdjust="spacingAndGlyphs" stroke="#f4f4f4" stroke-width="0.45">Current Reading</text>
<text x="105" y="617.4" font-size="19.6" fill="#f4f4f4" textLength="86.5" lengthAdjust="spacingAndGlyphs" stroke="#f4f4f4" stroke-width="0.35">x: 0,3333</text>
<text x="238" y="617.4" font-size="19.6" fill="#f4f4f4" textLength="86.5" lengthAdjust="spacingAndGlyphs" stroke="#f4f4f4" stroke-width="0.35">y: 0,3333</text>
<text x="105" y="651.4" font-size="19.6" fill="#f4f4f4" textLength="40" lengthAdjust="spacingAndGlyphs" stroke="#f4f4f4" stroke-width="0.35">fL: 0</text>
<text x="105" y="680.6" font-size="19.6" fill="#f4f4f4" textLength="81" lengthAdjust="spacingAndGlyphs" stroke="#f4f4f4" stroke-width="0.35">cd/m²: 0</text>
<text x="488.5" y="513.6" font-size="12.8" text-anchor="middle" fill="#e8e8e8" textLength="72.9" lengthAdjust="spacingAndGlyphs">RGB Balance</text>
<rect x="395.8" y="518.2" width="211.5" height="152.8" fill="#202020"/>
<line x1="395.8" y1="534.5" x2="607.3" y2="534.5" stroke="#9a9a9a" stroke-width="1.1"/>
<line x1="390.8" y1="534.5" x2="395.8" y2="534.5" stroke="#ccc" stroke-width="1.4"/>
<text x="390.3" y="539.3" font-size="12.8" text-anchor="end" fill="#e8e8e8" textLength="20.1" lengthAdjust="spacingAndGlyphs">104</text>
<line x1="395.8" y1="565.4" x2="607.3" y2="565.4" stroke="#9a9a9a" stroke-width="1.1"/>
<line x1="390.8" y1="565.4" x2="395.8" y2="565.4" stroke="#ccc" stroke-width="1.4"/>
<text x="390.3" y="570.2" font-size="12.8" text-anchor="end" fill="#e8e8e8" textLength="20.1" lengthAdjust="spacingAndGlyphs">102</text>
<line x1="395.8" y1="595.6" x2="607.3" y2="595.6" stroke="#9a9a9a" stroke-width="1.1"/>
<line x1="390.8" y1="595.6" x2="395.8" y2="595.6" stroke="#ccc" stroke-width="1.4"/>
<text x="390.3" y="600.4" font-size="12.8" text-anchor="end" fill="#e8e8e8" textLength="20.1" lengthAdjust="spacingAndGlyphs">100</text>
<line x1="395.8" y1="626.2" x2="607.3" y2="626.2" stroke="#9a9a9a" stroke-width="1.1"/>
<line x1="390.8" y1="626.2" x2="395.8" y2="626.2" stroke="#ccc" stroke-width="1.4"/>
<text x="390.3" y="631" font-size="12.8" text-anchor="end" fill="#e8e8e8" textLength="13.4" lengthAdjust="spacingAndGlyphs">98</text>
<line x1="395.8" y1="656.7" x2="607.3" y2="656.7" stroke="#9a9a9a" stroke-width="1.1"/>
<line x1="390.8" y1="656.7" x2="395.8" y2="656.7" stroke="#ccc" stroke-width="1.4"/>
<text x="390.3" y="661.5" font-size="12.8" text-anchor="end" fill="#e8e8e8" textLength="13.4" lengthAdjust="spacingAndGlyphs">96</text>
<line x1="395.8" y1="518.2" x2="607.3" y2="518.2" stroke="#9a9a9a" stroke-width="1.6"/>
<line x1="395.8" y1="517.7" x2="395.8" y2="676" stroke="#aaa" stroke-width="1.5"/>
<line x1="607.3" y1="517.7" x2="607.3" y2="676" stroke="#aaa" stroke-width="1.5"/>
<line x1="395.8" y1="671" x2="607.3" y2="671" stroke="#aaa" stroke-width="1.5"/>
<rect x="416.2" y="595.6" width="55" height="75" fill="url(#bb0)" stroke="#050505" stroke-width="1.2"/>
<rect x="473" y="595.6" width="54.7" height="75" fill="url(#bb1)" stroke="#050505" stroke-width="1.2"/>
<rect x="529.5" y="595.6" width="54.9" height="75" fill="url(#bb2)" stroke="#050505" stroke-width="1.2"/>
<text x="500.8" y="685.3" font-size="12.8" text-anchor="middle" fill="#e8e8e8">0</text>
<rect x="624.5" y="491" width="325.5" height="201" fill="#1c1c1c"/>
<rect x="625.5" y="492" width="323.5" height="24.4" fill="url(#th)"/>
<text x="824.5" y="509.2" font-size="12.8" text-anchor="middle" font-weight="bold" fill="#f4f4f4" textLength="10.5" lengthAdjust="spacingAndGlyphs">0</text>
<text x="889.5" y="509.2" font-size="13.5" font-weight="bold" fill="#f4f4f4" textLength="30" lengthAdjust="spacingAndGlyphs">100</text>
<rect x="625.5" y="516.4" width="323.5" height="22.05" fill="#444444"/>
<text x="640.6" y="532.7" font-size="14.5" font-weight="bold" fill="#fafafa" textLength="73" lengthAdjust="spacingAndGlyphs">x: CIE31</text>
<text x="795" y="532.7" font-size="14.5" fill="#f4f4f4" textLength="58" lengthAdjust="spacingAndGlyphs">0,3333</text>
<text x="864.5" y="532.7" font-size="14.5" fill="#f4f4f4" textLength="57.5" lengthAdjust="spacingAndGlyphs">0,3127</text>
<rect x="625.5" y="538.25" width="323.5" height="22.05" fill="#808080"/>
<text x="640.6" y="554.55" font-size="14.5" font-weight="bold" fill="#fafafa" textLength="73" lengthAdjust="spacingAndGlyphs">y: CIE31</text>
<text x="795" y="554.55" font-size="14.5" fill="#f4f4f4" textLength="58" lengthAdjust="spacingAndGlyphs">0,3333</text>
<text x="864.5" y="554.55" font-size="14.5" fill="#f4f4f4" textLength="57.5" lengthAdjust="spacingAndGlyphs">0,3286</text>
<rect x="625.5" y="560.1" width="323.5" height="22.05" fill="#444444"/>
<text x="640.6" y="576.4" font-size="14.5" font-weight="bold" fill="#fafafa" textLength="11.5" lengthAdjust="spacingAndGlyphs">Y</text>
<text x="795" y="576.4" font-size="14.5" fill="#f4f4f4" textLength="58" lengthAdjust="spacingAndGlyphs">0,0000</text>
<text x="864.5" y="576.4" font-size="14.5" fill="#f4f4f4" textLength="78.5" lengthAdjust="spacingAndGlyphs">104,5500</text>
<rect x="625.5" y="581.95" width="323.5" height="22.05" fill="#808080"/>
<text x="640.6" y="598.25" font-size="14.5" font-weight="bold" fill="#fafafa" textLength="133" lengthAdjust="spacingAndGlyphs">Target x:CIE31</text>
<text x="795" y="598.25" font-size="14.5" fill="#f4f4f4" textLength="58" lengthAdjust="spacingAndGlyphs">0,3127</text>
<text x="864.5" y="598.25" font-size="14.5" fill="#f4f4f4" textLength="57.5" lengthAdjust="spacingAndGlyphs">0,3127</text>
<rect x="625.5" y="603.8" width="323.5" height="22.05" fill="#444444"/>
<text x="640.6" y="620.1" font-size="14.5" font-weight="bold" fill="#fafafa" textLength="133" lengthAdjust="spacingAndGlyphs">Target y:CIE31</text>
<text x="795" y="620.1" font-size="14.5" fill="#f4f4f4" textLength="58" lengthAdjust="spacingAndGlyphs">0,3290</text>
<text x="864.5" y="620.1" font-size="14.5" fill="#f4f4f4" textLength="57.5" lengthAdjust="spacingAndGlyphs">0,3290</text>
<rect x="625.5" y="625.65" width="323.5" height="22.05" fill="#808080"/>
<text x="640.6" y="641.95" font-size="14.5" font-weight="bold" fill="#fafafa" textLength="76.5" lengthAdjust="spacingAndGlyphs">Target Y</text>
<text x="795" y="641.95" font-size="14.5" fill="#f4f4f4" textLength="58" lengthAdjust="spacingAndGlyphs">0,0000</text>
<text x="864.5" y="641.95" font-size="14.5" fill="#f4f4f4" textLength="78.5" lengthAdjust="spacingAndGlyphs">104,5500</text>
<rect x="625.5" y="647.5" width="323.5" height="22.05" fill="#444444"/>
<text x="640.6" y="663.8" font-size="14.5" font-weight="bold" fill="#fafafa" textLength="76.5" lengthAdjust="spacingAndGlyphs">ΔE 2000</text>
<text x="795" y="663.8" font-size="14.5" fill="#f4f4f4" textLength="58" lengthAdjust="spacingAndGlyphs">0,0000</text>
<text x="864.5" y="663.8" font-size="14.5" fill="#f4f4f4" textLength="57.5" lengthAdjust="spacingAndGlyphs">0,3412</text>
<rect x="625.5" y="669.35" width="323.5" height="22.05" fill="#808080"/>
<text x="640.6" y="685.65" font-size="14.5" font-weight="bold" fill="#fafafa" textLength="61" lengthAdjust="spacingAndGlyphs">ΔE ITP</text>
<text x="795" y="685.65" font-size="14.5" fill="#f4f4f4" textLength="58" lengthAdjust="spacingAndGlyphs">0,0032</text>
<text x="864.5" y="685.65" font-size="14.5" fill="#f4f4f4" textLength="57.5" lengthAdjust="spacingAndGlyphs">0,1823</text>
<rect x="625" y="491.5" width="324.5" height="200.5" fill="none" stroke="#1a1a1a" stroke-width="1.5"/>
<rect x="921.5" y="14.8" width="582" height="467.3" fill="none" stroke="#000" stroke-width="6"/>
<text x="1212.5" y="33.3" font-size="12.8" text-anchor="middle" fill="#e8e8e8" textLength="70.8" lengthAdjust="spacingAndGlyphs">CIE 1976 u'v'</text>
<rect x="956.5" y="37.5" width="541.5" height="417.5" fill="#262626"/>
<g clip-path="url(#pc)"><g clip-path="url(#lc)">
<rect x="957" y="46" width="541" height="2.6" fill="url(#r0)"/>
<rect x="957" y="48" width="541" height="2.6" fill="url(#r1)"/>
<rect x="957" y="50" width="541" height="2.6" fill="url(#r2)"/>
<rect x="957" y="52" width="541" height="2.6" fill="url(#r3)"/>
<rect x="957" y="54" width="541" height="2.6" fill="url(#r4)"/>
<rect x="957" y="56" width="541" height="2.6" fill="url(#r5)"/>
<rect x="957" y="58" width="541" height="2.6" fill="url(#r6)"/>
<rect x="957" y="60" width="541" height="2.6" fill="url(#r7)"/>
<rect x="957" y="62" width="541" height="2.6" fill="url(#r8)"/>
<rect x="957" y="64" width="541" height="2.6" fill="url(#r9)"/>
<rect x="957" y="66" width="541" height="2.6" fill="url(#r10)"/>
<rect x="957" y="68" width="541" height="2.6" fill="url(#r11)"/>
<rect x="957" y="70" width="541" height="2.6" fill="url(#r12)"/>
<rect x="957" y="72" width="541" height="2.6" fill="url(#r13)"/>
<rect x="957" y="74" width="541" height="2.6" fill="url(#r14)"/>
<rect x="957" y="76" width="541" height="2.6" fill="url(#r15)"/>
<rect x="957" y="78" width="541" height="2.6" fill="url(#r16)"/>
<rect x="957" y="80" width="541" height="2.6" fill="url(#r17)"/>
<rect x="957" y="82" width="541" height="2.6" fill="url(#r18)"/>
<rect x="957" y="84" width="541" height="2.6" fill="url(#r19)"/>
<rect x="957" y="86" width="541" height="2.6" fill="url(#r20)"/>
<rect x="957" y="88" width="541" height="2.6" fill="url(#r21)"/>
<rect x="957" y="90" width="541" height="2.6" fill="url(#r22)"/>
<rect x="957" y="92" width="541" height="2.6" fill="url(#r23)"/>
<rect x="957" y="94" width="541" height="2.6" fill="url(#r24)"/>
<rect x="957" y="96" width="541" height="2.6" fill="url(#r25)"/>
<rect x="957" y="98" width="541" height="2.6" fill="url(#r26)"/>
<rect x="957" y="100" width="541" height="2.6" fill="url(#r27)"/>
<rect x="957" y="102" width="541" height="2.6" fill="url(#r28)"/>
<rect x="957" y="104" width="541" height="2.6" fill="url(#r29)"/>
<rect x="957" y="106" width="541" height="2.6" fill="url(#r30)"/>
<rect x="957" y="108" width="541" height="2.6" fill="url(#r31)"/>
<rect x="957" y="110" width="541" height="2.6" fill="url(#r32)"/>
<rect x="957" y="112" width="541" height="2.6" fill="url(#r33)"/>
<rect x="957" y="114" width="541" height="2.6" fill="url(#r34)"/>
<rect x="957" y="116" width="541" height="2.6" fill="url(#r35)"/>
<rect x="957" y="118" width="541" height="2.6" fill="url(#r36)"/>
<rect x="957" y="120" width="541" height="2.6" fill="url(#r37)"/>
<rect x="957" y="122" width="541" height="2.6" fill="url(#r38)"/>
<rect x="957" y="124" width="541" height="2.6" fill="url(#r39)"/>
<rect x="957" y="126" width="541" height="2.6" fill="url(#r40)"/>
<rect x="957" y="128" width="541" height="2.6" fill="url(#r41)"/>
<rect x="957" y="130" width="541" height="2.6" fill="url(#r42)"/>
<rect x="957" y="132" width="541" height="2.6" fill="url(#r43)"/>
<rect x="957" y="134" width="541" height="2.6" fill="url(#r44)"/>
<rect x="957" y="136" width="541" height="2.6" fill="url(#r45)"/>
<rect x="957" y="138" width="541" height="2.6" fill="url(#r46)"/>
<rect x="957" y="140" width="541" height="2.6" fill="url(#r47)"/>
<rect x="957" y="142" width="541" height="2.6" fill="url(#r48)"/>
<rect x="957" y="144" width="541" height="2.6" fill="url(#r49)"/>
<rect x="957" y="146" width="541" height="2.6" fill="url(#r50)"/>
<rect x="957" y="148" width="541" height="2.6" fill="url(#r51)"/>
<rect x="957" y="150" width="541" height="2.6" fill="url(#r52)"/>
<rect x="957" y="152" width="541" height="2.6" fill="url(#r53)"/>
<rect x="957" y="154" width="541" height="2.6" fill="url(#r54)"/>
<rect x="957" y="156" width="541" height="2.6" fill="url(#r55)"/>
<rect x="957" y="158" width="541" height="2.6" fill="url(#r56)"/>
<rect x="957" y="160" width="541" height="2.6" fill="url(#r57)"/>
<rect x="957" y="162" width="541" height="2.6" fill="url(#r58)"/>
<rect x="957" y="164" width="541" height="2.6" fill="url(#r59)"/>
<rect x="957" y="166" width="541" height="2.6" fill="url(#r60)"/>
<rect x="957" y="168" width="541" height="2.6" fill="url(#r61)"/>
<rect x="957" y="170" width="541" height="2.6" fill="url(#r62)"/>
<rect x="957" y="172" width="541" height="2.6" fill="url(#r63)"/>
<rect x="957" y="174" width="541" height="2.6" fill="url(#r64)"/>
<rect x="957" y="176" width="541" height="2.6" fill="url(#r65)"/>
<rect x="957" y="178" width="541" height="2.6" fill="url(#r66)"/>
<rect x="957" y="180" width="541" height="2.6" fill="url(#r67)"/>
<rect x="957" y="182" width="541" height="2.6" fill="url(#r68)"/>
<rect x="957" y="184" width="541" height="2.6" fill="url(#r69)"/>
<rect x="957" y="186" width="541" height="2.6" fill="url(#r70)"/>
<rect x="957" y="188" width="541" height="2.6" fill="url(#r71)"/>
<rect x="957" y="190" width="541" height="2.6" fill="url(#r72)"/>
<rect x="957" y="192" width="541" height="2.6" fill="url(#r73)"/>
<rect x="957" y="194" width="541" height="2.6" fill="url(#r74)"/>
<rect x="957" y="196" width="541" height="2.6" fill="url(#r75)"/>
<rect x="957" y="198" width="541" height="2.6" fill="url(#r76)"/>
<rect x="957" y="200" width="541" height="2.6" fill="url(#r77)"/>
<rect x="957" y="202" width="541" height="2.6" fill="url(#r78)"/>
<rect x="957" y="204" width="541" height="2.6" fill="url(#r79)"/>
<rect x="957" y="206" width="541" height="2.6" fill="url(#r80)"/>
<rect x="957" y="208" width="541" height="2.6" fill="url(#r81)"/>
<rect x="957" y="210" width="541" height="2.6" fill="url(#r82)"/>
<rect x="957" y="212" width="541" height="2.6" fill="url(#r83)"/>
<rect x="957" y="214" width="541" height="2.6" fill="url(#r84)"/>
<rect x="957" y="216" width="541" height="2.6" fill="url(#r85)"/>
<rect x="957" y="218" width="541" height="2.6" fill="url(#r86)"/>
<rect x="957" y="220" width="541" height="2.6" fill="url(#r87)"/>
<rect x="957" y="222" width="541" height="2.6" fill="url(#r88)"/>
<rect x="957" y="224" width="541" height="2.6" fill="url(#r89)"/>
<rect x="957" y="226" width="541" height="2.6" fill="url(#r90)"/>
<rect x="957" y="228" width="541" height="2.6" fill="url(#r91)"/>
<rect x="957" y="230" width="541" height="2.6" fill="url(#r92)"/>
<rect x="957" y="232" width="541" height="2.6" fill="url(#r93)"/>
<rect x="957" y="234" width="541" height="2.6" fill="url(#r94)"/>
<rect x="957" y="236" width="541" height="2.6" fill="url(#r95)"/>
<rect x="957" y="238" width="541" height="2.6" fill="url(#r96)"/>
<rect x="957" y="240" width="541" height="2.6" fill="url(#r97)"/>
<rect x="957" y="242" width="541" height="2.6" fill="url(#r98)"/>
<rect x="957" y="244" width="541" height="2.6" fill="url(#r99)"/>
<rect x="957" y="246" width="541" height="2.6" fill="url(#r100)"/>
<rect x="957" y="248" width="541" height="2.6" fill="url(#r101)"/>
<rect x="957" y="250" width="541" height="2.6" fill="url(#r102)"/>
<rect x="957" y="252" width="541" height="2.6" fill="url(#r103)"/>
<rect x="957" y="254" width="541" height="2.6" fill="url(#r104)"/>
<rect x="957" y="256" width="541" height="2.6" fill="url(#r105)"/>
<rect x="957" y="258" width="541" height="2.6" fill="url(#r106)"/>
<rect x="957" y="260" width="541" height="2.6" fill="url(#r107)"/>
<rect x="957" y="262" width="541" height="2.6" fill="url(#r108)"/>
<rect x="957" y="264" width="541" height="2.6" fill="url(#r109)"/>
<rect x="957" y="266" width="541" height="2.6" fill="url(#r110)"/>
<rect x="957" y="268" width="541" height="2.6" fill="url(#r111)"/>
<rect x="957" y="270" width="541" height="2.6" fill="url(#r112)"/>
<rect x="957" y="272" width="541" height="2.6" fill="url(#r113)"/>
<rect x="957" y="274" width="541" height="2.6" fill="url(#r114)"/>
<rect x="957" y="276" width="541" height="2.6" fill="url(#r115)"/>
<rect x="957" y="278" width="541" height="2.6" fill="url(#r116)"/>
<rect x="957" y="280" width="541" height="2.6" fill="url(#r117)"/>
<rect x="957" y="282" width="541" height="2.6" fill="url(#r118)"/>
<rect x="957" y="284" width="541" height="2.6" fill="url(#r119)"/>
<rect x="957" y="286" width="541" height="2.6" fill="url(#r120)"/>
<rect x="957" y="288" width="541" height="2.6" fill="url(#r121)"/>
<rect x="957" y="290" width="541" height="2.6" fill="url(#r122)"/>
<rect x="957" y="292" width="541" height="2.6" fill="url(#r123)"/>
<rect x="957" y="294" width="541" height="2.6" fill="url(#r124)"/>
<rect x="957" y="296" width="541" height="2.6" fill="url(#r125)"/>
<rect x="957" y="298" width="541" height="2.6" fill="url(#r126)"/>
<rect x="957" y="300" width="541" height="2.6" fill="url(#r127)"/>
<rect x="957" y="302" width="541" height="2.6" fill="url(#r128)"/>
<rect x="957" y="304" width="541" height="2.6" fill="url(#r129)"/>
<rect x="957" y="306" width="541" height="2.6" fill="url(#r130)"/>
<rect x="957" y="308" width="541" height="2.6" fill="url(#r131)"/>
<rect x="957" y="310" width="541" height="2.6" fill="url(#r132)"/>
<rect x="957" y="312" width="541" height="2.6" fill="url(#r133)"/>
<rect x="957" y="314" width="541" height="2.6" fill="url(#r134)"/>
<rect x="957" y="316" width="541" height="2.6" fill="url(#r135)"/>
<rect x="957" y="318" width="541" height="2.6" fill="url(#r136)"/>
<rect x="957" y="320" width="541" height="2.6" fill="url(#r137)"/>
<rect x="957" y="322" width="541" height="2.6" fill="url(#r138)"/>
<rect x="957" y="324" width="541" height="2.6" fill="url(#r139)"/>
<rect x="957" y="326" width="541" height="2.6" fill="url(#r140)"/>
<rect x="957" y="328" width="541" height="2.6" fill="url(#r141)"/>
<rect x="957" y="330" width="541" height="2.6" fill="url(#r142)"/>
<rect x="957" y="332" width="541" height="2.6" fill="url(#r143)"/>
<rect x="957" y="334" width="541" height="2.6" fill="url(#r144)"/>
<rect x="957" y="336" width="541" height="2.6" fill="url(#r145)"/>
<rect x="957" y="338" width="541" height="2.6" fill="url(#r146)"/>
<rect x="957" y="340" width="541" height="2.6" fill="url(#r147)"/>
<rect x="957" y="342" width="541" height="2.6" fill="url(#r148)"/>
<rect x="957" y="344" width="541" height="2.6" fill="url(#r149)"/>
<rect x="957" y="346" width="541" height="2.6" fill="url(#r150)"/>
<rect x="957" y="348" width="541" height="2.6" fill="url(#r151)"/>
<rect x="957" y="350" width="541" height="2.6" fill="url(#r152)"/>
<rect x="957" y="352" width="541" height="2.6" fill="url(#r153)"/>
<rect x="957" y="354" width="541" height="2.6" fill="url(#r154)"/>
<rect x="957" y="356" width="541" height="2.6" fill="url(#r155)"/>
<rect x="957" y="358" width="541" height="2.6" fill="url(#r156)"/>
<rect x="957" y="360" width="541" height="2.6" fill="url(#r157)"/>
<rect x="957" y="362" width="541" height="2.6" fill="url(#r158)"/>
<rect x="957" y="364" width="541" height="2.6" fill="url(#r159)"/>
<rect x="957" y="366" width="541" height="2.6" fill="url(#r160)"/>
<rect x="957" y="368" width="541" height="2.6" fill="url(#r161)"/>
<rect x="957" y="370" width="541" height="2.6" fill="url(#r162)"/>
<rect x="957" y="372" width="541" height="2.6" fill="url(#r163)"/>
<rect x="957" y="374" width="541" height="2.6" fill="url(#r164)"/>
<rect x="957" y="376" width="541" height="2.6" fill="url(#r165)"/>
<rect x="957" y="378" width="541" height="2.6" fill="url(#r166)"/>
<rect x="957" y="380" width="541" height="2.6" fill="url(#r167)"/>
<rect x="957" y="382" width="541" height="2.6" fill="url(#r168)"/>
<rect x="957" y="384" width="541" height="2.6" fill="url(#r169)"/>
<rect x="957" y="386" width="541" height="2.6" fill="url(#r170)"/>
<rect x="957" y="388" width="541" height="2.6" fill="url(#r171)"/>
<rect x="957" y="390" width="541" height="2.6" fill="url(#r172)"/>
<rect x="957" y="392" width="541" height="2.6" fill="url(#r173)"/>
<rect x="957" y="394" width="541" height="2.6" fill="url(#r174)"/>
<rect x="957" y="396" width="541" height="2.6" fill="url(#r175)"/>
<rect x="957" y="398" width="541" height="2.6" fill="url(#r176)"/>
<rect x="957" y="400" width="541" height="2.6" fill="url(#r177)"/>
<rect x="957" y="402" width="541" height="2.6" fill="url(#r178)"/>
<rect x="957" y="404" width="541" height="2.6" fill="url(#r179)"/>
<rect x="957" y="406" width="541" height="2.6" fill="url(#r180)"/>
<rect x="957" y="408" width="541" height="2.6" fill="url(#r181)"/>
<rect x="957" y="410" width="541" height="2.6" fill="url(#r182)"/>
<rect x="957" y="412" width="541" height="2.6" fill="url(#r183)"/>
<rect x="957" y="414" width="541" height="2.6" fill="url(#r184)"/>
<rect x="957" y="416" width="541" height="2.6" fill="url(#r185)"/>
<rect x="957" y="418" width="541" height="2.6" fill="url(#r186)"/>
<rect x="957" y="420" width="541" height="2.6" fill="url(#r187)"/>
<rect x="957" y="422" width="541" height="2.6" fill="url(#r188)"/>
<rect x="957" y="424" width="541" height="2.6" fill="url(#r189)"/>
<rect x="957" y="426" width="541" height="2.6" fill="url(#r190)"/>
<rect x="957" y="428" width="541" height="2.6" fill="url(#r191)"/>
<rect x="957" y="430" width="541" height="2.6" fill="url(#r192)"/>
<rect x="957" y="432" width="541" height="2.6" fill="url(#r193)"/>
<rect x="957" y="434" width="541" height="2.6" fill="url(#r194)"/>
<rect x="957" y="436" width="541" height="2.6" fill="url(#r195)"/>
<rect x="957" y="438" width="541" height="2.6" fill="url(#r196)"/>
<rect x="957" y="440" width="541" height="2.6" fill="url(#r197)"/>
<rect x="957" y="442" width="541" height="2.6" fill="url(#r198)"/>
<path d="M900,0H1600V500H900Z M1362.6,91.1 1069.1,63.5 1114.5,345.5Z" fill="#000" fill-opacity=".39" fill-rule="evenodd"/>
</g></g>
<line x1="956.3" y1="37" x2="956.3" y2="456" stroke="#b0b0b0" stroke-width="1.5"/>
<line x1="956" y1="455.6" x2="1498.5" y2="455.6" stroke="#b0b0b0" stroke-width="1.5"/>
<line x1="956" y1="37.2" x2="1498.5" y2="37.2" stroke="#8c8c8c" stroke-width="1.4"/>
<line x1="1498.3" y1="37" x2="1498.3" y2="456" stroke="#8c8c8c" stroke-width="1.4"/>
<line x1="956.4" y1="455.6" x2="956.4" y2="460.5" stroke="#ccc" stroke-width="1.4"/>
<text x="955.8" y="474.2" font-size="12.8" text-anchor="middle" fill="#e8e8e8">0</text>
<line x1="951.5" y1="455.6" x2="956.3" y2="455.6" stroke="#ccc" stroke-width="1.4"/>
<text x="950.6" y="460.6" font-size="12.8" text-anchor="end" fill="#e8e8e8">0</text>
<line x1="1001.46" y1="455.6" x2="1001.46" y2="460.5" stroke="#ccc" stroke-width="1.4"/>
<text x="1000.86" y="474.2" font-size="12.8" text-anchor="middle" fill="#e8e8e8" textLength="23.4" lengthAdjust="spacingAndGlyphs">0,05</text>
<line x1="951.5" y1="420.75" x2="956.3" y2="420.75" stroke="#ccc" stroke-width="1.4"/>
<text x="950.6" y="425.75" font-size="12.8" text-anchor="end" fill="#e8e8e8" textLength="23.4" lengthAdjust="spacingAndGlyphs">0,05</text>
<line x1="1046.53" y1="455.6" x2="1046.53" y2="460.5" stroke="#ccc" stroke-width="1.4"/>
<text x="1045.93" y="474.2" font-size="12.8" text-anchor="middle" fill="#e8e8e8" textLength="16.7" lengthAdjust="spacingAndGlyphs">0,1</text>
<line x1="951.5" y1="385.9" x2="956.3" y2="385.9" stroke="#ccc" stroke-width="1.4"/>
<text x="950.6" y="390.9" font-size="12.8" text-anchor="end" fill="#e8e8e8" textLength="16.7" lengthAdjust="spacingAndGlyphs">0,1</text>
<line x1="1091.6" y1="455.6" x2="1091.6" y2="460.5" stroke="#ccc" stroke-width="1.4"/>
<text x="1091" y="474.2" font-size="12.8" text-anchor="middle" fill="#e8e8e8" textLength="23.4" lengthAdjust="spacingAndGlyphs">0,15</text>
<line x1="951.5" y1="351.05" x2="956.3" y2="351.05" stroke="#ccc" stroke-width="1.4"/>
<text x="950.6" y="356.05" font-size="12.8" text-anchor="end" fill="#e8e8e8" textLength="23.4" lengthAdjust="spacingAndGlyphs">0,15</text>
<line x1="1136.66" y1="455.6" x2="1136.66" y2="460.5" stroke="#ccc" stroke-width="1.4"/>
<text x="1136.06" y="474.2" font-size="12.8" text-anchor="middle" fill="#e8e8e8" textLength="16.7" lengthAdjust="spacingAndGlyphs">0,2</text>
<line x1="951.5" y1="316.2" x2="956.3" y2="316.2" stroke="#ccc" stroke-width="1.4"/>
<text x="950.6" y="321.2" font-size="12.8" text-anchor="end" fill="#e8e8e8" textLength="16.7" lengthAdjust="spacingAndGlyphs">0,2</text>
<line x1="1181.72" y1="455.6" x2="1181.72" y2="460.5" stroke="#ccc" stroke-width="1.4"/>
<text x="1181.12" y="474.2" font-size="12.8" text-anchor="middle" fill="#e8e8e8" textLength="23.4" lengthAdjust="spacingAndGlyphs">0,25</text>
<line x1="951.5" y1="281.35" x2="956.3" y2="281.35" stroke="#ccc" stroke-width="1.4"/>
<text x="950.6" y="286.35" font-size="12.8" text-anchor="end" fill="#e8e8e8" textLength="23.4" lengthAdjust="spacingAndGlyphs">0,25</text>
<line x1="1226.79" y1="455.6" x2="1226.79" y2="460.5" stroke="#ccc" stroke-width="1.4"/>
<text x="1226.19" y="474.2" font-size="12.8" text-anchor="middle" fill="#e8e8e8" textLength="16.7" lengthAdjust="spacingAndGlyphs">0,3</text>
<line x1="951.5" y1="246.5" x2="956.3" y2="246.5" stroke="#ccc" stroke-width="1.4"/>
<text x="950.6" y="251.5" font-size="12.8" text-anchor="end" fill="#e8e8e8" textLength="16.7" lengthAdjust="spacingAndGlyphs">0,3</text>
<line x1="1271.86" y1="455.6" x2="1271.86" y2="460.5" stroke="#ccc" stroke-width="1.4"/>
<text x="1271.26" y="474.2" font-size="12.8" text-anchor="middle" fill="#e8e8e8" textLength="23.4" lengthAdjust="spacingAndGlyphs">0,35</text>
<line x1="951.5" y1="211.65" x2="956.3" y2="211.65" stroke="#ccc" stroke-width="1.4"/>
<text x="950.6" y="216.65" font-size="12.8" text-anchor="end" fill="#e8e8e8" textLength="23.4" lengthAdjust="spacingAndGlyphs">0,35</text>
<line x1="1316.92" y1="455.6" x2="1316.92" y2="460.5" stroke="#ccc" stroke-width="1.4"/>
<text x="1316.32" y="474.2" font-size="12.8" text-anchor="middle" fill="#e8e8e8" textLength="16.7" lengthAdjust="spacingAndGlyphs">0,4</text>
<line x1="951.5" y1="176.8" x2="956.3" y2="176.8" stroke="#ccc" stroke-width="1.4"/>
<text x="950.6" y="181.8" font-size="12.8" text-anchor="end" fill="#e8e8e8" textLength="16.7" lengthAdjust="spacingAndGlyphs">0,4</text>
<line x1="1361.98" y1="455.6" x2="1361.98" y2="460.5" stroke="#ccc" stroke-width="1.4"/>
<text x="1361.38" y="474.2" font-size="12.8" text-anchor="middle" fill="#e8e8e8" textLength="23.4" lengthAdjust="spacingAndGlyphs">0,45</text>
<line x1="951.5" y1="141.95" x2="956.3" y2="141.95" stroke="#ccc" stroke-width="1.4"/>
<text x="950.6" y="146.95" font-size="12.8" text-anchor="end" fill="#e8e8e8" textLength="23.4" lengthAdjust="spacingAndGlyphs">0,45</text>
<line x1="1407.05" y1="455.6" x2="1407.05" y2="460.5" stroke="#ccc" stroke-width="1.4"/>
<text x="1406.45" y="474.2" font-size="12.8" text-anchor="middle" fill="#e8e8e8" textLength="16.7" lengthAdjust="spacingAndGlyphs">0,5</text>
<line x1="951.5" y1="107.1" x2="956.3" y2="107.1" stroke="#ccc" stroke-width="1.4"/>
<text x="950.6" y="112.1" font-size="12.8" text-anchor="end" fill="#e8e8e8" textLength="16.7" lengthAdjust="spacingAndGlyphs">0,5</text>
<line x1="1452.12" y1="455.6" x2="1452.12" y2="460.5" stroke="#ccc" stroke-width="1.4"/>
<text x="1451.52" y="474.2" font-size="12.8" text-anchor="middle" fill="#e8e8e8" textLength="23.4" lengthAdjust="spacingAndGlyphs">0,55</text>
<line x1="951.5" y1="72.25" x2="956.3" y2="72.25" stroke="#ccc" stroke-width="1.4"/>
<text x="950.6" y="77.25" font-size="12.8" text-anchor="end" fill="#e8e8e8" textLength="23.4" lengthAdjust="spacingAndGlyphs">0,55</text>
<g fill="#fff" fill-opacity=".22" stroke="#fff" stroke-width="1.3">
<rect x="1062.1" y="57.1" width="11.4" height="11.4"/>
<rect x="1070.4" y="65.3" width="11.4" height="11.4"/>
<rect x="1080.8" y="75.6" width="11.4" height="11.4"/>
<rect x="1093.4" y="88.4" width="11.4" height="11.4"/>
<rect x="1108.5" y="103.5" width="11.4" height="11.4"/>
<rect x="1133.7" y="63.4" width="11.4" height="11.4"/>
<rect x="1133.7" y="71.6" width="11.4" height="11.4"/>
<rect x="1133.0" y="80.6" width="11.4" height="11.4"/>
<rect x="1131.6" y="93.1" width="11.4" height="11.4"/>
<rect x="1130.7" y="106.8" width="11.4" height="11.4"/>
<rect x="1074.6" y="131.3" width="11.4" height="11.4"/>
<rect x="1083.9" y="130.1" width="11.4" height="11.4"/>
<rect x="1095.5" y="129.0" width="11.4" height="11.4"/>
<rect x="1106.3" y="127.4" width="11.4" height="11.4"/>
<rect x="1116.9" y="125.3" width="11.4" height="11.4"/>
<rect x="1356.4" y="84.8" width="11.4" height="11.4"/>
<rect x="1317.4" y="91.5" width="11.4" height="11.4"/>
<rect x="1270.3" y="98.9" width="11.4" height="11.4"/>
<rect x="1225.3" y="106.9" width="11.4" height="11.4"/>
<rect x="1174.2" y="114.8" width="11.4" height="11.4"/>
<rect x="1225.2" y="219.0" width="11.4" height="11.4"/>
<rect x="1202.1" y="195.7" width="11.4" height="11.4"/>
<rect x="1180.2" y="173.9" width="11.4" height="11.4"/>
<rect x="1161.5" y="156.5" width="11.4" height="11.4"/>
<rect x="1144.3" y="138.0" width="11.4" height="11.4"/>
<rect x="1108.4" y="339.0" width="11.4" height="11.4"/>
<rect x="1114.3" y="281.6" width="11.4" height="11.4"/>
<rect x="1118.9" y="228.1" width="11.4" height="11.4"/>
<rect x="1122.2" y="185.5" width="11.4" height="11.4"/>
<rect x="1125.6" y="151.6" width="11.4" height="11.4"/>
</g>
<g stroke="#0c0c0c" stroke-width="1.3">
<circle cx="1066.1" cy="63.1" r="3.6" fill="#2ab42a"/>
<circle cx="1075.1" cy="70.9" r="3.6" fill="#4fbb4f"/>
<circle cx="1086.5" cy="81.7" r="3.6" fill="#5dbb5d"/>
<circle cx="1100.4" cy="94.2" r="3.6" fill="#73b773"/>
<circle cx="1115.3" cy="109.4" r="3.6" fill="#90b790"/>
<circle cx="1138.4" cy="68.7" r="3.6" fill="#c6c61c"/>
<circle cx="1138.1" cy="76.8" r="3.6" fill="#c2c24f"/>
<circle cx="1138.1" cy="86.0" r="3.6" fill="#bebe5d"/>
<circle cx="1137.3" cy="98.8" r="3.6" fill="#bbbb73"/>
<circle cx="1136.4" cy="112.5" r="3.6" fill="#bebe93"/>
<circle cx="1078.4" cy="137.0" r="3.6" fill="#1fb4b4"/>
<circle cx="1088.7" cy="135.8" r="3.6" fill="#4fbbbb"/>
<circle cx="1100.5" cy="134.7" r="3.6" fill="#64bbbb"/>
<circle cx="1111.6" cy="133.1" r="3.6" fill="#7ab7b7"/>
<circle cx="1122.4" cy="131.0" r="3.6" fill="#93b7b4"/>
<circle cx="1361.5" cy="91.5" r="3.6" fill="#cb1c27"/>
<circle cx="1323.1" cy="97.4" r="3.6" fill="#c9484f"/>
<circle cx="1276.0" cy="105.7" r="3.6" fill="#c65d61"/>
<circle cx="1231.0" cy="112.5" r="3.6" fill="#c27376"/>
<circle cx="1178.9" cy="121.6" r="3.6" fill="#c29093"/>
<circle cx="1234.1" cy="223.6" r="3.6" fill="#c91cc9"/>
<circle cx="1209.8" cy="200.2" r="3.6" fill="#c94fc2"/>
<circle cx="1185.9" cy="179.6" r="3.6" fill="#c664c2"/>
<circle cx="1167.4" cy="162.2" r="3.6" fill="#be7abb"/>
<circle cx="1150.0" cy="143.7" r="3.6" fill="#bb93b7"/>
<circle cx="1116.4" cy="344.7" r="3.6" fill="#2020c9"/>
<circle cx="1118.7" cy="287.8" r="3.6" fill="#4f4fc9"/>
<circle cx="1123.3" cy="232.7" r="3.6" fill="#645dc6"/>
<circle cx="1128.3" cy="190.3" r="3.6" fill="#7a73be"/>
<circle cx="1130.4" cy="156.9" r="3.6" fill="#938cbb"/>
</g>
<rect x="1128.5" y="123.5" width="10.8" height="10.8" fill="#fff" fill-opacity=".5" stroke="#000" stroke-width="1.6"/>
<circle cx="1134.8" cy="128.9" r="3.3" fill="#fff" stroke="#222" stroke-width="1"/>
<circle cx="1145.4" cy="125.1" r="3.7" fill="#000"/>
<rect x="1313.3" y="325.8" width="179.9" height="3.6" fill="url(#i0)"/>
<rect x="1313.3" y="328.8" width="179.9" height="3.6" fill="url(#i1)"/>
<rect x="1313.3" y="331.8" width="179.9" height="3.6" fill="url(#i2)"/>
<rect x="1313.3" y="334.8" width="179.9" height="3.6" fill="url(#i3)"/>
<rect x="1313.3" y="337.8" width="179.9" height="3.6" fill="url(#i4)"/>
<rect x="1313.3" y="340.8" width="179.9" height="3.6" fill="url(#i5)"/>
<rect x="1313.3" y="343.8" width="179.9" height="3.6" fill="url(#i6)"/>
<rect x="1313.3" y="346.8" width="179.9" height="3.6" fill="url(#i7)"/>
<rect x="1313.3" y="349.8" width="179.9" height="3.6" fill="url(#i8)"/>
<rect x="1313.3" y="352.8" width="179.9" height="3.6" fill="url(#i9)"/>
<rect x="1313.3" y="355.8" width="179.9" height="3.6" fill="url(#i10)"/>
<rect x="1313.3" y="358.8" width="179.9" height="3.6" fill="url(#i11)"/>
<rect x="1313.3" y="361.8" width="179.9" height="3.6" fill="url(#i12)"/>
<rect x="1313.3" y="364.8" width="179.9" height="3.6" fill="url(#i13)"/>
<rect x="1313.3" y="367.8" width="179.9" height="3.6" fill="url(#i14)"/>
<rect x="1313.3" y="370.8" width="179.9" height="3.6" fill="url(#i15)"/>
<rect x="1313.3" y="373.8" width="179.9" height="3.6" fill="url(#i16)"/>
<rect x="1313.3" y="376.8" width="179.9" height="3.6" fill="url(#i17)"/>
<rect x="1313.3" y="379.8" width="179.9" height="3.6" fill="url(#i18)"/>
<rect x="1313.3" y="382.8" width="179.9" height="3.6" fill="url(#i19)"/>
<rect x="1313.3" y="385.8" width="179.9" height="3.6" fill="url(#i20)"/>
<rect x="1313.3" y="388.8" width="179.9" height="3.6" fill="url(#i21)"/>
<rect x="1313.3" y="391.8" width="179.9" height="3.6" fill="url(#i22)"/>
<rect x="1313.3" y="394.8" width="179.9" height="3.6" fill="url(#i23)"/>
<rect x="1313.3" y="397.8" width="179.9" height="3.6" fill="url(#i24)"/>
<rect x="1313.3" y="400.8" width="179.9" height="3.6" fill="url(#i25)"/>
<rect x="1313.3" y="403.8" width="179.9" height="3.6" fill="url(#i26)"/>
<rect x="1313.3" y="406.8" width="179.9" height="3.6" fill="url(#i27)"/>
<rect x="1313.3" y="409.8" width="179.9" height="3.6" fill="url(#i28)"/>
<rect x="1313.3" y="412.8" width="179.9" height="3.6" fill="url(#i29)"/>
<rect x="1313.3" y="415.8" width="179.9" height="3.6" fill="url(#i30)"/>
<rect x="1313.3" y="418.8" width="179.9" height="3.6" fill="url(#i31)"/>
<rect x="1313.3" y="421.8" width="179.9" height="3.6" fill="url(#i32)"/>
<rect x="1313.3" y="424.8" width="179.9" height="3.6" fill="url(#i33)"/>
<rect x="1313.3" y="427.8" width="179.9" height="3.6" fill="url(#i34)"/>
<rect x="1313.3" y="430.8" width="179.9" height="3.6" fill="url(#i35)"/>
<rect x="1313.3" y="433.8" width="179.9" height="3.6" fill="url(#i36)"/>
<rect x="1313.3" y="436.8" width="179.9" height="3.6" fill="url(#i37)"/>
<rect x="1313.3" y="439.8" width="179.9" height="3.6" fill="url(#i38)"/>
<rect x="1313.3" y="442.8" width="179.9" height="3.6" fill="url(#i39)"/>
<rect x="1313.3" y="445.8" width="179.9" height="2.6" fill="url(#i40)"/>
<rect x="1313.3" y="325.8" width="179.9" height="122.6" fill="none" stroke="#8a8a8a" stroke-width="1.6"/>
<rect x="1331" y="382.8" width="11.4" height="11.4" fill="#fff" fill-opacity=".45" stroke="#fff" stroke-opacity=".6" stroke-width="1"/>
<circle cx="1336.6" cy="388.6" r="3.5" fill="#aaa" stroke="#222" stroke-width="1.2"/>
<rect x="1396.8" y="380.8" width="11.4" height="11.4" fill="#fff" fill-opacity=".5" stroke="#000" stroke-width="1.6"/>
<circle cx="1402.6" cy="387.6" r="3.4" fill="#fff" stroke="#222" stroke-width="1"/>
<circle cx="1474" cy="376" r="4" fill="#000"/>
<rect x="0" y="690.8" width="1600" height="2" fill="#262626"/>
<rect x="0" y="692.5" width="1600" height="65.5" fill="url(#bar)"/>
<rect x="1.2" y="693.5" width="47" height="70" rx="3.5" fill="url(#bt)"/>
<circle cx="24.5" cy="702.7" r="7.6" fill="url(#ci)"/>
<path d="M20.7,704 L24.5,700.2 L28.3,704Z" fill="#151515"/>
<rect x="6.3" y="720.6" width="36.6" height="31.4" rx="3" fill="#fff"/>
<rect x="54.3" y="694" width="156" height="70" rx="3" fill="#2b2b2b"/>
<rect x="59.2" y="698.4" width="146.4" height="37.4" rx="3.5" fill="#000"/>
<text x="132" y="752.9" font-size="12.5" text-anchor="middle" font-weight="bold" fill="#fff">0</text>
<rect x="212.5" y="693.5" width="155.8" height="64.3" rx="3.5" fill="url(#sel)"/>
<rect x="218" y="699.2" width="145.2" height="36.6" rx="3" fill="#fff"/>
<text x="281.6" y="752.2" font-size="10.6" font-weight="bold" fill="#2a2a2a" textLength="18" lengthAdjust="spacingAndGlyphs">100</text>
<path d="M1263.5,758 V697 a3.5,3.5 0 0 1 3.5,-3.5 H1310 a3.5,3.5 0 0 1 3.5,3.5 V758Z" fill="url(#bt)"/>
<line x1="1263.5" y1="712" x2="1313.5" y2="712" stroke="#4a4a4a" stroke-width="1"/>
<line x1="1263.5" y1="713" x2="1313.5" y2="713" stroke="#999" stroke-width="0.8"/>
<circle cx="1288.4" cy="702.7" r="7.4" fill="url(#ci)"/>
<path d="M1284.2,704.2 L1288.4,700 L1292.6,704.2Z" fill="#1a1a1a"/>
<rect x="1273.8" y="720.6" width="29.4" height="28.6" rx="4" fill="#808080" stroke="#0a0a0a" stroke-width="1.9"/>
<path d="M1274.8,734.5 V724.5 a3,3 0 0 1 3,-3 H1299.2 a3,3 0 0 1 3,3 V734.5Z" fill="#9c9c9c"/>
<rect x="1281.5" y="728.3" width="14.5" height="13.8" fill="#000"/>
<rect x="1281.5" y="728.3" width="14.5" height="6.2" fill="#1c1c1c"/>
<rect x="1315" y="693" width="46.4" height="31.2" rx="2" fill="url(#bt)"/>
<circle cx="1338.2" cy="709" r="10.2" fill="url(#ci)"/>
<rect x="1362.6" y="693" width="45.8" height="31.2" rx="2" fill="url(#bt)"/>
<circle cx="1385.5" cy="709" r="10.2" fill="url(#ci)"/>
<rect x="1409.6" y="693" width="45.8" height="31.2" rx="2" fill="url(#bt)"/>
<circle cx="1432.5" cy="709" r="10.2" fill="url(#ci)"/>
<rect x="1456.6" y="693" width="45.6" height="31.2" rx="2" fill="url(#bt)"/>
<circle cx="1479.4" cy="709" r="10.2" fill="url(#ci)"/>
<rect x="1503.4" y="693" width="45.8" height="31.2" rx="2" fill="url(#bt)"/>
<circle cx="1526.3" cy="709" r="10.2" fill="url(#ci)"/>
<rect x="1550.4" y="693" width="46" height="31.2" rx="2" fill="url(#bt)"/>
<circle cx="1573.4" cy="709" r="10.2" fill="url(#ci)"/>
<rect x="1315" y="726" width="140.6" height="36" rx="2.5" fill="url(#bt2)"/>
<rect x="1457" y="726" width="140.6" height="36" rx="2.5" fill="url(#bt2)"/>
<circle cx="1346.5" cy="741.2" r="10.2" fill="url(#ci)"/>
<circle cx="1568.5" cy="741.2" r="10.2" fill="url(#ci)"/>
<rect x="1334" y="704.6" width="8.6" height="8.6" fill="#333"/>
<path d="M1381.6,703.4 L1391,709 L1381.6,714.6Z" fill="#333"/>
<path d="M1430.4,702 h-2.8 v11.8 h2.8 M1437.2,702 h2.8 v11.8 h-2.8" fill="none" stroke="#333" stroke-width="2"/>
<path d="M1431.4,708 h4.8 M1432.6,706.4 l-1.6,1.6 l1.6,1.6 M1435,706.4 l1.6,1.6 l-1.6,1.6" fill="none" stroke="#333" stroke-width="1"/>
<path d="M1480.4,708.6 c-1.8,-3.4 -6.6,-3.4 -6.6,0 c0,3.4 4.8,3.4 6.6,0 c1.8,-3.4 6.6,-3.4 6.6,0 c0,3.4 -4.8,3.4 -6.6,0z" fill="none" stroke="#333" stroke-width="2"/>
<path d="M1521.6,707.6 a5.4,5.4 0 0 1 9.2,-2.4 M1532.4,710.4 a5.4,5.4 0 0 1 -9.2,2.4" fill="none" stroke="#333" stroke-width="2.4"/>
<path d="M1528.2,702 l5.2,-0.4 l-0.8,5.6z M1525.8,716 l-5.2,0.4 l0.8,-5.6z" fill="#333"/>
<path d="M1346.6,737.4 l-3.2,4 l3.2,4 M1351.4,737.4 l-3.2,4 l3.2,4" fill="none" stroke="#333" stroke-width="2"/>
<path d="M1564.6,737.4 l3.2,4 l-3.2,4 M1569.4,737.4 l3.2,4 l-3.2,4" fill="none" stroke="#333" stroke-width="2"/>
<text x="1374.8" y="749.2" font-size="21.8" fill="#303030" textLength="52.3" lengthAdjust="spacingAndGlyphs" stroke="#303030" stroke-width="0.6">Back</text>
<text x="1486" y="749.2" font-size="21.8" fill="#303030" textLength="53" lengthAdjust="spacingAndGlyphs" stroke="#303030" stroke-width="0.6">Next</text>
<rect x="1596.7" y="0" width="3.3" height="758" fill="#1c1c1c"/>
</svg>
</body></html>
